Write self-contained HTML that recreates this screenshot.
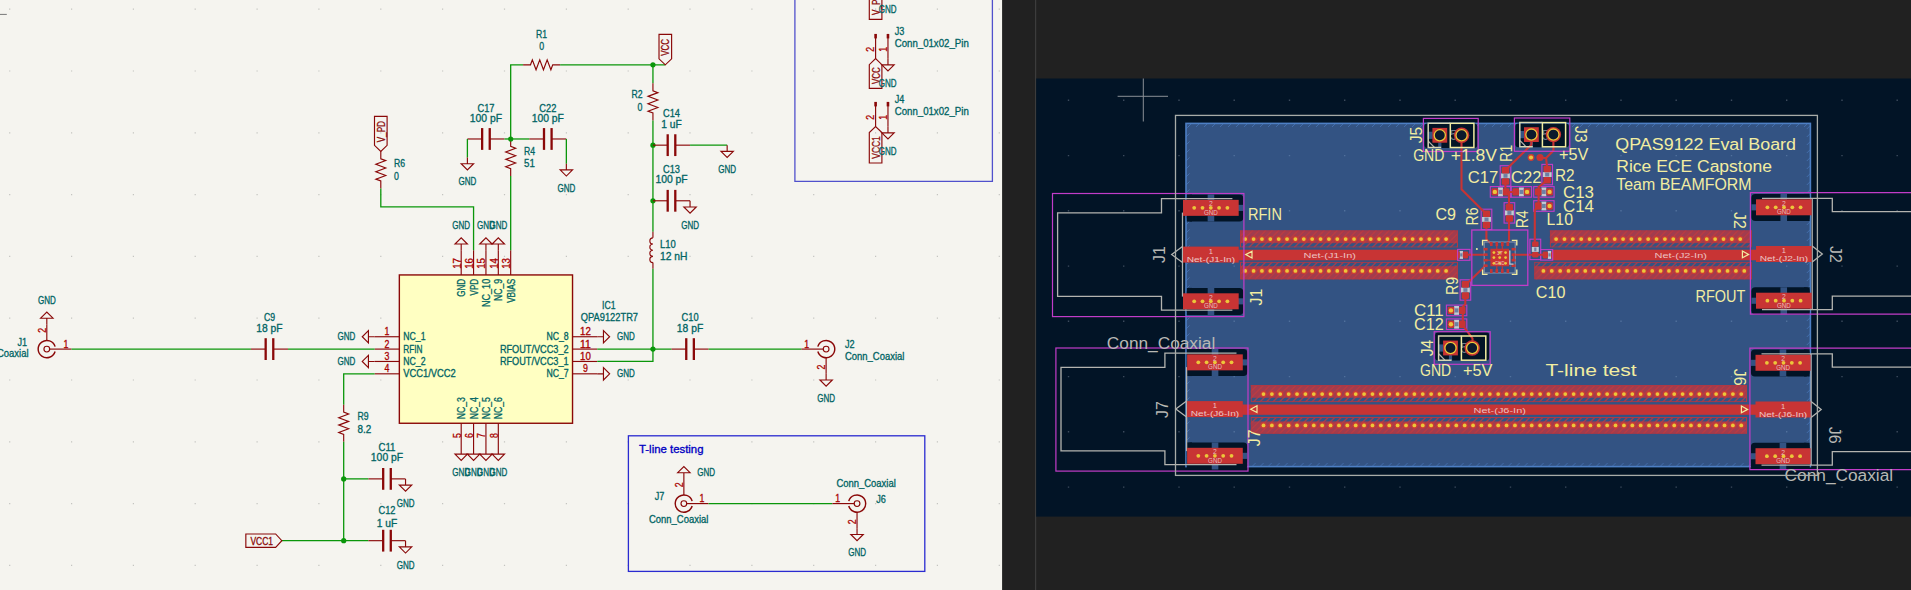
<!DOCTYPE html>
<html><head><meta charset="utf-8"><title>QPA9122 Eval Board</title>
<style>html,body{margin:0;padding:0;background:#212121;overflow:hidden}svg{display:block}text{font-family:"Liberation Sans",sans-serif;white-space:pre}</style></head><body>
<svg width="1911" height="590" viewBox="0 0 1911 590">
<g font-family="Liberation Sans, sans-serif">
<rect x="0" y="0" width="1002.3" height="590" fill="#f5f4ef"/>
<path d="M9.1 9.2h1.2M9.1 71.0h1.2M9.1 132.8h1.2M9.1 194.6h1.2M9.1 256.4h1.2M9.1 318.2h1.2M9.1 380.0h1.2M9.1 441.8h1.2M9.1 503.6h1.2M9.1 565.4h1.2M71.0 9.2h1.2M71.0 71.0h1.2M71.0 132.8h1.2M71.0 194.6h1.2M71.0 256.4h1.2M71.0 318.2h1.2M71.0 380.0h1.2M71.0 441.8h1.2M71.0 503.6h1.2M71.0 565.4h1.2M132.8 9.2h1.2M132.8 71.0h1.2M132.8 132.8h1.2M132.8 194.6h1.2M132.8 256.4h1.2M132.8 318.2h1.2M132.8 380.0h1.2M132.8 441.8h1.2M132.8 503.6h1.2M132.8 565.4h1.2M194.6 9.2h1.2M194.6 71.0h1.2M194.6 132.8h1.2M194.6 194.6h1.2M194.6 256.4h1.2M194.6 318.2h1.2M194.6 380.0h1.2M194.6 441.8h1.2M194.6 503.6h1.2M194.6 565.4h1.2M256.5 9.2h1.2M256.5 71.0h1.2M256.5 132.8h1.2M256.5 194.6h1.2M256.5 256.4h1.2M256.5 318.2h1.2M256.5 380.0h1.2M256.5 441.8h1.2M256.5 503.6h1.2M256.5 565.4h1.2M318.3 9.2h1.2M318.3 71.0h1.2M318.3 132.8h1.2M318.3 194.6h1.2M318.3 256.4h1.2M318.3 318.2h1.2M318.3 380.0h1.2M318.3 441.8h1.2M318.3 503.6h1.2M318.3 565.4h1.2M380.2 9.2h1.2M380.2 71.0h1.2M380.2 132.8h1.2M380.2 194.6h1.2M380.2 256.4h1.2M380.2 318.2h1.2M380.2 380.0h1.2M380.2 441.8h1.2M380.2 503.6h1.2M380.2 565.4h1.2M442.0 9.2h1.2M442.0 71.0h1.2M442.0 132.8h1.2M442.0 194.6h1.2M442.0 256.4h1.2M442.0 318.2h1.2M442.0 380.0h1.2M442.0 441.8h1.2M442.0 503.6h1.2M442.0 565.4h1.2M503.9 9.2h1.2M503.9 71.0h1.2M503.9 132.8h1.2M503.9 194.6h1.2M503.9 256.4h1.2M503.9 318.2h1.2M503.9 380.0h1.2M503.9 441.8h1.2M503.9 503.6h1.2M503.9 565.4h1.2M565.8 9.2h1.2M565.8 71.0h1.2M565.8 132.8h1.2M565.8 194.6h1.2M565.8 256.4h1.2M565.8 318.2h1.2M565.8 380.0h1.2M565.8 441.8h1.2M565.8 503.6h1.2M565.8 565.4h1.2M627.6 9.2h1.2M627.6 71.0h1.2M627.6 132.8h1.2M627.6 194.6h1.2M627.6 256.4h1.2M627.6 318.2h1.2M627.6 380.0h1.2M627.6 441.8h1.2M627.6 503.6h1.2M627.6 565.4h1.2M689.4 9.2h1.2M689.4 71.0h1.2M689.4 132.8h1.2M689.4 194.6h1.2M689.4 256.4h1.2M689.4 318.2h1.2M689.4 380.0h1.2M689.4 441.8h1.2M689.4 503.6h1.2M689.4 565.4h1.2M751.3 9.2h1.2M751.3 71.0h1.2M751.3 132.8h1.2M751.3 194.6h1.2M751.3 256.4h1.2M751.3 318.2h1.2M751.3 380.0h1.2M751.3 441.8h1.2M751.3 503.6h1.2M751.3 565.4h1.2M813.1 9.2h1.2M813.1 71.0h1.2M813.1 132.8h1.2M813.1 194.6h1.2M813.1 256.4h1.2M813.1 318.2h1.2M813.1 380.0h1.2M813.1 441.8h1.2M813.1 503.6h1.2M813.1 565.4h1.2M875.0 9.2h1.2M875.0 71.0h1.2M875.0 132.8h1.2M875.0 194.6h1.2M875.0 256.4h1.2M875.0 318.2h1.2M875.0 380.0h1.2M875.0 441.8h1.2M875.0 503.6h1.2M875.0 565.4h1.2M936.8 9.2h1.2M936.8 71.0h1.2M936.8 132.8h1.2M936.8 194.6h1.2M936.8 256.4h1.2M936.8 318.2h1.2M936.8 380.0h1.2M936.8 441.8h1.2M936.8 503.6h1.2M936.8 565.4h1.2M998.7 9.2h1.2M998.7 71.0h1.2M998.7 132.8h1.2M998.7 194.6h1.2M998.7 256.4h1.2M998.7 318.2h1.2M998.7 380.0h1.2M998.7 441.8h1.2M998.7 503.6h1.2M998.7 565.4h1.2" stroke="#c4c4c0" stroke-width="1.2"/>
<line x1="0.00" y1="14.40" x2="6.80" y2="14.40" stroke="#777" stroke-width="1" stroke-linecap="butt"/>
<path d="M794.9 0 V181.4 H992.4 V0" stroke="#5050cc" stroke-width="1.3" fill="none"/>
<rect x="628.4" y="435.8" width="296.4" height="135.6" stroke="#2a2ad0" stroke-width="1.3" fill="none"/>
<text transform="translate(639.00 449.40) rotate(0)" x="0.00" y="3.80" font-size="9.99" textLength="64.50" lengthAdjust="spacingAndGlyphs" fill="#0000c2" stroke="#0000c2" stroke-width="0.3">T-line testing</text>
<rect x="399.35" y="274.94" width="173.18" height="148.32" fill="#ffffc2" stroke="#8a0808" stroke-width="1.4"/>
<line x1="374.61" y1="336.74" x2="399.35" y2="336.74" stroke="#8a0808" stroke-width="1.15" stroke-linecap="butt"/>
<text transform="translate(403.25 336.34) rotate(0)" x="0.00" y="3.80" font-size="9.99" textLength="22.26" lengthAdjust="spacingAndGlyphs" fill="#006464" stroke="#006464" stroke-width="0.3">NC_1</text>
<text transform="translate(386.98 331.54) rotate(0)" x="-2.45" y="3.80" font-size="9.99" textLength="4.90" lengthAdjust="spacingAndGlyphs" fill="#a90000" stroke="#a90000" stroke-width="0.3">1</text>
<line x1="374.61" y1="349.10" x2="399.35" y2="349.10" stroke="#8a0808" stroke-width="1.15" stroke-linecap="butt"/>
<text transform="translate(403.25 348.70) rotate(0)" x="0.00" y="3.80" font-size="9.99" textLength="19.32" lengthAdjust="spacingAndGlyphs" fill="#006464" stroke="#006464" stroke-width="0.3">RFIN</text>
<text transform="translate(386.98 343.90) rotate(0)" x="-2.45" y="3.80" font-size="9.99" textLength="4.90" lengthAdjust="spacingAndGlyphs" fill="#a90000" stroke="#a90000" stroke-width="0.3">2</text>
<line x1="374.61" y1="361.46" x2="399.35" y2="361.46" stroke="#8a0808" stroke-width="1.15" stroke-linecap="butt"/>
<text transform="translate(403.25 361.06) rotate(0)" x="0.00" y="3.80" font-size="9.99" textLength="22.26" lengthAdjust="spacingAndGlyphs" fill="#006464" stroke="#006464" stroke-width="0.3">NC_2</text>
<text transform="translate(386.98 356.26) rotate(0)" x="-2.45" y="3.80" font-size="9.99" textLength="4.90" lengthAdjust="spacingAndGlyphs" fill="#a90000" stroke="#a90000" stroke-width="0.3">3</text>
<line x1="374.61" y1="373.82" x2="399.35" y2="373.82" stroke="#8a0808" stroke-width="1.15" stroke-linecap="butt"/>
<text transform="translate(403.25 373.42) rotate(0)" x="0.00" y="3.80" font-size="9.99" textLength="52.57" lengthAdjust="spacingAndGlyphs" fill="#006464" stroke="#006464" stroke-width="0.3">VCC1/VCC2</text>
<text transform="translate(386.98 368.62) rotate(0)" x="-2.45" y="3.80" font-size="9.99" textLength="4.90" lengthAdjust="spacingAndGlyphs" fill="#a90000" stroke="#a90000" stroke-width="0.3">4</text>
<line x1="572.53" y1="336.74" x2="597.27" y2="336.74" stroke="#8a0808" stroke-width="1.15" stroke-linecap="butt"/>
<text transform="translate(568.63 336.34) rotate(0)" x="-22.26" y="3.80" font-size="9.99" textLength="22.26" lengthAdjust="spacingAndGlyphs" fill="#006464" stroke="#006464" stroke-width="0.3">NC_8</text>
<text transform="translate(585.40 331.54) rotate(0)" x="-5.39" y="3.80" font-size="9.99" textLength="10.78" lengthAdjust="spacingAndGlyphs" fill="#a90000" stroke="#a90000" stroke-width="0.3">12</text>
<line x1="572.53" y1="349.10" x2="597.27" y2="349.10" stroke="#8a0808" stroke-width="1.15" stroke-linecap="butt"/>
<text transform="translate(568.63 348.70) rotate(0)" x="-68.76" y="3.80" font-size="9.99" textLength="68.76" lengthAdjust="spacingAndGlyphs" fill="#006464" stroke="#006464" stroke-width="0.3">RFOUT/VCC3_2</text>
<text transform="translate(585.40 343.90) rotate(0)" x="-5.39" y="3.80" font-size="9.99" textLength="10.78" lengthAdjust="spacingAndGlyphs" fill="#a90000" stroke="#a90000" stroke-width="0.3">11</text>
<line x1="572.53" y1="361.46" x2="597.27" y2="361.46" stroke="#8a0808" stroke-width="1.15" stroke-linecap="butt"/>
<text transform="translate(568.63 361.06) rotate(0)" x="-68.76" y="3.80" font-size="9.99" textLength="68.76" lengthAdjust="spacingAndGlyphs" fill="#006464" stroke="#006464" stroke-width="0.3">RFOUT/VCC3_1</text>
<text transform="translate(585.40 356.26) rotate(0)" x="-5.39" y="3.80" font-size="9.99" textLength="10.78" lengthAdjust="spacingAndGlyphs" fill="#a90000" stroke="#a90000" stroke-width="0.3">10</text>
<line x1="572.53" y1="373.82" x2="597.27" y2="373.82" stroke="#8a0808" stroke-width="1.15" stroke-linecap="butt"/>
<text transform="translate(568.63 373.42) rotate(0)" x="-22.26" y="3.80" font-size="9.99" textLength="22.26" lengthAdjust="spacingAndGlyphs" fill="#006464" stroke="#006464" stroke-width="0.3">NC_7</text>
<text transform="translate(585.40 368.62) rotate(0)" x="-2.45" y="3.80" font-size="9.99" textLength="4.90" lengthAdjust="spacingAndGlyphs" fill="#a90000" stroke="#a90000" stroke-width="0.3">9</text>
<line x1="461.20" y1="250.22" x2="461.20" y2="274.94" stroke="#8a0808" stroke-width="1.15" stroke-linecap="butt"/>
<text transform="translate(461.50 278.84) rotate(-90)" x="-17.85" y="3.80" font-size="9.99" textLength="17.85" lengthAdjust="spacingAndGlyphs" fill="#006464" stroke="#006464" stroke-width="0.3">GND</text>
<text transform="translate(456.90 263.48) rotate(-90)" x="-5.39" y="3.80" font-size="9.99" textLength="10.78" lengthAdjust="spacingAndGlyphs" fill="#a90000" stroke="#a90000" stroke-width="0.3">17</text>
<line x1="473.57" y1="250.22" x2="473.57" y2="274.94" stroke="#8a0808" stroke-width="1.15" stroke-linecap="butt"/>
<text transform="translate(473.87 278.84) rotate(-90)" x="-16.67" y="3.80" font-size="9.99" textLength="16.67" lengthAdjust="spacingAndGlyphs" fill="#006464" stroke="#006464" stroke-width="0.3">VPD</text>
<text transform="translate(469.27 263.48) rotate(-90)" x="-5.39" y="3.80" font-size="9.99" textLength="10.78" lengthAdjust="spacingAndGlyphs" fill="#a90000" stroke="#a90000" stroke-width="0.3">16</text>
<line x1="485.94" y1="250.22" x2="485.94" y2="274.94" stroke="#8a0808" stroke-width="1.15" stroke-linecap="butt"/>
<text transform="translate(486.24 278.84) rotate(-90)" x="-28.15" y="3.80" font-size="9.99" textLength="28.15" lengthAdjust="spacingAndGlyphs" fill="#006464" stroke="#006464" stroke-width="0.3">NC_10</text>
<text transform="translate(481.64 263.48) rotate(-90)" x="-5.39" y="3.80" font-size="9.99" textLength="10.78" lengthAdjust="spacingAndGlyphs" fill="#a90000" stroke="#a90000" stroke-width="0.3">15</text>
<line x1="498.31" y1="250.22" x2="498.31" y2="274.94" stroke="#8a0808" stroke-width="1.15" stroke-linecap="butt"/>
<text transform="translate(498.61 278.84) rotate(-90)" x="-22.26" y="3.80" font-size="9.99" textLength="22.26" lengthAdjust="spacingAndGlyphs" fill="#006464" stroke="#006464" stroke-width="0.3">NC_9</text>
<text transform="translate(494.01 263.48) rotate(-90)" x="-5.39" y="3.80" font-size="9.99" textLength="10.78" lengthAdjust="spacingAndGlyphs" fill="#a90000" stroke="#a90000" stroke-width="0.3">14</text>
<line x1="510.68" y1="250.22" x2="510.68" y2="274.94" stroke="#8a0808" stroke-width="1.15" stroke-linecap="butt"/>
<text transform="translate(510.98 278.84) rotate(-90)" x="-24.03" y="3.80" font-size="9.99" textLength="24.03" lengthAdjust="spacingAndGlyphs" fill="#006464" stroke="#006464" stroke-width="0.3">VBIAS</text>
<text transform="translate(506.38 263.48) rotate(-90)" x="-5.39" y="3.80" font-size="9.99" textLength="10.78" lengthAdjust="spacingAndGlyphs" fill="#a90000" stroke="#a90000" stroke-width="0.3">13</text>
<line x1="461.20" y1="423.26" x2="461.20" y2="447.98" stroke="#8a0808" stroke-width="1.15" stroke-linecap="butt"/>
<text transform="translate(461.50 419.36) rotate(-90)" x="0.00" y="3.80" font-size="9.99" textLength="22.26" lengthAdjust="spacingAndGlyphs" fill="#006464" stroke="#006464" stroke-width="0.3">NC_3</text>
<text transform="translate(456.90 435.62) rotate(-90)" x="-2.45" y="3.80" font-size="9.99" textLength="4.90" lengthAdjust="spacingAndGlyphs" fill="#a90000" stroke="#a90000" stroke-width="0.3">5</text>
<path d="M461.20 447.98 L461.20 454.16 L455.02 454.16 L461.20 460.34 L467.38 454.16 L461.20 454.16" stroke="#8a0808" stroke-width="1.15" fill="none" stroke-linejoin="miter"/>
<line x1="473.57" y1="423.26" x2="473.57" y2="447.98" stroke="#8a0808" stroke-width="1.15" stroke-linecap="butt"/>
<text transform="translate(473.87 419.36) rotate(-90)" x="0.00" y="3.80" font-size="9.99" textLength="22.26" lengthAdjust="spacingAndGlyphs" fill="#006464" stroke="#006464" stroke-width="0.3">NC_4</text>
<text transform="translate(469.27 435.62) rotate(-90)" x="-2.45" y="3.80" font-size="9.99" textLength="4.90" lengthAdjust="spacingAndGlyphs" fill="#a90000" stroke="#a90000" stroke-width="0.3">6</text>
<path d="M473.57 447.98 L473.57 454.16 L467.39 454.16 L473.57 460.34 L479.75 454.16 L473.57 454.16" stroke="#8a0808" stroke-width="1.15" fill="none" stroke-linejoin="miter"/>
<line x1="485.94" y1="423.26" x2="485.94" y2="447.98" stroke="#8a0808" stroke-width="1.15" stroke-linecap="butt"/>
<text transform="translate(486.24 419.36) rotate(-90)" x="0.00" y="3.80" font-size="9.99" textLength="22.26" lengthAdjust="spacingAndGlyphs" fill="#006464" stroke="#006464" stroke-width="0.3">NC_5</text>
<text transform="translate(481.64 435.62) rotate(-90)" x="-2.45" y="3.80" font-size="9.99" textLength="4.90" lengthAdjust="spacingAndGlyphs" fill="#a90000" stroke="#a90000" stroke-width="0.3">7</text>
<path d="M485.94 447.98 L485.94 454.16 L479.76 454.16 L485.94 460.34 L492.12 454.16 L485.94 454.16" stroke="#8a0808" stroke-width="1.15" fill="none" stroke-linejoin="miter"/>
<line x1="498.31" y1="423.26" x2="498.31" y2="447.98" stroke="#8a0808" stroke-width="1.15" stroke-linecap="butt"/>
<text transform="translate(498.61 419.36) rotate(-90)" x="0.00" y="3.80" font-size="9.99" textLength="22.26" lengthAdjust="spacingAndGlyphs" fill="#006464" stroke="#006464" stroke-width="0.3">NC_6</text>
<text transform="translate(494.01 435.62) rotate(-90)" x="-2.45" y="3.80" font-size="9.99" textLength="4.90" lengthAdjust="spacingAndGlyphs" fill="#a90000" stroke="#a90000" stroke-width="0.3">8</text>
<path d="M498.31 447.98 L498.31 454.16 L492.13 454.16 L498.31 460.34 L504.49 454.16 L498.31 454.16" stroke="#8a0808" stroke-width="1.15" fill="none" stroke-linejoin="miter"/>
<text transform="translate(461.20 472.30) rotate(0)" x="-8.92" y="3.80" font-size="9.99" textLength="17.85" lengthAdjust="spacingAndGlyphs" fill="#006464" stroke="#006464" stroke-width="0.3">GND</text>
<text transform="translate(473.57 472.30) rotate(0)" x="-8.92" y="3.80" font-size="9.99" textLength="17.85" lengthAdjust="spacingAndGlyphs" fill="#006464" stroke="#006464" stroke-width="0.3">GND</text>
<text transform="translate(485.94 472.30) rotate(0)" x="-8.92" y="3.80" font-size="9.99" textLength="17.85" lengthAdjust="spacingAndGlyphs" fill="#006464" stroke="#006464" stroke-width="0.3">GND</text>
<text transform="translate(498.31 472.30) rotate(0)" x="-8.92" y="3.80" font-size="9.99" textLength="17.85" lengthAdjust="spacingAndGlyphs" fill="#006464" stroke="#006464" stroke-width="0.3">GND</text>
<path d="M461.20 250.22 L461.20 244.04 L467.38 244.04 L461.20 237.86 L455.02 244.04 L461.20 244.04" stroke="#8a0808" stroke-width="1.15" fill="none" stroke-linejoin="miter"/>
<text transform="translate(461.20 225.60) rotate(0)" x="-8.92" y="3.80" font-size="9.99" textLength="17.85" lengthAdjust="spacingAndGlyphs" fill="#006464" stroke="#006464" stroke-width="0.3">GND</text>
<path d="M485.94 250.22 L485.94 244.04 L492.12 244.04 L485.94 237.86 L479.76 244.04 L485.94 244.04" stroke="#8a0808" stroke-width="1.15" fill="none" stroke-linejoin="miter"/>
<text transform="translate(485.94 225.60) rotate(0)" x="-8.92" y="3.80" font-size="9.99" textLength="17.85" lengthAdjust="spacingAndGlyphs" fill="#006464" stroke="#006464" stroke-width="0.3">GND</text>
<path d="M498.31 250.22 L498.31 244.04 L504.49 244.04 L498.31 237.86 L492.13 244.04 L498.31 244.04" stroke="#8a0808" stroke-width="1.15" fill="none" stroke-linejoin="miter"/>
<text transform="translate(498.31 225.60) rotate(0)" x="-8.92" y="3.80" font-size="9.99" textLength="17.85" lengthAdjust="spacingAndGlyphs" fill="#006464" stroke="#006464" stroke-width="0.3">GND</text>
<path d="M374.61 336.74 L368.43 336.74 L368.43 330.56 L362.25 336.74 L368.43 342.92 L368.43 336.74" stroke="#8a0808" stroke-width="1.15" fill="none" stroke-linejoin="miter"/>
<text transform="translate(346.40 336.34) rotate(0)" x="-8.92" y="3.80" font-size="9.99" textLength="17.85" lengthAdjust="spacingAndGlyphs" fill="#006464" stroke="#006464" stroke-width="0.3">GND</text>
<path d="M374.61 361.46 L368.43 361.46 L368.43 355.28 L362.25 361.46 L368.43 367.64 L368.43 361.46" stroke="#8a0808" stroke-width="1.15" fill="none" stroke-linejoin="miter"/>
<text transform="translate(346.40 361.06) rotate(0)" x="-8.92" y="3.80" font-size="9.99" textLength="17.85" lengthAdjust="spacingAndGlyphs" fill="#006464" stroke="#006464" stroke-width="0.3">GND</text>
<path d="M597.27 336.74 L603.45 336.74 L603.45 342.92 L609.63 336.74 L603.45 330.56 L603.45 336.74" stroke="#8a0808" stroke-width="1.15" fill="none" stroke-linejoin="miter"/>
<text transform="translate(617.00 336.34) rotate(0)" x="0.00" y="3.80" font-size="9.99" textLength="17.85" lengthAdjust="spacingAndGlyphs" fill="#006464" stroke="#006464" stroke-width="0.3">GND</text>
<path d="M597.27 373.82 L603.45 373.82 L603.45 380.00 L609.63 373.82 L603.45 367.64 L603.45 373.82" stroke="#8a0808" stroke-width="1.15" fill="none" stroke-linejoin="miter"/>
<text transform="translate(617.00 373.42) rotate(0)" x="0.00" y="3.80" font-size="9.99" textLength="17.85" lengthAdjust="spacingAndGlyphs" fill="#006464" stroke="#006464" stroke-width="0.3">GND</text>
<text transform="translate(608.80 305.10) rotate(0)" x="-6.72" y="3.80" font-size="9.99" textLength="13.43" lengthAdjust="spacingAndGlyphs" fill="#006464" stroke="#006464" stroke-width="0.3">IC1</text>
<text transform="translate(609.40 317.60) rotate(0)" x="-28.64" y="3.80" font-size="9.99" textLength="57.28" lengthAdjust="spacingAndGlyphs" fill="#006464" stroke="#006464" stroke-width="0.3">QPA9122TR7</text>
<circle cx="46.81" cy="349.10" r="2.87" stroke="#8a0808" stroke-width="1.15" fill="none"/>
<line x1="49.28" y1="349.10" x2="71.53" y2="349.10" stroke="#8a0808" stroke-width="1.15" stroke-linecap="butt"/>
<line x1="46.81" y1="340.45" x2="46.81" y2="324.38" stroke="#8a0808" stroke-width="1.15" stroke-linecap="butt"/>
<path d="M55.10 346.63 A8.65 8.65 0 1 0 55.10 351.57" stroke="#8a0808" stroke-width="1.45" fill="none"/>
<path d="M46.81 324.38 L46.81 318.20 L52.99 318.20 L46.81 312.02 L40.63 318.20 L46.81 318.20" stroke="#8a0808" stroke-width="1.15" fill="none" stroke-linejoin="miter"/>
<text transform="translate(46.81 299.70) rotate(0)" x="-8.92" y="3.80" font-size="9.99" textLength="17.85" lengthAdjust="spacingAndGlyphs" fill="#006464" stroke="#006464" stroke-width="0.3">GND</text>
<text transform="translate(27.00 341.70) rotate(0)" x="-9.61" y="3.80" font-size="9.99" textLength="9.61" lengthAdjust="spacingAndGlyphs" fill="#006464" stroke="#006464" stroke-width="0.3">J1</text>
<text transform="translate(28.50 352.90) rotate(0)" x="-59.34" y="3.80" font-size="9.99" textLength="59.34" lengthAdjust="spacingAndGlyphs" fill="#006464" stroke="#006464" stroke-width="0.3">Conn_Coaxial</text>
<text transform="translate(66.00 343.70) rotate(0)" x="-2.45" y="3.80" font-size="9.99" textLength="4.90" lengthAdjust="spacingAndGlyphs" fill="#a90000" stroke="#a90000" stroke-width="0.3">1</text>
<text transform="translate(42.40 330.20) rotate(-90)" x="-2.45" y="3.80" font-size="9.99" textLength="4.90" lengthAdjust="spacingAndGlyphs" fill="#a90000" stroke="#a90000" stroke-width="0.3">2</text>
<path d="M71.55 349.10 L250.91 349.10" stroke="#0a960a" stroke-width="1.3" fill="none" stroke-linejoin="miter"/>
<line x1="250.93" y1="349.10" x2="265.77" y2="349.10" stroke="#8a0808" stroke-width="1.15" stroke-linecap="butt"/>
<line x1="273.17" y1="349.10" x2="288.01" y2="349.10" stroke="#8a0808" stroke-width="1.15" stroke-linecap="butt"/>
<line x1="265.67" y1="338.20" x2="265.67" y2="360.00" stroke="#8a0808" stroke-width="2.3" stroke-linecap="butt"/>
<line x1="273.27" y1="338.20" x2="273.27" y2="360.00" stroke="#8a0808" stroke-width="2.3" stroke-linecap="butt"/>
<text transform="translate(269.47 317.30) rotate(0)" x="-5.54" y="3.80" font-size="9.99" textLength="11.08" lengthAdjust="spacingAndGlyphs" fill="#006464" stroke="#006464" stroke-width="0.3">C9</text>
<text transform="translate(269.47 328.10) rotate(0)" x="-13.19" y="3.80" font-size="9.99" textLength="26.38" lengthAdjust="spacingAndGlyphs" fill="#006464" stroke="#006464" stroke-width="0.3">18 pF</text>
<path d="M288.02 349.10 L374.61 349.10" stroke="#0a960a" stroke-width="1.3" fill="none" stroke-linejoin="miter"/>
<path d="M374.61 373.82 L343.69 373.82 L343.69 404.72" stroke="#0a960a" stroke-width="1.3" fill="none" stroke-linejoin="miter"/>
<path d="M343.69 404.72 L343.69 412.14 L348.63 413.99 L338.75 417.70 L348.63 421.41 L338.75 425.11 L348.63 428.82 L338.75 432.53 L343.69 434.38 L343.69 441.80" stroke="#8a0808" stroke-width="1.15" fill="none" stroke-linejoin="miter"/>
<text transform="translate(357.60 416.30) rotate(0)" x="0.00" y="3.80" font-size="9.99" textLength="11.08" lengthAdjust="spacingAndGlyphs" fill="#006464" stroke="#006464" stroke-width="0.3">R9</text>
<text transform="translate(357.60 429.50) rotate(0)" x="0.00" y="3.80" font-size="9.99" textLength="13.73" lengthAdjust="spacingAndGlyphs" fill="#006464" stroke="#006464" stroke-width="0.3">8.2</text>
<path d="M343.69 441.80 L343.69 540.68" stroke="#0a960a" stroke-width="1.3" fill="none" stroke-linejoin="miter"/>
<path d="M281.84 540.68 L368.43 540.68" stroke="#0a960a" stroke-width="1.3" fill="none" stroke-linejoin="miter"/>
<path d="M343.69 478.88 L368.43 478.88" stroke="#0a960a" stroke-width="1.3" fill="none" stroke-linejoin="miter"/>
<circle cx="343.69" cy="478.88" r="2.6" fill="#0a960a"/>
<circle cx="343.69" cy="540.68" r="2.6" fill="#0a960a"/>
<line x1="368.44" y1="478.88" x2="383.28" y2="478.88" stroke="#8a0808" stroke-width="1.15" stroke-linecap="butt"/>
<line x1="390.68" y1="478.88" x2="405.52" y2="478.88" stroke="#8a0808" stroke-width="1.15" stroke-linecap="butt"/>
<line x1="383.18" y1="467.98" x2="383.18" y2="489.78" stroke="#8a0808" stroke-width="2.3" stroke-linecap="butt"/>
<line x1="390.78" y1="467.98" x2="390.78" y2="489.78" stroke="#8a0808" stroke-width="2.3" stroke-linecap="butt"/>
<path d="M405.54 478.88 L405.54 485.06 L399.36 485.06 L405.54 491.24 L411.72 485.06 L405.54 485.06" stroke="#8a0808" stroke-width="1.15" fill="none" stroke-linejoin="miter"/>
<line x1="368.44" y1="540.68" x2="383.28" y2="540.68" stroke="#8a0808" stroke-width="1.15" stroke-linecap="butt"/>
<line x1="390.68" y1="540.68" x2="405.52" y2="540.68" stroke="#8a0808" stroke-width="1.15" stroke-linecap="butt"/>
<line x1="383.18" y1="529.78" x2="383.18" y2="551.58" stroke="#8a0808" stroke-width="2.3" stroke-linecap="butt"/>
<line x1="390.78" y1="529.78" x2="390.78" y2="551.58" stroke="#8a0808" stroke-width="2.3" stroke-linecap="butt"/>
<path d="M405.54 540.68 L405.54 546.86 L399.36 546.86 L405.54 553.04 L411.72 546.86 L405.54 546.86" stroke="#8a0808" stroke-width="1.15" fill="none" stroke-linejoin="miter"/>
<text transform="translate(386.98 447.50) rotate(0)" x="-8.48" y="3.80" font-size="9.99" textLength="16.96" lengthAdjust="spacingAndGlyphs" fill="#006464" stroke="#006464" stroke-width="0.3">C11</text>
<text transform="translate(386.98 457.60) rotate(0)" x="-16.13" y="3.80" font-size="9.99" textLength="32.27" lengthAdjust="spacingAndGlyphs" fill="#006464" stroke="#006464" stroke-width="0.3">100 pF</text>
<text transform="translate(386.98 510.50) rotate(0)" x="-8.48" y="3.80" font-size="9.99" textLength="16.96" lengthAdjust="spacingAndGlyphs" fill="#006464" stroke="#006464" stroke-width="0.3">C12</text>
<text transform="translate(386.98 523.00) rotate(0)" x="-10.25" y="3.80" font-size="9.99" textLength="20.49" lengthAdjust="spacingAndGlyphs" fill="#006464" stroke="#006464" stroke-width="0.3">1 uF</text>
<text transform="translate(405.54 502.70) rotate(0)" x="-8.92" y="3.80" font-size="9.99" textLength="17.85" lengthAdjust="spacingAndGlyphs" fill="#006464" stroke="#006464" stroke-width="0.3">GND</text>
<text transform="translate(405.54 565.10) rotate(0)" x="-8.92" y="3.80" font-size="9.99" textLength="17.85" lengthAdjust="spacingAndGlyphs" fill="#006464" stroke="#006464" stroke-width="0.3">GND</text>
<path d="M245.84 533.98 L275.64 533.98 L281.84 540.68 L275.64 547.38 L245.84 547.38 Z" stroke="#8a0808" stroke-width="1.15" fill="none" stroke-linejoin="miter"/>
<text transform="translate(250.44 540.88) rotate(0)" x="0.00" y="3.80" font-size="9.99" textLength="22.55" lengthAdjust="spacingAndGlyphs" fill="#8a0808" stroke="#8a0808" stroke-width="0.3">VCC1</text>
<path d="M374.50 116.44 L387.10 116.44 L387.10 145.34 L380.80 151.34 L374.50 145.34 Z" stroke="#8a0808" stroke-width="1.15" fill="none" stroke-linejoin="miter"/>
<text transform="translate(381.10 142.34) rotate(-90)" x="0.00" y="3.80" font-size="9.99" textLength="21.38" lengthAdjust="spacingAndGlyphs" fill="#8a0808" stroke="#8a0808" stroke-width="0.3">V_PD</text>
<path d="M380.80 151.34 L380.80 158.76 L385.74 160.61 L375.86 164.32 L385.74 168.03 L375.86 171.73 L385.74 175.44 L375.86 179.15 L380.80 181.00 L380.80 188.42" stroke="#8a0808" stroke-width="1.15" fill="none" stroke-linejoin="miter"/>
<text transform="translate(394.00 163.60) rotate(0)" x="0.00" y="3.80" font-size="9.99" textLength="11.08" lengthAdjust="spacingAndGlyphs" fill="#006464" stroke="#006464" stroke-width="0.3">R6</text>
<text transform="translate(394.00 175.80) rotate(0)" x="0.00" y="3.80" font-size="9.99" textLength="4.90" lengthAdjust="spacingAndGlyphs" fill="#006464" stroke="#006464" stroke-width="0.3">0</text>
<path d="M380.80 188.42 L380.80 206.96 L473.57 206.96 L473.57 250.22" stroke="#0a960a" stroke-width="1.3" fill="none" stroke-linejoin="miter"/>
<path d="M510.68 250.22 L510.68 176.06" stroke="#0a960a" stroke-width="1.3" fill="none" stroke-linejoin="miter"/>
<path d="M510.68 138.98 L510.68 146.40 L515.63 148.25 L505.74 151.96 L515.63 155.67 L505.74 159.37 L515.63 163.08 L505.74 166.79 L510.68 168.64 L510.68 176.06" stroke="#8a0808" stroke-width="1.15" fill="none" stroke-linejoin="miter"/>
<path d="M510.68 138.98 L510.68 64.82 L523.06 64.82" stroke="#0a960a" stroke-width="1.3" fill="none" stroke-linejoin="miter"/>
<path d="M523.07 64.82 L530.49 64.82 L532.34 59.88 L536.05 69.76 L539.76 59.88 L543.46 69.76 L547.17 59.88 L550.88 69.76 L552.73 64.82 L560.15 64.82" stroke="#8a0808" stroke-width="1.15" fill="none" stroke-linejoin="miter"/>
<path d="M560.16 64.82 L665.31 64.82" stroke="#0a960a" stroke-width="1.3" fill="none" stroke-linejoin="miter"/>
<text transform="translate(541.61 33.90) rotate(0)" x="-5.54" y="3.80" font-size="9.99" textLength="11.08" lengthAdjust="spacingAndGlyphs" fill="#006464" stroke="#006464" stroke-width="0.3">R1</text>
<text transform="translate(541.61 46.10) rotate(0)" x="-2.45" y="3.80" font-size="9.99" textLength="4.90" lengthAdjust="spacingAndGlyphs" fill="#006464" stroke="#006464" stroke-width="0.3">0</text>
<text transform="translate(524.10 151.10) rotate(0)" x="0.00" y="3.80" font-size="9.99" textLength="11.08" lengthAdjust="spacingAndGlyphs" fill="#006464" stroke="#006464" stroke-width="0.3">R4</text>
<text transform="translate(524.10 163.60) rotate(0)" x="0.00" y="3.80" font-size="9.99" textLength="10.78" lengthAdjust="spacingAndGlyphs" fill="#006464" stroke="#006464" stroke-width="0.3">51</text>
<line x1="467.40" y1="138.98" x2="482.24" y2="138.98" stroke="#8a0808" stroke-width="1.15" stroke-linecap="butt"/>
<line x1="489.64" y1="138.98" x2="504.48" y2="138.98" stroke="#8a0808" stroke-width="1.15" stroke-linecap="butt"/>
<line x1="482.14" y1="128.08" x2="482.14" y2="149.88" stroke="#8a0808" stroke-width="2.3" stroke-linecap="butt"/>
<line x1="489.74" y1="128.08" x2="489.74" y2="149.88" stroke="#8a0808" stroke-width="2.3" stroke-linecap="butt"/>
<line x1="529.25" y1="138.98" x2="544.09" y2="138.98" stroke="#8a0808" stroke-width="1.15" stroke-linecap="butt"/>
<line x1="551.50" y1="138.98" x2="566.33" y2="138.98" stroke="#8a0808" stroke-width="1.15" stroke-linecap="butt"/>
<line x1="544.00" y1="128.08" x2="544.00" y2="149.88" stroke="#8a0808" stroke-width="2.3" stroke-linecap="butt"/>
<line x1="551.59" y1="128.08" x2="551.59" y2="149.88" stroke="#8a0808" stroke-width="2.3" stroke-linecap="butt"/>
<path d="M504.50 138.98 L529.24 138.98" stroke="#0a960a" stroke-width="1.3" fill="none" stroke-linejoin="miter"/>
<circle cx="510.68" cy="138.98" r="2.6" fill="#0a960a"/>
<path d="M467.39 138.98 L467.39 157.52" stroke="#0a960a" stroke-width="1.3" fill="none" stroke-linejoin="miter"/>
<path d="M467.39 157.52 L467.39 163.70 L461.21 163.70 L467.39 169.88 L473.57 163.70 L467.39 163.70" stroke="#8a0808" stroke-width="1.15" fill="none" stroke-linejoin="miter"/>
<path d="M566.35 138.98 L566.35 163.70" stroke="#0a960a" stroke-width="1.3" fill="none" stroke-linejoin="miter"/>
<path d="M566.35 163.70 L566.35 169.88 L560.17 169.88 L566.35 176.06 L572.53 169.88 L566.35 169.88" stroke="#8a0808" stroke-width="1.15" fill="none" stroke-linejoin="miter"/>
<text transform="translate(467.39 181.60) rotate(0)" x="-8.92" y="3.80" font-size="9.99" textLength="17.85" lengthAdjust="spacingAndGlyphs" fill="#006464" stroke="#006464" stroke-width="0.3">GND</text>
<text transform="translate(566.35 188.00) rotate(0)" x="-8.92" y="3.80" font-size="9.99" textLength="17.85" lengthAdjust="spacingAndGlyphs" fill="#006464" stroke="#006464" stroke-width="0.3">GND</text>
<text transform="translate(485.94 108.40) rotate(0)" x="-8.48" y="3.80" font-size="9.99" textLength="16.96" lengthAdjust="spacingAndGlyphs" fill="#006464" stroke="#006464" stroke-width="0.3">C17</text>
<text transform="translate(485.94 118.20) rotate(0)" x="-16.13" y="3.80" font-size="9.99" textLength="32.27" lengthAdjust="spacingAndGlyphs" fill="#006464" stroke="#006464" stroke-width="0.3">100 pF</text>
<text transform="translate(547.79 108.40) rotate(0)" x="-8.48" y="3.80" font-size="9.99" textLength="16.96" lengthAdjust="spacingAndGlyphs" fill="#006464" stroke="#006464" stroke-width="0.3">C22</text>
<text transform="translate(547.79 118.20) rotate(0)" x="-16.13" y="3.80" font-size="9.99" textLength="32.27" lengthAdjust="spacingAndGlyphs" fill="#006464" stroke="#006464" stroke-width="0.3">100 pF</text>
<path d="M659.01 34.42 L671.61 34.42 L671.61 58.82 L665.31 64.82 L659.01 58.82 Z" stroke="#8a0808" stroke-width="1.15" fill="none" stroke-linejoin="miter"/>
<text transform="translate(665.61 55.82) rotate(-90)" x="0.00" y="3.80" font-size="9.99" textLength="16.67" lengthAdjust="spacingAndGlyphs" fill="#8a0808" stroke="#8a0808" stroke-width="0.3">VCC</text>
<circle cx="652.94" cy="64.82" r="2.6" fill="#0a960a"/>
<path d="M652.94 64.82 L652.94 83.36" stroke="#0a960a" stroke-width="1.3" fill="none" stroke-linejoin="miter"/>
<path d="M652.94 83.36 L652.94 90.78 L657.88 92.63 L648.00 96.34 L657.88 100.05 L648.00 103.75 L657.88 107.46 L648.00 111.17 L652.94 113.02 L652.94 120.44" stroke="#8a0808" stroke-width="1.15" fill="none" stroke-linejoin="miter"/>
<text transform="translate(642.50 94.50) rotate(0)" x="-11.08" y="3.80" font-size="9.99" textLength="11.08" lengthAdjust="spacingAndGlyphs" fill="#006464" stroke="#006464" stroke-width="0.3">R2</text>
<text transform="translate(642.50 107.00) rotate(0)" x="-4.90" y="3.80" font-size="9.99" textLength="4.90" lengthAdjust="spacingAndGlyphs" fill="#006464" stroke="#006464" stroke-width="0.3">0</text>
<path d="M652.94 120.44 L652.94 231.68" stroke="#0a960a" stroke-width="1.3" fill="none" stroke-linejoin="miter"/>
<circle cx="652.94" cy="145.16" r="2.6" fill="#0a960a"/>
<circle cx="652.94" cy="200.78" r="2.6" fill="#0a960a"/>
<line x1="652.96" y1="145.16" x2="667.79" y2="145.16" stroke="#8a0808" stroke-width="1.15" stroke-linecap="butt"/>
<line x1="675.20" y1="145.16" x2="690.03" y2="145.16" stroke="#8a0808" stroke-width="1.15" stroke-linecap="butt"/>
<line x1="667.70" y1="134.26" x2="667.70" y2="156.06" stroke="#8a0808" stroke-width="2.3" stroke-linecap="butt"/>
<line x1="675.29" y1="134.26" x2="675.29" y2="156.06" stroke="#8a0808" stroke-width="2.3" stroke-linecap="butt"/>
<path d="M690.05 145.16 L727.16 145.16" stroke="#0a960a" stroke-width="1.3" fill="none" stroke-linejoin="miter"/>
<path d="M727.16 145.16 L727.16 151.34 L720.98 151.34 L727.16 157.52 L733.34 151.34 L727.16 151.34" stroke="#8a0808" stroke-width="1.15" fill="none" stroke-linejoin="miter"/>
<text transform="translate(727.16 169.40) rotate(0)" x="-8.92" y="3.80" font-size="9.99" textLength="17.85" lengthAdjust="spacingAndGlyphs" fill="#006464" stroke="#006464" stroke-width="0.3">GND</text>
<text transform="translate(671.50 113.50) rotate(0)" x="-8.48" y="3.80" font-size="9.99" textLength="16.96" lengthAdjust="spacingAndGlyphs" fill="#006464" stroke="#006464" stroke-width="0.3">C14</text>
<text transform="translate(671.50 123.70) rotate(0)" x="-10.25" y="3.80" font-size="9.99" textLength="20.49" lengthAdjust="spacingAndGlyphs" fill="#006464" stroke="#006464" stroke-width="0.3">1 uF</text>
<line x1="652.96" y1="200.78" x2="667.79" y2="200.78" stroke="#8a0808" stroke-width="1.15" stroke-linecap="butt"/>
<line x1="675.20" y1="200.78" x2="690.03" y2="200.78" stroke="#8a0808" stroke-width="1.15" stroke-linecap="butt"/>
<line x1="667.70" y1="189.88" x2="667.70" y2="211.68" stroke="#8a0808" stroke-width="2.3" stroke-linecap="butt"/>
<line x1="675.29" y1="189.88" x2="675.29" y2="211.68" stroke="#8a0808" stroke-width="2.3" stroke-linecap="butt"/>
<path d="M690.05 200.78 L690.05 206.96 L683.87 206.96 L690.05 213.14 L696.23 206.96 L690.05 206.96" stroke="#8a0808" stroke-width="1.15" fill="none" stroke-linejoin="miter"/>
<text transform="translate(690.05 225.50) rotate(0)" x="-8.92" y="3.80" font-size="9.99" textLength="17.85" lengthAdjust="spacingAndGlyphs" fill="#006464" stroke="#006464" stroke-width="0.3">GND</text>
<text transform="translate(671.50 169.40) rotate(0)" x="-8.48" y="3.80" font-size="9.99" textLength="16.96" lengthAdjust="spacingAndGlyphs" fill="#006464" stroke="#006464" stroke-width="0.3">C13</text>
<text transform="translate(671.50 179.20) rotate(0)" x="-16.13" y="3.80" font-size="9.99" textLength="32.27" lengthAdjust="spacingAndGlyphs" fill="#006464" stroke="#006464" stroke-width="0.3">100 pF</text>
<line x1="652.94" y1="231.68" x2="652.94" y2="237.86" stroke="#8a0808" stroke-width="1.15" stroke-linecap="butt"/>
<line x1="652.94" y1="262.58" x2="652.94" y2="268.76" stroke="#8a0808" stroke-width="1.15" stroke-linecap="butt"/>
<path d="M652.94 237.86 A3.09 3.09 0 0 0 652.94 244.04 A3.09 3.09 0 0 0 652.94 250.22 A3.09 3.09 0 0 0 652.94 256.40 A3.09 3.09 0 0 0 652.94 262.58" stroke="#8a0808" stroke-width="1.15" fill="none"/>
<text transform="translate(659.90 244.20) rotate(0)" x="0.00" y="3.80" font-size="9.99" textLength="15.79" lengthAdjust="spacingAndGlyphs" fill="#006464" stroke="#006464" stroke-width="0.3">L10</text>
<text transform="translate(659.90 256.00) rotate(0)" x="0.00" y="3.80" font-size="9.99" textLength="27.56" lengthAdjust="spacingAndGlyphs" fill="#006464" stroke="#006464" stroke-width="0.3">12 nH</text>
<path d="M652.94 268.76 L652.94 361.46 L597.27 361.46" stroke="#0a960a" stroke-width="1.3" fill="none" stroke-linejoin="miter"/>
<path d="M597.27 349.10 L671.50 349.10" stroke="#0a960a" stroke-width="1.3" fill="none" stroke-linejoin="miter"/>
<circle cx="652.94" cy="349.10" r="2.6" fill="#0a960a"/>
<line x1="671.51" y1="349.10" x2="686.35" y2="349.10" stroke="#8a0808" stroke-width="1.15" stroke-linecap="butt"/>
<line x1="693.75" y1="349.10" x2="708.59" y2="349.10" stroke="#8a0808" stroke-width="1.15" stroke-linecap="butt"/>
<line x1="686.25" y1="338.20" x2="686.25" y2="360.00" stroke="#8a0808" stroke-width="2.3" stroke-linecap="butt"/>
<line x1="693.85" y1="338.20" x2="693.85" y2="360.00" stroke="#8a0808" stroke-width="2.3" stroke-linecap="butt"/>
<text transform="translate(690.05 317.40) rotate(0)" x="-8.48" y="3.80" font-size="9.99" textLength="16.96" lengthAdjust="spacingAndGlyphs" fill="#006464" stroke="#006464" stroke-width="0.3">C10</text>
<text transform="translate(690.05 328.40) rotate(0)" x="-13.19" y="3.80" font-size="9.99" textLength="26.38" lengthAdjust="spacingAndGlyphs" fill="#006464" stroke="#006464" stroke-width="0.3">18 pF</text>
<path d="M708.61 349.10 L801.38 349.10" stroke="#0a960a" stroke-width="1.3" fill="none" stroke-linejoin="miter"/>
<circle cx="826.12" cy="349.10" r="2.87" stroke="#8a0808" stroke-width="1.15" fill="none"/>
<line x1="823.65" y1="349.10" x2="801.40" y2="349.10" stroke="#8a0808" stroke-width="1.15" stroke-linecap="butt"/>
<line x1="826.12" y1="357.75" x2="826.12" y2="373.82" stroke="#8a0808" stroke-width="1.15" stroke-linecap="butt"/>
<path d="M817.83 346.63 A8.65 8.65 0 1 1 817.83 351.57" stroke="#8a0808" stroke-width="1.45" fill="none"/>
<path d="M826.12 373.82 L826.12 380.00 L819.94 380.00 L826.12 386.18 L832.30 380.00 L826.12 380.00" stroke="#8a0808" stroke-width="1.15" fill="none" stroke-linejoin="miter"/>
<text transform="translate(826.12 398.30) rotate(0)" x="-8.92" y="3.80" font-size="9.99" textLength="17.85" lengthAdjust="spacingAndGlyphs" fill="#006464" stroke="#006464" stroke-width="0.3">GND</text>
<text transform="translate(845.00 344.00) rotate(0)" x="0.00" y="3.80" font-size="9.99" textLength="9.61" lengthAdjust="spacingAndGlyphs" fill="#006464" stroke="#006464" stroke-width="0.3">J2</text>
<text transform="translate(845.00 356.30) rotate(0)" x="0.00" y="3.80" font-size="9.99" textLength="59.34" lengthAdjust="spacingAndGlyphs" fill="#006464" stroke="#006464" stroke-width="0.3">Conn_Coaxial</text>
<text transform="translate(806.70 343.80) rotate(0)" x="-2.45" y="3.80" font-size="9.99" textLength="4.90" lengthAdjust="spacingAndGlyphs" fill="#a90000" stroke="#a90000" stroke-width="0.3">1</text>
<text transform="translate(820.90 367.00) rotate(-90)" x="-2.45" y="3.80" font-size="9.99" textLength="4.90" lengthAdjust="spacingAndGlyphs" fill="#a90000" stroke="#a90000" stroke-width="0.3">2</text>
<circle cx="683.87" cy="503.60" r="2.87" stroke="#8a0808" stroke-width="1.15" fill="none"/>
<line x1="686.34" y1="503.60" x2="708.58" y2="503.60" stroke="#8a0808" stroke-width="1.15" stroke-linecap="butt"/>
<line x1="683.87" y1="494.95" x2="683.87" y2="478.88" stroke="#8a0808" stroke-width="1.15" stroke-linecap="butt"/>
<path d="M692.16 501.13 A8.65 8.65 0 1 0 692.16 506.07" stroke="#8a0808" stroke-width="1.45" fill="none"/>
<path d="M683.87 478.88 L683.87 472.70 L690.04 472.70 L683.87 466.52 L677.69 472.70 L683.87 472.70" stroke="#8a0808" stroke-width="1.15" fill="none" stroke-linejoin="miter"/>
<text transform="translate(697.30 472.50) rotate(0)" x="0.00" y="3.80" font-size="9.99" textLength="17.85" lengthAdjust="spacingAndGlyphs" fill="#006464" stroke="#006464" stroke-width="0.3">GND</text>
<text transform="translate(654.70 496.00) rotate(0)" x="0.00" y="3.80" font-size="9.99" textLength="9.61" lengthAdjust="spacingAndGlyphs" fill="#006464" stroke="#006464" stroke-width="0.3">J7</text>
<text transform="translate(649.00 519.60) rotate(0)" x="0.00" y="3.80" font-size="9.99" textLength="59.34" lengthAdjust="spacingAndGlyphs" fill="#006464" stroke="#006464" stroke-width="0.3">Conn_Coaxial</text>
<text transform="translate(701.90 498.50) rotate(0)" x="-2.45" y="3.80" font-size="9.99" textLength="4.90" lengthAdjust="spacingAndGlyphs" fill="#a90000" stroke="#a90000" stroke-width="0.3">1</text>
<text transform="translate(679.10 484.70) rotate(-90)" x="-2.45" y="3.80" font-size="9.99" textLength="4.90" lengthAdjust="spacingAndGlyphs" fill="#a90000" stroke="#a90000" stroke-width="0.3">2</text>
<path d="M708.61 503.60 L832.30 503.60" stroke="#0a960a" stroke-width="1.3" fill="none" stroke-linejoin="miter"/>
<circle cx="857.04" cy="503.60" r="2.87" stroke="#8a0808" stroke-width="1.15" fill="none"/>
<line x1="854.57" y1="503.60" x2="832.33" y2="503.60" stroke="#8a0808" stroke-width="1.15" stroke-linecap="butt"/>
<line x1="857.04" y1="512.25" x2="857.04" y2="528.32" stroke="#8a0808" stroke-width="1.15" stroke-linecap="butt"/>
<path d="M848.75 501.13 A8.65 8.65 0 1 1 848.75 506.07" stroke="#8a0808" stroke-width="1.45" fill="none"/>
<path d="M857.04 528.32 L857.04 534.50 L850.87 534.50 L857.04 540.68 L863.22 534.50 L857.04 534.50" stroke="#8a0808" stroke-width="1.15" fill="none" stroke-linejoin="miter"/>
<text transform="translate(857.04 552.50) rotate(0)" x="-8.92" y="3.80" font-size="9.99" textLength="17.85" lengthAdjust="spacingAndGlyphs" fill="#006464" stroke="#006464" stroke-width="0.3">GND</text>
<text transform="translate(836.40 482.80) rotate(0)" x="0.00" y="3.80" font-size="9.99" textLength="59.34" lengthAdjust="spacingAndGlyphs" fill="#006464" stroke="#006464" stroke-width="0.3">Conn_Coaxial</text>
<text transform="translate(876.30 498.80) rotate(0)" x="0.00" y="3.80" font-size="9.99" textLength="9.61" lengthAdjust="spacingAndGlyphs" fill="#006464" stroke="#006464" stroke-width="0.3">J6</text>
<text transform="translate(837.80 498.50) rotate(0)" x="-2.45" y="3.80" font-size="9.99" textLength="4.90" lengthAdjust="spacingAndGlyphs" fill="#a90000" stroke="#a90000" stroke-width="0.3">1</text>
<text transform="translate(851.90 521.80) rotate(-90)" x="-2.45" y="3.80" font-size="9.99" textLength="4.90" lengthAdjust="spacingAndGlyphs" fill="#a90000" stroke="#a90000" stroke-width="0.3">2</text>
<line x1="875.60" y1="-40.24" x2="875.60" y2="-15.52" stroke="#8a0808" stroke-width="1.15" stroke-linecap="butt"/>
<line x1="875.60" y1="-40.24" x2="875.60" y2="-35.74" stroke="#8a0808" stroke-width="2.6" stroke-linecap="butt"/>
<line x1="887.97" y1="-40.24" x2="887.97" y2="-15.52" stroke="#8a0808" stroke-width="1.15" stroke-linecap="butt"/>
<line x1="887.97" y1="-40.24" x2="887.97" y2="-35.74" stroke="#8a0808" stroke-width="2.6" stroke-linecap="butt"/>
<path d="M887.97 -15.52 L887.97 -9.34 L881.79 -9.34 L887.97 -3.16 L894.15 -9.34 L887.97 -9.34" stroke="#8a0808" stroke-width="1.15" fill="none" stroke-linejoin="miter"/>
<path d="M869.30 19.38 L881.90 19.38 L881.90 -9.52 L875.60 -15.52 L869.30 -9.52 Z" stroke="#8a0808" stroke-width="1.15" fill="none" stroke-linejoin="miter"/>
<text transform="translate(875.90 15.08) rotate(-90)" x="0.00" y="3.80" font-size="9.99" textLength="21.38" lengthAdjust="spacingAndGlyphs" fill="#8a0808" stroke="#8a0808" stroke-width="0.3">V_PD</text>
<text transform="translate(887.67 9.50) rotate(0)" x="-8.92" y="3.80" font-size="9.99" textLength="17.85" lengthAdjust="spacingAndGlyphs" fill="#006464" stroke="#006464" stroke-width="0.3">GND</text>
<text transform="translate(894.70 -43.14) rotate(0)" x="0.00" y="3.80" font-size="9.99" textLength="9.61" lengthAdjust="spacingAndGlyphs" fill="#006464" stroke="#006464" stroke-width="0.3">J5</text>
<text transform="translate(894.70 -30.94) rotate(0)" x="0.00" y="3.80" font-size="9.99" textLength="74.05" lengthAdjust="spacingAndGlyphs" fill="#006464" stroke="#006464" stroke-width="0.3">Conn_01x02_Pin</text>
<text transform="translate(870.50 -24.74) rotate(-90)" x="-2.45" y="3.80" font-size="9.99" textLength="4.90" lengthAdjust="spacingAndGlyphs" fill="#a90000" stroke="#a90000" stroke-width="0.3">2</text>
<text transform="translate(883.40 -24.74) rotate(-90)" x="-2.45" y="3.80" font-size="9.99" textLength="4.90" lengthAdjust="spacingAndGlyphs" fill="#a90000" stroke="#a90000" stroke-width="0.3">1</text>
<line x1="875.60" y1="33.92" x2="875.60" y2="58.64" stroke="#8a0808" stroke-width="1.15" stroke-linecap="butt"/>
<line x1="875.60" y1="33.92" x2="875.60" y2="38.42" stroke="#8a0808" stroke-width="2.6" stroke-linecap="butt"/>
<line x1="887.97" y1="33.92" x2="887.97" y2="58.64" stroke="#8a0808" stroke-width="1.15" stroke-linecap="butt"/>
<line x1="887.97" y1="33.92" x2="887.97" y2="38.42" stroke="#8a0808" stroke-width="2.6" stroke-linecap="butt"/>
<path d="M887.97 58.64 L887.97 64.82 L881.79 64.82 L887.97 71.00 L894.15 64.82 L887.97 64.82" stroke="#8a0808" stroke-width="1.15" fill="none" stroke-linejoin="miter"/>
<path d="M869.30 88.34 L881.90 88.34 L881.90 64.64 L875.60 58.64 L869.30 64.64 Z" stroke="#8a0808" stroke-width="1.15" fill="none" stroke-linejoin="miter"/>
<text transform="translate(875.90 84.04) rotate(-90)" x="0.00" y="3.80" font-size="9.99" textLength="16.67" lengthAdjust="spacingAndGlyphs" fill="#8a0808" stroke="#8a0808" stroke-width="0.3">VCC</text>
<text transform="translate(887.67 83.66) rotate(0)" x="-8.92" y="3.80" font-size="9.99" textLength="17.85" lengthAdjust="spacingAndGlyphs" fill="#006464" stroke="#006464" stroke-width="0.3">GND</text>
<text transform="translate(894.70 31.02) rotate(0)" x="0.00" y="3.80" font-size="9.99" textLength="9.61" lengthAdjust="spacingAndGlyphs" fill="#006464" stroke="#006464" stroke-width="0.3">J3</text>
<text transform="translate(894.70 43.22) rotate(0)" x="0.00" y="3.80" font-size="9.99" textLength="74.05" lengthAdjust="spacingAndGlyphs" fill="#006464" stroke="#006464" stroke-width="0.3">Conn_01x02_Pin</text>
<text transform="translate(870.50 49.42) rotate(-90)" x="-2.45" y="3.80" font-size="9.99" textLength="4.90" lengthAdjust="spacingAndGlyphs" fill="#a90000" stroke="#a90000" stroke-width="0.3">2</text>
<text transform="translate(883.40 49.42) rotate(-90)" x="-2.45" y="3.80" font-size="9.99" textLength="4.90" lengthAdjust="spacingAndGlyphs" fill="#a90000" stroke="#a90000" stroke-width="0.3">1</text>
<line x1="875.60" y1="101.90" x2="875.60" y2="126.62" stroke="#8a0808" stroke-width="1.15" stroke-linecap="butt"/>
<line x1="875.60" y1="101.90" x2="875.60" y2="106.40" stroke="#8a0808" stroke-width="2.6" stroke-linecap="butt"/>
<line x1="887.97" y1="101.90" x2="887.97" y2="126.62" stroke="#8a0808" stroke-width="1.15" stroke-linecap="butt"/>
<line x1="887.97" y1="101.90" x2="887.97" y2="106.40" stroke="#8a0808" stroke-width="2.6" stroke-linecap="butt"/>
<path d="M887.97 126.62 L887.97 132.80 L881.79 132.80 L887.97 138.98 L894.15 132.80 L887.97 132.80" stroke="#8a0808" stroke-width="1.15" fill="none" stroke-linejoin="miter"/>
<path d="M869.30 163.02 L881.90 163.02 L881.90 132.62 L875.60 126.62 L869.30 132.62 Z" stroke="#8a0808" stroke-width="1.15" fill="none" stroke-linejoin="miter"/>
<text transform="translate(875.90 158.72) rotate(-90)" x="0.00" y="3.80" font-size="9.99" textLength="22.55" lengthAdjust="spacingAndGlyphs" fill="#8a0808" stroke="#8a0808" stroke-width="0.3">VCC1</text>
<text transform="translate(887.67 151.64) rotate(0)" x="-8.92" y="3.80" font-size="9.99" textLength="17.85" lengthAdjust="spacingAndGlyphs" fill="#006464" stroke="#006464" stroke-width="0.3">GND</text>
<text transform="translate(894.70 99.00) rotate(0)" x="0.00" y="3.80" font-size="9.99" textLength="9.61" lengthAdjust="spacingAndGlyphs" fill="#006464" stroke="#006464" stroke-width="0.3">J4</text>
<text transform="translate(894.70 111.20) rotate(0)" x="0.00" y="3.80" font-size="9.99" textLength="74.05" lengthAdjust="spacingAndGlyphs" fill="#006464" stroke="#006464" stroke-width="0.3">Conn_01x02_Pin</text>
<text transform="translate(870.50 117.40) rotate(-90)" x="-2.45" y="3.80" font-size="9.99" textLength="4.90" lengthAdjust="spacingAndGlyphs" fill="#a90000" stroke="#a90000" stroke-width="0.3">2</text>
<text transform="translate(883.40 117.40) rotate(-90)" x="-2.45" y="3.80" font-size="9.99" textLength="4.90" lengthAdjust="spacingAndGlyphs" fill="#a90000" stroke="#a90000" stroke-width="0.3">1</text>
</g>
<g font-family="Liberation Sans, sans-serif">
<rect x="1002.3" y="0" width="908.7" height="590" fill="#212121"/>
<rect x="1035" y="0" width="1.2" height="590" fill="#3c3c3c"/>
<rect x="1036.2" y="78.5" width="874.8" height="438.1" fill="#021426"/>
<path d="M1067.8 100.3h1.4M1067.8 155.6h1.4M1067.8 210.8h1.4M1067.8 266.1h1.4M1067.8 321.3h1.4M1067.8 376.6h1.4M1067.8 431.8h1.4M1067.8 487.1h1.4M1123.0 100.3h1.4M1123.0 155.6h1.4M1123.0 210.8h1.4M1123.0 266.1h1.4M1123.0 321.3h1.4M1123.0 376.6h1.4M1123.0 431.8h1.4M1123.0 487.1h1.4M1178.3 100.3h1.4M1178.3 155.6h1.4M1178.3 210.8h1.4M1178.3 266.1h1.4M1178.3 321.3h1.4M1178.3 376.6h1.4M1178.3 431.8h1.4M1178.3 487.1h1.4M1233.5 100.3h1.4M1233.5 155.6h1.4M1233.5 210.8h1.4M1233.5 266.1h1.4M1233.5 321.3h1.4M1233.5 376.6h1.4M1233.5 431.8h1.4M1233.5 487.1h1.4M1288.8 100.3h1.4M1288.8 155.6h1.4M1288.8 210.8h1.4M1288.8 266.1h1.4M1288.8 321.3h1.4M1288.8 376.6h1.4M1288.8 431.8h1.4M1288.8 487.1h1.4M1344.0 100.3h1.4M1344.0 155.6h1.4M1344.0 210.8h1.4M1344.0 266.1h1.4M1344.0 321.3h1.4M1344.0 376.6h1.4M1344.0 431.8h1.4M1344.0 487.1h1.4M1399.3 100.3h1.4M1399.3 155.6h1.4M1399.3 210.8h1.4M1399.3 266.1h1.4M1399.3 321.3h1.4M1399.3 376.6h1.4M1399.3 431.8h1.4M1399.3 487.1h1.4M1454.5 100.3h1.4M1454.5 155.6h1.4M1454.5 210.8h1.4M1454.5 266.1h1.4M1454.5 321.3h1.4M1454.5 376.6h1.4M1454.5 431.8h1.4M1454.5 487.1h1.4M1509.8 100.3h1.4M1509.8 155.6h1.4M1509.8 210.8h1.4M1509.8 266.1h1.4M1509.8 321.3h1.4M1509.8 376.6h1.4M1509.8 431.8h1.4M1509.8 487.1h1.4M1565.0 100.3h1.4M1565.0 155.6h1.4M1565.0 210.8h1.4M1565.0 266.1h1.4M1565.0 321.3h1.4M1565.0 376.6h1.4M1565.0 431.8h1.4M1565.0 487.1h1.4M1620.3 100.3h1.4M1620.3 155.6h1.4M1620.3 210.8h1.4M1620.3 266.1h1.4M1620.3 321.3h1.4M1620.3 376.6h1.4M1620.3 431.8h1.4M1620.3 487.1h1.4M1675.5 100.3h1.4M1675.5 155.6h1.4M1675.5 210.8h1.4M1675.5 266.1h1.4M1675.5 321.3h1.4M1675.5 376.6h1.4M1675.5 431.8h1.4M1675.5 487.1h1.4M1730.8 100.3h1.4M1730.8 155.6h1.4M1730.8 210.8h1.4M1730.8 266.1h1.4M1730.8 321.3h1.4M1730.8 376.6h1.4M1730.8 431.8h1.4M1730.8 487.1h1.4M1786.0 100.3h1.4M1786.0 155.6h1.4M1786.0 210.8h1.4M1786.0 266.1h1.4M1786.0 321.3h1.4M1786.0 376.6h1.4M1786.0 431.8h1.4M1786.0 487.1h1.4M1841.3 100.3h1.4M1841.3 155.6h1.4M1841.3 210.8h1.4M1841.3 266.1h1.4M1841.3 321.3h1.4M1841.3 376.6h1.4M1841.3 431.8h1.4M1841.3 487.1h1.4M1896.5 100.3h1.4M1896.5 155.6h1.4M1896.5 210.8h1.4M1896.5 266.1h1.4M1896.5 321.3h1.4M1896.5 376.6h1.4M1896.5 431.8h1.4M1896.5 487.1h1.4" stroke="#3c4a5c" stroke-width="1.4"/>
<line x1="1143.30" y1="78.50" x2="1143.30" y2="121.50" stroke="#8a8f96" stroke-width="1" stroke-linecap="butt"/>
<line x1="1117.60" y1="96.30" x2="1168.00" y2="96.30" stroke="#8a8f96" stroke-width="1" stroke-linecap="butt"/>
<rect x="1186.00" y="123.40" width="624.40" height="343.20" fill="#335383" stroke="none" stroke-width="1" rx="0"/>
<rect x="1186.00" y="123.40" width="624.40" height="343.20" fill="none" stroke="#4d7fc4" stroke-width="1.6" rx="0"/>
<path d="M1188.0 127.0l3.6 -3.6M1196.0 127.0l3.6 -3.6M1204.0 127.0l3.6 -3.6M1212.0 127.0l3.6 -3.6M1220.0 127.0l3.6 -3.6M1228.0 127.0l3.6 -3.6M1236.0 127.0l3.6 -3.6M1244.0 127.0l3.6 -3.6M1252.0 127.0l3.6 -3.6M1260.0 127.0l3.6 -3.6M1268.0 127.0l3.6 -3.6M1276.0 127.0l3.6 -3.6M1284.0 127.0l3.6 -3.6M1292.0 127.0l3.6 -3.6M1300.0 127.0l3.6 -3.6M1308.0 127.0l3.6 -3.6M1316.0 127.0l3.6 -3.6M1324.0 127.0l3.6 -3.6M1332.0 127.0l3.6 -3.6M1340.0 127.0l3.6 -3.6M1348.0 127.0l3.6 -3.6M1356.0 127.0l3.6 -3.6M1364.0 127.0l3.6 -3.6M1372.0 127.0l3.6 -3.6M1380.0 127.0l3.6 -3.6M1388.0 127.0l3.6 -3.6M1396.0 127.0l3.6 -3.6M1404.0 127.0l3.6 -3.6M1412.0 127.0l3.6 -3.6M1420.0 127.0l3.6 -3.6M1428.0 127.0l3.6 -3.6M1436.0 127.0l3.6 -3.6M1444.0 127.0l3.6 -3.6M1452.0 127.0l3.6 -3.6M1460.0 127.0l3.6 -3.6M1468.0 127.0l3.6 -3.6M1476.0 127.0l3.6 -3.6M1484.0 127.0l3.6 -3.6M1492.0 127.0l3.6 -3.6M1500.0 127.0l3.6 -3.6M1508.0 127.0l3.6 -3.6M1516.0 127.0l3.6 -3.6M1524.0 127.0l3.6 -3.6M1532.0 127.0l3.6 -3.6M1540.0 127.0l3.6 -3.6M1548.0 127.0l3.6 -3.6M1556.0 127.0l3.6 -3.6M1564.0 127.0l3.6 -3.6M1572.0 127.0l3.6 -3.6M1580.0 127.0l3.6 -3.6M1588.0 127.0l3.6 -3.6M1596.0 127.0l3.6 -3.6M1604.0 127.0l3.6 -3.6M1612.0 127.0l3.6 -3.6M1620.0 127.0l3.6 -3.6M1628.0 127.0l3.6 -3.6M1636.0 127.0l3.6 -3.6M1644.0 127.0l3.6 -3.6M1652.0 127.0l3.6 -3.6M1660.0 127.0l3.6 -3.6M1668.0 127.0l3.6 -3.6M1676.0 127.0l3.6 -3.6M1684.0 127.0l3.6 -3.6M1692.0 127.0l3.6 -3.6M1700.0 127.0l3.6 -3.6M1708.0 127.0l3.6 -3.6M1716.0 127.0l3.6 -3.6M1724.0 127.0l3.6 -3.6M1732.0 127.0l3.6 -3.6M1740.0 127.0l3.6 -3.6M1748.0 127.0l3.6 -3.6M1756.0 127.0l3.6 -3.6M1764.0 127.0l3.6 -3.6M1772.0 127.0l3.6 -3.6M1780.0 127.0l3.6 -3.6M1788.0 127.0l3.6 -3.6M1796.0 127.0l3.6 -3.6M1804.0 127.0l3.6 -3.6" stroke="#4d7fc4" stroke-width="1.0" opacity="0.6" fill="none"/>
<path d="M1188.0 466.6l3.6 -3.6M1196.0 466.6l3.6 -3.6M1204.0 466.6l3.6 -3.6M1212.0 466.6l3.6 -3.6M1220.0 466.6l3.6 -3.6M1228.0 466.6l3.6 -3.6M1236.0 466.6l3.6 -3.6M1244.0 466.6l3.6 -3.6M1252.0 466.6l3.6 -3.6M1260.0 466.6l3.6 -3.6M1268.0 466.6l3.6 -3.6M1276.0 466.6l3.6 -3.6M1284.0 466.6l3.6 -3.6M1292.0 466.6l3.6 -3.6M1300.0 466.6l3.6 -3.6M1308.0 466.6l3.6 -3.6M1316.0 466.6l3.6 -3.6M1324.0 466.6l3.6 -3.6M1332.0 466.6l3.6 -3.6M1340.0 466.6l3.6 -3.6M1348.0 466.6l3.6 -3.6M1356.0 466.6l3.6 -3.6M1364.0 466.6l3.6 -3.6M1372.0 466.6l3.6 -3.6M1380.0 466.6l3.6 -3.6M1388.0 466.6l3.6 -3.6M1396.0 466.6l3.6 -3.6M1404.0 466.6l3.6 -3.6M1412.0 466.6l3.6 -3.6M1420.0 466.6l3.6 -3.6M1428.0 466.6l3.6 -3.6M1436.0 466.6l3.6 -3.6M1444.0 466.6l3.6 -3.6M1452.0 466.6l3.6 -3.6M1460.0 466.6l3.6 -3.6M1468.0 466.6l3.6 -3.6M1476.0 466.6l3.6 -3.6M1484.0 466.6l3.6 -3.6M1492.0 466.6l3.6 -3.6M1500.0 466.6l3.6 -3.6M1508.0 466.6l3.6 -3.6M1516.0 466.6l3.6 -3.6M1524.0 466.6l3.6 -3.6M1532.0 466.6l3.6 -3.6M1540.0 466.6l3.6 -3.6M1548.0 466.6l3.6 -3.6M1556.0 466.6l3.6 -3.6M1564.0 466.6l3.6 -3.6M1572.0 466.6l3.6 -3.6M1580.0 466.6l3.6 -3.6M1588.0 466.6l3.6 -3.6M1596.0 466.6l3.6 -3.6M1604.0 466.6l3.6 -3.6M1612.0 466.6l3.6 -3.6M1620.0 466.6l3.6 -3.6M1628.0 466.6l3.6 -3.6M1636.0 466.6l3.6 -3.6M1644.0 466.6l3.6 -3.6M1652.0 466.6l3.6 -3.6M1660.0 466.6l3.6 -3.6M1668.0 466.6l3.6 -3.6M1676.0 466.6l3.6 -3.6M1684.0 466.6l3.6 -3.6M1692.0 466.6l3.6 -3.6M1700.0 466.6l3.6 -3.6M1708.0 466.6l3.6 -3.6M1716.0 466.6l3.6 -3.6M1724.0 466.6l3.6 -3.6M1732.0 466.6l3.6 -3.6M1740.0 466.6l3.6 -3.6M1748.0 466.6l3.6 -3.6M1756.0 466.6l3.6 -3.6M1764.0 466.6l3.6 -3.6M1772.0 466.6l3.6 -3.6M1780.0 466.6l3.6 -3.6M1788.0 466.6l3.6 -3.6M1796.0 466.6l3.6 -3.6M1804.0 466.6l3.6 -3.6" stroke="#4d7fc4" stroke-width="1.0" opacity="0.6" fill="none"/>
<path d="M1186.0 129.0l3.6 -3.6M1186.0 137.0l3.6 -3.6M1186.0 145.0l3.6 -3.6M1186.0 153.0l3.6 -3.6M1186.0 161.0l3.6 -3.6M1186.0 169.0l3.6 -3.6M1186.0 177.0l3.6 -3.6M1186.0 185.0l3.6 -3.6M1186.0 193.0l3.6 -3.6M1186.0 201.0l3.6 -3.6M1186.0 209.0l3.6 -3.6M1186.0 217.0l3.6 -3.6M1186.0 225.0l3.6 -3.6M1186.0 233.0l3.6 -3.6M1186.0 241.0l3.6 -3.6M1186.0 249.0l3.6 -3.6M1186.0 257.0l3.6 -3.6M1186.0 265.0l3.6 -3.6M1186.0 273.0l3.6 -3.6M1186.0 281.0l3.6 -3.6M1186.0 289.0l3.6 -3.6M1186.0 297.0l3.6 -3.6M1186.0 305.0l3.6 -3.6M1186.0 313.0l3.6 -3.6M1186.0 321.0l3.6 -3.6M1186.0 329.0l3.6 -3.6M1186.0 337.0l3.6 -3.6M1186.0 345.0l3.6 -3.6M1186.0 353.0l3.6 -3.6M1186.0 361.0l3.6 -3.6M1186.0 369.0l3.6 -3.6M1186.0 377.0l3.6 -3.6M1186.0 385.0l3.6 -3.6M1186.0 393.0l3.6 -3.6M1186.0 401.0l3.6 -3.6M1186.0 409.0l3.6 -3.6M1186.0 417.0l3.6 -3.6M1186.0 425.0l3.6 -3.6M1186.0 433.0l3.6 -3.6M1186.0 441.0l3.6 -3.6M1186.0 449.0l3.6 -3.6M1186.0 457.0l3.6 -3.6M1186.0 465.0l3.6 -3.6" stroke="#4d7fc4" stroke-width="1.0" opacity="0.6" fill="none"/>
<path d="M1806.8 129.0l3.6 -3.6M1806.8 137.0l3.6 -3.6M1806.8 145.0l3.6 -3.6M1806.8 153.0l3.6 -3.6M1806.8 161.0l3.6 -3.6M1806.8 169.0l3.6 -3.6M1806.8 177.0l3.6 -3.6M1806.8 185.0l3.6 -3.6M1806.8 193.0l3.6 -3.6M1806.8 201.0l3.6 -3.6M1806.8 209.0l3.6 -3.6M1806.8 217.0l3.6 -3.6M1806.8 225.0l3.6 -3.6M1806.8 233.0l3.6 -3.6M1806.8 241.0l3.6 -3.6M1806.8 249.0l3.6 -3.6M1806.8 257.0l3.6 -3.6M1806.8 265.0l3.6 -3.6M1806.8 273.0l3.6 -3.6M1806.8 281.0l3.6 -3.6M1806.8 289.0l3.6 -3.6M1806.8 297.0l3.6 -3.6M1806.8 305.0l3.6 -3.6M1806.8 313.0l3.6 -3.6M1806.8 321.0l3.6 -3.6M1806.8 329.0l3.6 -3.6M1806.8 337.0l3.6 -3.6M1806.8 345.0l3.6 -3.6M1806.8 353.0l3.6 -3.6M1806.8 361.0l3.6 -3.6M1806.8 369.0l3.6 -3.6M1806.8 377.0l3.6 -3.6M1806.8 385.0l3.6 -3.6M1806.8 393.0l3.6 -3.6M1806.8 401.0l3.6 -3.6M1806.8 409.0l3.6 -3.6M1806.8 417.0l3.6 -3.6M1806.8 425.0l3.6 -3.6M1806.8 433.0l3.6 -3.6M1806.8 441.0l3.6 -3.6M1806.8 449.0l3.6 -3.6M1806.8 457.0l3.6 -3.6M1806.8 465.0l3.6 -3.6" stroke="#4d7fc4" stroke-width="1.0" opacity="0.6" fill="none"/>
<path d="M1233.5 155.6h1.4M1233.5 210.8h1.4M1233.5 266.1h1.4M1233.5 321.3h1.4M1233.5 376.6h1.4M1233.5 431.8h1.4M1288.8 155.6h1.4M1288.8 210.8h1.4M1288.8 266.1h1.4M1288.8 321.3h1.4M1288.8 376.6h1.4M1288.8 431.8h1.4M1344.0 155.6h1.4M1344.0 210.8h1.4M1344.0 266.1h1.4M1344.0 321.3h1.4M1344.0 376.6h1.4M1344.0 431.8h1.4M1399.3 155.6h1.4M1399.3 210.8h1.4M1399.3 266.1h1.4M1399.3 321.3h1.4M1399.3 376.6h1.4M1399.3 431.8h1.4M1454.5 155.6h1.4M1454.5 210.8h1.4M1454.5 266.1h1.4M1454.5 321.3h1.4M1454.5 376.6h1.4M1454.5 431.8h1.4M1509.8 155.6h1.4M1509.8 210.8h1.4M1509.8 266.1h1.4M1509.8 321.3h1.4M1509.8 376.6h1.4M1509.8 431.8h1.4M1565.0 155.6h1.4M1565.0 210.8h1.4M1565.0 266.1h1.4M1565.0 321.3h1.4M1565.0 376.6h1.4M1565.0 431.8h1.4M1620.3 155.6h1.4M1620.3 210.8h1.4M1620.3 266.1h1.4M1620.3 321.3h1.4M1620.3 376.6h1.4M1620.3 431.8h1.4M1675.5 155.6h1.4M1675.5 210.8h1.4M1675.5 266.1h1.4M1675.5 321.3h1.4M1675.5 376.6h1.4M1675.5 431.8h1.4M1730.8 155.6h1.4M1730.8 210.8h1.4M1730.8 266.1h1.4M1730.8 321.3h1.4M1730.8 376.6h1.4M1730.8 431.8h1.4M1786.0 155.6h1.4M1786.0 210.8h1.4M1786.0 266.1h1.4M1786.0 321.3h1.4M1786.0 376.6h1.4M1786.0 431.8h1.4" stroke="#50709c" stroke-width="1.4"/>
<clipPath id="cf1240_230"><rect x="1240.0" y="230.3" width="218.0" height="17.3"/></clipPath>
<g clip-path="url(#cf1240_230)">
<rect x="1240.00" y="230.30" width="218.00" height="12.90" fill="#a23c4e" stroke="none" stroke-width="1" rx="0"/>
<path d="M1222.7 247.6l17.3 -17.3M1229.2 247.6l17.3 -17.3M1235.7 247.6l17.3 -17.3M1242.2 247.6l17.3 -17.3M1248.7 247.6l17.3 -17.3M1255.2 247.6l17.3 -17.3M1261.7 247.6l17.3 -17.3M1268.2 247.6l17.3 -17.3M1274.7 247.6l17.3 -17.3M1281.2 247.6l17.3 -17.3M1287.7 247.6l17.3 -17.3M1294.2 247.6l17.3 -17.3M1300.7 247.6l17.3 -17.3M1307.2 247.6l17.3 -17.3M1313.7 247.6l17.3 -17.3M1320.2 247.6l17.3 -17.3M1326.7 247.6l17.3 -17.3M1333.2 247.6l17.3 -17.3M1339.7 247.6l17.3 -17.3M1346.2 247.6l17.3 -17.3M1352.7 247.6l17.3 -17.3M1359.2 247.6l17.3 -17.3M1365.7 247.6l17.3 -17.3M1372.2 247.6l17.3 -17.3M1378.7 247.6l17.3 -17.3M1385.2 247.6l17.3 -17.3M1391.7 247.6l17.3 -17.3M1398.2 247.6l17.3 -17.3M1404.7 247.6l17.3 -17.3M1411.2 247.6l17.3 -17.3M1417.7 247.6l17.3 -17.3M1424.2 247.6l17.3 -17.3M1430.7 247.6l17.3 -17.3M1437.2 247.6l17.3 -17.3M1443.7 247.6l17.3 -17.3M1450.2 247.6l17.3 -17.3M1456.7 247.6l17.3 -17.3M1463.2 247.6l17.3 -17.3M1469.7 247.6l17.3 -17.3" stroke="#c03c40" stroke-width="1.5" fill="none" opacity="0.7"/>
<rect x="1240.50" y="230.80" width="217.00" height="16.30" fill="none" stroke="#b03844" stroke-width="1.0" rx="0"/>
</g>
<circle cx="1245.20" cy="239.10" r="3.1" fill="#cc3c34" stroke="none" stroke-width="1"/>
<circle cx="1245.20" cy="239.10" r="1.9" fill="#ecc63a" stroke="none" stroke-width="1"/>
<circle cx="1253.57" cy="239.10" r="3.1" fill="#cc3c34" stroke="none" stroke-width="1"/>
<circle cx="1253.57" cy="239.10" r="1.9" fill="#ecc63a" stroke="none" stroke-width="1"/>
<circle cx="1261.94" cy="239.10" r="3.1" fill="#cc3c34" stroke="none" stroke-width="1"/>
<circle cx="1261.94" cy="239.10" r="1.9" fill="#ecc63a" stroke="none" stroke-width="1"/>
<circle cx="1270.31" cy="239.10" r="3.1" fill="#cc3c34" stroke="none" stroke-width="1"/>
<circle cx="1270.31" cy="239.10" r="1.9" fill="#ecc63a" stroke="none" stroke-width="1"/>
<circle cx="1278.68" cy="239.10" r="3.1" fill="#cc3c34" stroke="none" stroke-width="1"/>
<circle cx="1278.68" cy="239.10" r="1.9" fill="#ecc63a" stroke="none" stroke-width="1"/>
<circle cx="1287.05" cy="239.10" r="3.1" fill="#cc3c34" stroke="none" stroke-width="1"/>
<circle cx="1287.05" cy="239.10" r="1.9" fill="#ecc63a" stroke="none" stroke-width="1"/>
<circle cx="1295.42" cy="239.10" r="3.1" fill="#cc3c34" stroke="none" stroke-width="1"/>
<circle cx="1295.42" cy="239.10" r="1.9" fill="#ecc63a" stroke="none" stroke-width="1"/>
<circle cx="1303.79" cy="239.10" r="3.1" fill="#cc3c34" stroke="none" stroke-width="1"/>
<circle cx="1303.79" cy="239.10" r="1.9" fill="#ecc63a" stroke="none" stroke-width="1"/>
<circle cx="1312.16" cy="239.10" r="3.1" fill="#cc3c34" stroke="none" stroke-width="1"/>
<circle cx="1312.16" cy="239.10" r="1.9" fill="#ecc63a" stroke="none" stroke-width="1"/>
<circle cx="1320.53" cy="239.10" r="3.1" fill="#cc3c34" stroke="none" stroke-width="1"/>
<circle cx="1320.53" cy="239.10" r="1.9" fill="#ecc63a" stroke="none" stroke-width="1"/>
<circle cx="1328.90" cy="239.10" r="3.1" fill="#cc3c34" stroke="none" stroke-width="1"/>
<circle cx="1328.90" cy="239.10" r="1.9" fill="#ecc63a" stroke="none" stroke-width="1"/>
<circle cx="1337.27" cy="239.10" r="3.1" fill="#cc3c34" stroke="none" stroke-width="1"/>
<circle cx="1337.27" cy="239.10" r="1.9" fill="#ecc63a" stroke="none" stroke-width="1"/>
<circle cx="1345.64" cy="239.10" r="3.1" fill="#cc3c34" stroke="none" stroke-width="1"/>
<circle cx="1345.64" cy="239.10" r="1.9" fill="#ecc63a" stroke="none" stroke-width="1"/>
<circle cx="1354.01" cy="239.10" r="3.1" fill="#cc3c34" stroke="none" stroke-width="1"/>
<circle cx="1354.01" cy="239.10" r="1.9" fill="#ecc63a" stroke="none" stroke-width="1"/>
<circle cx="1362.38" cy="239.10" r="3.1" fill="#cc3c34" stroke="none" stroke-width="1"/>
<circle cx="1362.38" cy="239.10" r="1.9" fill="#ecc63a" stroke="none" stroke-width="1"/>
<circle cx="1370.75" cy="239.10" r="3.1" fill="#cc3c34" stroke="none" stroke-width="1"/>
<circle cx="1370.75" cy="239.10" r="1.9" fill="#ecc63a" stroke="none" stroke-width="1"/>
<circle cx="1379.12" cy="239.10" r="3.1" fill="#cc3c34" stroke="none" stroke-width="1"/>
<circle cx="1379.12" cy="239.10" r="1.9" fill="#ecc63a" stroke="none" stroke-width="1"/>
<circle cx="1387.49" cy="239.10" r="3.1" fill="#cc3c34" stroke="none" stroke-width="1"/>
<circle cx="1387.49" cy="239.10" r="1.9" fill="#ecc63a" stroke="none" stroke-width="1"/>
<circle cx="1395.86" cy="239.10" r="3.1" fill="#cc3c34" stroke="none" stroke-width="1"/>
<circle cx="1395.86" cy="239.10" r="1.9" fill="#ecc63a" stroke="none" stroke-width="1"/>
<circle cx="1404.23" cy="239.10" r="3.1" fill="#cc3c34" stroke="none" stroke-width="1"/>
<circle cx="1404.23" cy="239.10" r="1.9" fill="#ecc63a" stroke="none" stroke-width="1"/>
<circle cx="1412.60" cy="239.10" r="3.1" fill="#cc3c34" stroke="none" stroke-width="1"/>
<circle cx="1412.60" cy="239.10" r="1.9" fill="#ecc63a" stroke="none" stroke-width="1"/>
<circle cx="1420.97" cy="239.10" r="3.1" fill="#cc3c34" stroke="none" stroke-width="1"/>
<circle cx="1420.97" cy="239.10" r="1.9" fill="#ecc63a" stroke="none" stroke-width="1"/>
<circle cx="1429.34" cy="239.10" r="3.1" fill="#cc3c34" stroke="none" stroke-width="1"/>
<circle cx="1429.34" cy="239.10" r="1.9" fill="#ecc63a" stroke="none" stroke-width="1"/>
<circle cx="1437.71" cy="239.10" r="3.1" fill="#cc3c34" stroke="none" stroke-width="1"/>
<circle cx="1437.71" cy="239.10" r="1.9" fill="#ecc63a" stroke="none" stroke-width="1"/>
<circle cx="1446.08" cy="239.10" r="3.1" fill="#cc3c34" stroke="none" stroke-width="1"/>
<circle cx="1446.08" cy="239.10" r="1.9" fill="#ecc63a" stroke="none" stroke-width="1"/>
<clipPath id="cf1240_261"><rect x="1240.0" y="261.8" width="218.0" height="17.7"/></clipPath>
<g clip-path="url(#cf1240_261)">
<rect x="1240.00" y="266.20" width="218.00" height="13.30" fill="#a23c4e" stroke="none" stroke-width="1" rx="0"/>
<path d="M1222.3 279.5l17.7 -17.7M1228.8 279.5l17.7 -17.7M1235.3 279.5l17.7 -17.7M1241.8 279.5l17.7 -17.7M1248.3 279.5l17.7 -17.7M1254.8 279.5l17.7 -17.7M1261.3 279.5l17.7 -17.7M1267.8 279.5l17.7 -17.7M1274.3 279.5l17.7 -17.7M1280.8 279.5l17.7 -17.7M1287.3 279.5l17.7 -17.7M1293.8 279.5l17.7 -17.7M1300.3 279.5l17.7 -17.7M1306.8 279.5l17.7 -17.7M1313.3 279.5l17.7 -17.7M1319.8 279.5l17.7 -17.7M1326.3 279.5l17.7 -17.7M1332.8 279.5l17.7 -17.7M1339.3 279.5l17.7 -17.7M1345.8 279.5l17.7 -17.7M1352.3 279.5l17.7 -17.7M1358.8 279.5l17.7 -17.7M1365.3 279.5l17.7 -17.7M1371.8 279.5l17.7 -17.7M1378.3 279.5l17.7 -17.7M1384.8 279.5l17.7 -17.7M1391.3 279.5l17.7 -17.7M1397.8 279.5l17.7 -17.7M1404.3 279.5l17.7 -17.7M1410.8 279.5l17.7 -17.7M1417.3 279.5l17.7 -17.7M1423.8 279.5l17.7 -17.7M1430.3 279.5l17.7 -17.7M1436.8 279.5l17.7 -17.7M1443.3 279.5l17.7 -17.7M1449.8 279.5l17.7 -17.7M1456.3 279.5l17.7 -17.7M1462.8 279.5l17.7 -17.7M1469.3 279.5l17.7 -17.7" stroke="#c03c40" stroke-width="1.5" fill="none" opacity="0.7"/>
<rect x="1240.50" y="262.30" width="217.00" height="16.70" fill="none" stroke="#b03844" stroke-width="1.0" rx="0"/>
</g>
<circle cx="1245.20" cy="270.90" r="3.1" fill="#cc3c34" stroke="none" stroke-width="1"/>
<circle cx="1245.20" cy="270.90" r="1.9" fill="#ecc63a" stroke="none" stroke-width="1"/>
<circle cx="1253.57" cy="270.90" r="3.1" fill="#cc3c34" stroke="none" stroke-width="1"/>
<circle cx="1253.57" cy="270.90" r="1.9" fill="#ecc63a" stroke="none" stroke-width="1"/>
<circle cx="1261.94" cy="270.90" r="3.1" fill="#cc3c34" stroke="none" stroke-width="1"/>
<circle cx="1261.94" cy="270.90" r="1.9" fill="#ecc63a" stroke="none" stroke-width="1"/>
<circle cx="1270.31" cy="270.90" r="3.1" fill="#cc3c34" stroke="none" stroke-width="1"/>
<circle cx="1270.31" cy="270.90" r="1.9" fill="#ecc63a" stroke="none" stroke-width="1"/>
<circle cx="1278.68" cy="270.90" r="3.1" fill="#cc3c34" stroke="none" stroke-width="1"/>
<circle cx="1278.68" cy="270.90" r="1.9" fill="#ecc63a" stroke="none" stroke-width="1"/>
<circle cx="1287.05" cy="270.90" r="3.1" fill="#cc3c34" stroke="none" stroke-width="1"/>
<circle cx="1287.05" cy="270.90" r="1.9" fill="#ecc63a" stroke="none" stroke-width="1"/>
<circle cx="1295.42" cy="270.90" r="3.1" fill="#cc3c34" stroke="none" stroke-width="1"/>
<circle cx="1295.42" cy="270.90" r="1.9" fill="#ecc63a" stroke="none" stroke-width="1"/>
<circle cx="1303.79" cy="270.90" r="3.1" fill="#cc3c34" stroke="none" stroke-width="1"/>
<circle cx="1303.79" cy="270.90" r="1.9" fill="#ecc63a" stroke="none" stroke-width="1"/>
<circle cx="1312.16" cy="270.90" r="3.1" fill="#cc3c34" stroke="none" stroke-width="1"/>
<circle cx="1312.16" cy="270.90" r="1.9" fill="#ecc63a" stroke="none" stroke-width="1"/>
<circle cx="1320.53" cy="270.90" r="3.1" fill="#cc3c34" stroke="none" stroke-width="1"/>
<circle cx="1320.53" cy="270.90" r="1.9" fill="#ecc63a" stroke="none" stroke-width="1"/>
<circle cx="1328.90" cy="270.90" r="3.1" fill="#cc3c34" stroke="none" stroke-width="1"/>
<circle cx="1328.90" cy="270.90" r="1.9" fill="#ecc63a" stroke="none" stroke-width="1"/>
<circle cx="1337.27" cy="270.90" r="3.1" fill="#cc3c34" stroke="none" stroke-width="1"/>
<circle cx="1337.27" cy="270.90" r="1.9" fill="#ecc63a" stroke="none" stroke-width="1"/>
<circle cx="1345.64" cy="270.90" r="3.1" fill="#cc3c34" stroke="none" stroke-width="1"/>
<circle cx="1345.64" cy="270.90" r="1.9" fill="#ecc63a" stroke="none" stroke-width="1"/>
<circle cx="1354.01" cy="270.90" r="3.1" fill="#cc3c34" stroke="none" stroke-width="1"/>
<circle cx="1354.01" cy="270.90" r="1.9" fill="#ecc63a" stroke="none" stroke-width="1"/>
<circle cx="1362.38" cy="270.90" r="3.1" fill="#cc3c34" stroke="none" stroke-width="1"/>
<circle cx="1362.38" cy="270.90" r="1.9" fill="#ecc63a" stroke="none" stroke-width="1"/>
<circle cx="1370.75" cy="270.90" r="3.1" fill="#cc3c34" stroke="none" stroke-width="1"/>
<circle cx="1370.75" cy="270.90" r="1.9" fill="#ecc63a" stroke="none" stroke-width="1"/>
<circle cx="1379.12" cy="270.90" r="3.1" fill="#cc3c34" stroke="none" stroke-width="1"/>
<circle cx="1379.12" cy="270.90" r="1.9" fill="#ecc63a" stroke="none" stroke-width="1"/>
<circle cx="1387.49" cy="270.90" r="3.1" fill="#cc3c34" stroke="none" stroke-width="1"/>
<circle cx="1387.49" cy="270.90" r="1.9" fill="#ecc63a" stroke="none" stroke-width="1"/>
<circle cx="1395.86" cy="270.90" r="3.1" fill="#cc3c34" stroke="none" stroke-width="1"/>
<circle cx="1395.86" cy="270.90" r="1.9" fill="#ecc63a" stroke="none" stroke-width="1"/>
<circle cx="1404.23" cy="270.90" r="3.1" fill="#cc3c34" stroke="none" stroke-width="1"/>
<circle cx="1404.23" cy="270.90" r="1.9" fill="#ecc63a" stroke="none" stroke-width="1"/>
<circle cx="1412.60" cy="270.90" r="3.1" fill="#cc3c34" stroke="none" stroke-width="1"/>
<circle cx="1412.60" cy="270.90" r="1.9" fill="#ecc63a" stroke="none" stroke-width="1"/>
<circle cx="1420.97" cy="270.90" r="3.1" fill="#cc3c34" stroke="none" stroke-width="1"/>
<circle cx="1420.97" cy="270.90" r="1.9" fill="#ecc63a" stroke="none" stroke-width="1"/>
<circle cx="1429.34" cy="270.90" r="3.1" fill="#cc3c34" stroke="none" stroke-width="1"/>
<circle cx="1429.34" cy="270.90" r="1.9" fill="#ecc63a" stroke="none" stroke-width="1"/>
<circle cx="1437.71" cy="270.90" r="3.1" fill="#cc3c34" stroke="none" stroke-width="1"/>
<circle cx="1437.71" cy="270.90" r="1.9" fill="#ecc63a" stroke="none" stroke-width="1"/>
<circle cx="1446.08" cy="270.90" r="3.1" fill="#cc3c34" stroke="none" stroke-width="1"/>
<circle cx="1446.08" cy="270.90" r="1.9" fill="#ecc63a" stroke="none" stroke-width="1"/>
<clipPath id="cf1549_230"><rect x="1549.8" y="230.3" width="202.1" height="17.3"/></clipPath>
<g clip-path="url(#cf1549_230)">
<rect x="1549.80" y="230.30" width="202.10" height="12.90" fill="#a23c4e" stroke="none" stroke-width="1" rx="0"/>
<path d="M1532.5 247.6l17.3 -17.3M1539.0 247.6l17.3 -17.3M1545.5 247.6l17.3 -17.3M1552.0 247.6l17.3 -17.3M1558.5 247.6l17.3 -17.3M1565.0 247.6l17.3 -17.3M1571.5 247.6l17.3 -17.3M1578.0 247.6l17.3 -17.3M1584.5 247.6l17.3 -17.3M1591.0 247.6l17.3 -17.3M1597.5 247.6l17.3 -17.3M1604.0 247.6l17.3 -17.3M1610.5 247.6l17.3 -17.3M1617.0 247.6l17.3 -17.3M1623.5 247.6l17.3 -17.3M1630.0 247.6l17.3 -17.3M1636.5 247.6l17.3 -17.3M1643.0 247.6l17.3 -17.3M1649.5 247.6l17.3 -17.3M1656.0 247.6l17.3 -17.3M1662.5 247.6l17.3 -17.3M1669.0 247.6l17.3 -17.3M1675.5 247.6l17.3 -17.3M1682.0 247.6l17.3 -17.3M1688.5 247.6l17.3 -17.3M1695.0 247.6l17.3 -17.3M1701.5 247.6l17.3 -17.3M1708.0 247.6l17.3 -17.3M1714.5 247.6l17.3 -17.3M1721.0 247.6l17.3 -17.3M1727.5 247.6l17.3 -17.3M1734.0 247.6l17.3 -17.3M1740.5 247.6l17.3 -17.3M1747.0 247.6l17.3 -17.3M1753.5 247.6l17.3 -17.3M1760.0 247.6l17.3 -17.3M1766.5 247.6l17.3 -17.3" stroke="#c03c40" stroke-width="1.5" fill="none" opacity="0.7"/>
<rect x="1550.30" y="230.80" width="201.10" height="16.30" fill="none" stroke="#b03844" stroke-width="1.0" rx="0"/>
</g>
<circle cx="1556.10" cy="239.10" r="3.1" fill="#cc3c34" stroke="none" stroke-width="1"/>
<circle cx="1556.10" cy="239.10" r="1.9" fill="#ecc63a" stroke="none" stroke-width="1"/>
<circle cx="1564.47" cy="239.10" r="3.1" fill="#cc3c34" stroke="none" stroke-width="1"/>
<circle cx="1564.47" cy="239.10" r="1.9" fill="#ecc63a" stroke="none" stroke-width="1"/>
<circle cx="1572.84" cy="239.10" r="3.1" fill="#cc3c34" stroke="none" stroke-width="1"/>
<circle cx="1572.84" cy="239.10" r="1.9" fill="#ecc63a" stroke="none" stroke-width="1"/>
<circle cx="1581.21" cy="239.10" r="3.1" fill="#cc3c34" stroke="none" stroke-width="1"/>
<circle cx="1581.21" cy="239.10" r="1.9" fill="#ecc63a" stroke="none" stroke-width="1"/>
<circle cx="1589.58" cy="239.10" r="3.1" fill="#cc3c34" stroke="none" stroke-width="1"/>
<circle cx="1589.58" cy="239.10" r="1.9" fill="#ecc63a" stroke="none" stroke-width="1"/>
<circle cx="1597.95" cy="239.10" r="3.1" fill="#cc3c34" stroke="none" stroke-width="1"/>
<circle cx="1597.95" cy="239.10" r="1.9" fill="#ecc63a" stroke="none" stroke-width="1"/>
<circle cx="1606.32" cy="239.10" r="3.1" fill="#cc3c34" stroke="none" stroke-width="1"/>
<circle cx="1606.32" cy="239.10" r="1.9" fill="#ecc63a" stroke="none" stroke-width="1"/>
<circle cx="1614.69" cy="239.10" r="3.1" fill="#cc3c34" stroke="none" stroke-width="1"/>
<circle cx="1614.69" cy="239.10" r="1.9" fill="#ecc63a" stroke="none" stroke-width="1"/>
<circle cx="1623.06" cy="239.10" r="3.1" fill="#cc3c34" stroke="none" stroke-width="1"/>
<circle cx="1623.06" cy="239.10" r="1.9" fill="#ecc63a" stroke="none" stroke-width="1"/>
<circle cx="1631.43" cy="239.10" r="3.1" fill="#cc3c34" stroke="none" stroke-width="1"/>
<circle cx="1631.43" cy="239.10" r="1.9" fill="#ecc63a" stroke="none" stroke-width="1"/>
<circle cx="1639.80" cy="239.10" r="3.1" fill="#cc3c34" stroke="none" stroke-width="1"/>
<circle cx="1639.80" cy="239.10" r="1.9" fill="#ecc63a" stroke="none" stroke-width="1"/>
<circle cx="1648.17" cy="239.10" r="3.1" fill="#cc3c34" stroke="none" stroke-width="1"/>
<circle cx="1648.17" cy="239.10" r="1.9" fill="#ecc63a" stroke="none" stroke-width="1"/>
<circle cx="1656.54" cy="239.10" r="3.1" fill="#cc3c34" stroke="none" stroke-width="1"/>
<circle cx="1656.54" cy="239.10" r="1.9" fill="#ecc63a" stroke="none" stroke-width="1"/>
<circle cx="1664.91" cy="239.10" r="3.1" fill="#cc3c34" stroke="none" stroke-width="1"/>
<circle cx="1664.91" cy="239.10" r="1.9" fill="#ecc63a" stroke="none" stroke-width="1"/>
<circle cx="1673.28" cy="239.10" r="3.1" fill="#cc3c34" stroke="none" stroke-width="1"/>
<circle cx="1673.28" cy="239.10" r="1.9" fill="#ecc63a" stroke="none" stroke-width="1"/>
<circle cx="1681.65" cy="239.10" r="3.1" fill="#cc3c34" stroke="none" stroke-width="1"/>
<circle cx="1681.65" cy="239.10" r="1.9" fill="#ecc63a" stroke="none" stroke-width="1"/>
<circle cx="1690.02" cy="239.10" r="3.1" fill="#cc3c34" stroke="none" stroke-width="1"/>
<circle cx="1690.02" cy="239.10" r="1.9" fill="#ecc63a" stroke="none" stroke-width="1"/>
<circle cx="1698.39" cy="239.10" r="3.1" fill="#cc3c34" stroke="none" stroke-width="1"/>
<circle cx="1698.39" cy="239.10" r="1.9" fill="#ecc63a" stroke="none" stroke-width="1"/>
<circle cx="1706.76" cy="239.10" r="3.1" fill="#cc3c34" stroke="none" stroke-width="1"/>
<circle cx="1706.76" cy="239.10" r="1.9" fill="#ecc63a" stroke="none" stroke-width="1"/>
<circle cx="1715.13" cy="239.10" r="3.1" fill="#cc3c34" stroke="none" stroke-width="1"/>
<circle cx="1715.13" cy="239.10" r="1.9" fill="#ecc63a" stroke="none" stroke-width="1"/>
<circle cx="1723.50" cy="239.10" r="3.1" fill="#cc3c34" stroke="none" stroke-width="1"/>
<circle cx="1723.50" cy="239.10" r="1.9" fill="#ecc63a" stroke="none" stroke-width="1"/>
<circle cx="1731.87" cy="239.10" r="3.1" fill="#cc3c34" stroke="none" stroke-width="1"/>
<circle cx="1731.87" cy="239.10" r="1.9" fill="#ecc63a" stroke="none" stroke-width="1"/>
<circle cx="1740.24" cy="239.10" r="3.1" fill="#cc3c34" stroke="none" stroke-width="1"/>
<circle cx="1740.24" cy="239.10" r="1.9" fill="#ecc63a" stroke="none" stroke-width="1"/>
<clipPath id="cf1534_261"><rect x="1534.2" y="261.8" width="217.7" height="17.7"/></clipPath>
<g clip-path="url(#cf1534_261)">
<rect x="1534.20" y="266.20" width="217.70" height="13.30" fill="#a23c4e" stroke="none" stroke-width="1" rx="0"/>
<path d="M1516.5 279.5l17.7 -17.7M1523.0 279.5l17.7 -17.7M1529.5 279.5l17.7 -17.7M1536.0 279.5l17.7 -17.7M1542.5 279.5l17.7 -17.7M1549.0 279.5l17.7 -17.7M1555.5 279.5l17.7 -17.7M1562.0 279.5l17.7 -17.7M1568.5 279.5l17.7 -17.7M1575.0 279.5l17.7 -17.7M1581.5 279.5l17.7 -17.7M1588.0 279.5l17.7 -17.7M1594.5 279.5l17.7 -17.7M1601.0 279.5l17.7 -17.7M1607.5 279.5l17.7 -17.7M1614.0 279.5l17.7 -17.7M1620.5 279.5l17.7 -17.7M1627.0 279.5l17.7 -17.7M1633.5 279.5l17.7 -17.7M1640.0 279.5l17.7 -17.7M1646.5 279.5l17.7 -17.7M1653.0 279.5l17.7 -17.7M1659.5 279.5l17.7 -17.7M1666.0 279.5l17.7 -17.7M1672.5 279.5l17.7 -17.7M1679.0 279.5l17.7 -17.7M1685.5 279.5l17.7 -17.7M1692.0 279.5l17.7 -17.7M1698.5 279.5l17.7 -17.7M1705.0 279.5l17.7 -17.7M1711.5 279.5l17.7 -17.7M1718.0 279.5l17.7 -17.7M1724.5 279.5l17.7 -17.7M1731.0 279.5l17.7 -17.7M1737.5 279.5l17.7 -17.7M1744.0 279.5l17.7 -17.7M1750.5 279.5l17.7 -17.7M1757.0 279.5l17.7 -17.7M1763.5 279.5l17.7 -17.7" stroke="#c03c40" stroke-width="1.5" fill="none" opacity="0.7"/>
<rect x="1534.70" y="262.30" width="216.70" height="16.70" fill="none" stroke="#b03844" stroke-width="1.0" rx="0"/>
</g>
<circle cx="1543.40" cy="270.90" r="3.1" fill="#cc3c34" stroke="none" stroke-width="1"/>
<circle cx="1543.40" cy="270.90" r="1.9" fill="#ecc63a" stroke="none" stroke-width="1"/>
<circle cx="1551.77" cy="270.90" r="3.1" fill="#cc3c34" stroke="none" stroke-width="1"/>
<circle cx="1551.77" cy="270.90" r="1.9" fill="#ecc63a" stroke="none" stroke-width="1"/>
<circle cx="1560.14" cy="270.90" r="3.1" fill="#cc3c34" stroke="none" stroke-width="1"/>
<circle cx="1560.14" cy="270.90" r="1.9" fill="#ecc63a" stroke="none" stroke-width="1"/>
<circle cx="1568.51" cy="270.90" r="3.1" fill="#cc3c34" stroke="none" stroke-width="1"/>
<circle cx="1568.51" cy="270.90" r="1.9" fill="#ecc63a" stroke="none" stroke-width="1"/>
<circle cx="1576.88" cy="270.90" r="3.1" fill="#cc3c34" stroke="none" stroke-width="1"/>
<circle cx="1576.88" cy="270.90" r="1.9" fill="#ecc63a" stroke="none" stroke-width="1"/>
<circle cx="1585.25" cy="270.90" r="3.1" fill="#cc3c34" stroke="none" stroke-width="1"/>
<circle cx="1585.25" cy="270.90" r="1.9" fill="#ecc63a" stroke="none" stroke-width="1"/>
<circle cx="1593.62" cy="270.90" r="3.1" fill="#cc3c34" stroke="none" stroke-width="1"/>
<circle cx="1593.62" cy="270.90" r="1.9" fill="#ecc63a" stroke="none" stroke-width="1"/>
<circle cx="1601.99" cy="270.90" r="3.1" fill="#cc3c34" stroke="none" stroke-width="1"/>
<circle cx="1601.99" cy="270.90" r="1.9" fill="#ecc63a" stroke="none" stroke-width="1"/>
<circle cx="1610.36" cy="270.90" r="3.1" fill="#cc3c34" stroke="none" stroke-width="1"/>
<circle cx="1610.36" cy="270.90" r="1.9" fill="#ecc63a" stroke="none" stroke-width="1"/>
<circle cx="1618.73" cy="270.90" r="3.1" fill="#cc3c34" stroke="none" stroke-width="1"/>
<circle cx="1618.73" cy="270.90" r="1.9" fill="#ecc63a" stroke="none" stroke-width="1"/>
<circle cx="1627.10" cy="270.90" r="3.1" fill="#cc3c34" stroke="none" stroke-width="1"/>
<circle cx="1627.10" cy="270.90" r="1.9" fill="#ecc63a" stroke="none" stroke-width="1"/>
<circle cx="1635.47" cy="270.90" r="3.1" fill="#cc3c34" stroke="none" stroke-width="1"/>
<circle cx="1635.47" cy="270.90" r="1.9" fill="#ecc63a" stroke="none" stroke-width="1"/>
<circle cx="1643.84" cy="270.90" r="3.1" fill="#cc3c34" stroke="none" stroke-width="1"/>
<circle cx="1643.84" cy="270.90" r="1.9" fill="#ecc63a" stroke="none" stroke-width="1"/>
<circle cx="1652.21" cy="270.90" r="3.1" fill="#cc3c34" stroke="none" stroke-width="1"/>
<circle cx="1652.21" cy="270.90" r="1.9" fill="#ecc63a" stroke="none" stroke-width="1"/>
<circle cx="1660.58" cy="270.90" r="3.1" fill="#cc3c34" stroke="none" stroke-width="1"/>
<circle cx="1660.58" cy="270.90" r="1.9" fill="#ecc63a" stroke="none" stroke-width="1"/>
<circle cx="1668.95" cy="270.90" r="3.1" fill="#cc3c34" stroke="none" stroke-width="1"/>
<circle cx="1668.95" cy="270.90" r="1.9" fill="#ecc63a" stroke="none" stroke-width="1"/>
<circle cx="1677.32" cy="270.90" r="3.1" fill="#cc3c34" stroke="none" stroke-width="1"/>
<circle cx="1677.32" cy="270.90" r="1.9" fill="#ecc63a" stroke="none" stroke-width="1"/>
<circle cx="1685.69" cy="270.90" r="3.1" fill="#cc3c34" stroke="none" stroke-width="1"/>
<circle cx="1685.69" cy="270.90" r="1.9" fill="#ecc63a" stroke="none" stroke-width="1"/>
<circle cx="1694.06" cy="270.90" r="3.1" fill="#cc3c34" stroke="none" stroke-width="1"/>
<circle cx="1694.06" cy="270.90" r="1.9" fill="#ecc63a" stroke="none" stroke-width="1"/>
<circle cx="1702.43" cy="270.90" r="3.1" fill="#cc3c34" stroke="none" stroke-width="1"/>
<circle cx="1702.43" cy="270.90" r="1.9" fill="#ecc63a" stroke="none" stroke-width="1"/>
<circle cx="1710.80" cy="270.90" r="3.1" fill="#cc3c34" stroke="none" stroke-width="1"/>
<circle cx="1710.80" cy="270.90" r="1.9" fill="#ecc63a" stroke="none" stroke-width="1"/>
<circle cx="1719.17" cy="270.90" r="3.1" fill="#cc3c34" stroke="none" stroke-width="1"/>
<circle cx="1719.17" cy="270.90" r="1.9" fill="#ecc63a" stroke="none" stroke-width="1"/>
<circle cx="1727.54" cy="270.90" r="3.1" fill="#cc3c34" stroke="none" stroke-width="1"/>
<circle cx="1727.54" cy="270.90" r="1.9" fill="#ecc63a" stroke="none" stroke-width="1"/>
<circle cx="1735.91" cy="270.90" r="3.1" fill="#cc3c34" stroke="none" stroke-width="1"/>
<circle cx="1735.91" cy="270.90" r="1.9" fill="#ecc63a" stroke="none" stroke-width="1"/>
<circle cx="1744.28" cy="270.90" r="3.1" fill="#cc3c34" stroke="none" stroke-width="1"/>
<circle cx="1744.28" cy="270.90" r="1.9" fill="#ecc63a" stroke="none" stroke-width="1"/>
<clipPath id="cf1250_385"><rect x="1250.7" y="385.1" width="496.3" height="17.1"/></clipPath>
<g clip-path="url(#cf1250_385)">
<rect x="1250.70" y="385.10" width="496.30" height="12.70" fill="#a23c4e" stroke="none" stroke-width="1" rx="0"/>
<path d="M1233.6 402.2l17.1 -17.1M1240.1 402.2l17.1 -17.1M1246.6 402.2l17.1 -17.1M1253.1 402.2l17.1 -17.1M1259.6 402.2l17.1 -17.1M1266.1 402.2l17.1 -17.1M1272.6 402.2l17.1 -17.1M1279.1 402.2l17.1 -17.1M1285.6 402.2l17.1 -17.1M1292.1 402.2l17.1 -17.1M1298.6 402.2l17.1 -17.1M1305.1 402.2l17.1 -17.1M1311.6 402.2l17.1 -17.1M1318.1 402.2l17.1 -17.1M1324.6 402.2l17.1 -17.1M1331.1 402.2l17.1 -17.1M1337.6 402.2l17.1 -17.1M1344.1 402.2l17.1 -17.1M1350.6 402.2l17.1 -17.1M1357.1 402.2l17.1 -17.1M1363.6 402.2l17.1 -17.1M1370.1 402.2l17.1 -17.1M1376.6 402.2l17.1 -17.1M1383.1 402.2l17.1 -17.1M1389.6 402.2l17.1 -17.1M1396.1 402.2l17.1 -17.1M1402.6 402.2l17.1 -17.1M1409.1 402.2l17.1 -17.1M1415.6 402.2l17.1 -17.1M1422.1 402.2l17.1 -17.1M1428.6 402.2l17.1 -17.1M1435.1 402.2l17.1 -17.1M1441.6 402.2l17.1 -17.1M1448.1 402.2l17.1 -17.1M1454.6 402.2l17.1 -17.1M1461.1 402.2l17.1 -17.1M1467.6 402.2l17.1 -17.1M1474.1 402.2l17.1 -17.1M1480.6 402.2l17.1 -17.1M1487.1 402.2l17.1 -17.1M1493.6 402.2l17.1 -17.1M1500.1 402.2l17.1 -17.1M1506.6 402.2l17.1 -17.1M1513.1 402.2l17.1 -17.1M1519.6 402.2l17.1 -17.1M1526.1 402.2l17.1 -17.1M1532.6 402.2l17.1 -17.1M1539.1 402.2l17.1 -17.1M1545.6 402.2l17.1 -17.1M1552.1 402.2l17.1 -17.1M1558.6 402.2l17.1 -17.1M1565.1 402.2l17.1 -17.1M1571.6 402.2l17.1 -17.1M1578.1 402.2l17.1 -17.1M1584.6 402.2l17.1 -17.1M1591.1 402.2l17.1 -17.1M1597.6 402.2l17.1 -17.1M1604.1 402.2l17.1 -17.1M1610.6 402.2l17.1 -17.1M1617.1 402.2l17.1 -17.1M1623.6 402.2l17.1 -17.1M1630.1 402.2l17.1 -17.1M1636.6 402.2l17.1 -17.1M1643.1 402.2l17.1 -17.1M1649.6 402.2l17.1 -17.1M1656.1 402.2l17.1 -17.1M1662.6 402.2l17.1 -17.1M1669.1 402.2l17.1 -17.1M1675.6 402.2l17.1 -17.1M1682.1 402.2l17.1 -17.1M1688.6 402.2l17.1 -17.1M1695.1 402.2l17.1 -17.1M1701.6 402.2l17.1 -17.1M1708.1 402.2l17.1 -17.1M1714.6 402.2l17.1 -17.1M1721.1 402.2l17.1 -17.1M1727.6 402.2l17.1 -17.1M1734.1 402.2l17.1 -17.1M1740.6 402.2l17.1 -17.1M1747.1 402.2l17.1 -17.1M1753.6 402.2l17.1 -17.1M1760.1 402.2l17.1 -17.1" stroke="#c03c40" stroke-width="1.5" fill="none" opacity="0.7"/>
<rect x="1251.20" y="385.60" width="495.30" height="16.10" fill="none" stroke="#b03844" stroke-width="1.0" rx="0"/>
</g>
<circle cx="1263.50" cy="394.10" r="3.1" fill="#cc3c34" stroke="none" stroke-width="1"/>
<circle cx="1263.50" cy="394.10" r="1.9" fill="#ecc63a" stroke="none" stroke-width="1"/>
<circle cx="1271.88" cy="394.10" r="3.1" fill="#cc3c34" stroke="none" stroke-width="1"/>
<circle cx="1271.88" cy="394.10" r="1.9" fill="#ecc63a" stroke="none" stroke-width="1"/>
<circle cx="1280.26" cy="394.10" r="3.1" fill="#cc3c34" stroke="none" stroke-width="1"/>
<circle cx="1280.26" cy="394.10" r="1.9" fill="#ecc63a" stroke="none" stroke-width="1"/>
<circle cx="1288.65" cy="394.10" r="3.1" fill="#cc3c34" stroke="none" stroke-width="1"/>
<circle cx="1288.65" cy="394.10" r="1.9" fill="#ecc63a" stroke="none" stroke-width="1"/>
<circle cx="1297.03" cy="394.10" r="3.1" fill="#cc3c34" stroke="none" stroke-width="1"/>
<circle cx="1297.03" cy="394.10" r="1.9" fill="#ecc63a" stroke="none" stroke-width="1"/>
<circle cx="1305.41" cy="394.10" r="3.1" fill="#cc3c34" stroke="none" stroke-width="1"/>
<circle cx="1305.41" cy="394.10" r="1.9" fill="#ecc63a" stroke="none" stroke-width="1"/>
<circle cx="1313.79" cy="394.10" r="3.1" fill="#cc3c34" stroke="none" stroke-width="1"/>
<circle cx="1313.79" cy="394.10" r="1.9" fill="#ecc63a" stroke="none" stroke-width="1"/>
<circle cx="1322.17" cy="394.10" r="3.1" fill="#cc3c34" stroke="none" stroke-width="1"/>
<circle cx="1322.17" cy="394.10" r="1.9" fill="#ecc63a" stroke="none" stroke-width="1"/>
<circle cx="1330.56" cy="394.10" r="3.1" fill="#cc3c34" stroke="none" stroke-width="1"/>
<circle cx="1330.56" cy="394.10" r="1.9" fill="#ecc63a" stroke="none" stroke-width="1"/>
<circle cx="1338.94" cy="394.10" r="3.1" fill="#cc3c34" stroke="none" stroke-width="1"/>
<circle cx="1338.94" cy="394.10" r="1.9" fill="#ecc63a" stroke="none" stroke-width="1"/>
<circle cx="1347.32" cy="394.10" r="3.1" fill="#cc3c34" stroke="none" stroke-width="1"/>
<circle cx="1347.32" cy="394.10" r="1.9" fill="#ecc63a" stroke="none" stroke-width="1"/>
<circle cx="1355.70" cy="394.10" r="3.1" fill="#cc3c34" stroke="none" stroke-width="1"/>
<circle cx="1355.70" cy="394.10" r="1.9" fill="#ecc63a" stroke="none" stroke-width="1"/>
<circle cx="1364.08" cy="394.10" r="3.1" fill="#cc3c34" stroke="none" stroke-width="1"/>
<circle cx="1364.08" cy="394.10" r="1.9" fill="#ecc63a" stroke="none" stroke-width="1"/>
<circle cx="1372.47" cy="394.10" r="3.1" fill="#cc3c34" stroke="none" stroke-width="1"/>
<circle cx="1372.47" cy="394.10" r="1.9" fill="#ecc63a" stroke="none" stroke-width="1"/>
<circle cx="1380.85" cy="394.10" r="3.1" fill="#cc3c34" stroke="none" stroke-width="1"/>
<circle cx="1380.85" cy="394.10" r="1.9" fill="#ecc63a" stroke="none" stroke-width="1"/>
<circle cx="1389.23" cy="394.10" r="3.1" fill="#cc3c34" stroke="none" stroke-width="1"/>
<circle cx="1389.23" cy="394.10" r="1.9" fill="#ecc63a" stroke="none" stroke-width="1"/>
<circle cx="1397.61" cy="394.10" r="3.1" fill="#cc3c34" stroke="none" stroke-width="1"/>
<circle cx="1397.61" cy="394.10" r="1.9" fill="#ecc63a" stroke="none" stroke-width="1"/>
<circle cx="1405.99" cy="394.10" r="3.1" fill="#cc3c34" stroke="none" stroke-width="1"/>
<circle cx="1405.99" cy="394.10" r="1.9" fill="#ecc63a" stroke="none" stroke-width="1"/>
<circle cx="1414.38" cy="394.10" r="3.1" fill="#cc3c34" stroke="none" stroke-width="1"/>
<circle cx="1414.38" cy="394.10" r="1.9" fill="#ecc63a" stroke="none" stroke-width="1"/>
<circle cx="1422.76" cy="394.10" r="3.1" fill="#cc3c34" stroke="none" stroke-width="1"/>
<circle cx="1422.76" cy="394.10" r="1.9" fill="#ecc63a" stroke="none" stroke-width="1"/>
<circle cx="1431.14" cy="394.10" r="3.1" fill="#cc3c34" stroke="none" stroke-width="1"/>
<circle cx="1431.14" cy="394.10" r="1.9" fill="#ecc63a" stroke="none" stroke-width="1"/>
<circle cx="1439.52" cy="394.10" r="3.1" fill="#cc3c34" stroke="none" stroke-width="1"/>
<circle cx="1439.52" cy="394.10" r="1.9" fill="#ecc63a" stroke="none" stroke-width="1"/>
<circle cx="1447.90" cy="394.10" r="3.1" fill="#cc3c34" stroke="none" stroke-width="1"/>
<circle cx="1447.90" cy="394.10" r="1.9" fill="#ecc63a" stroke="none" stroke-width="1"/>
<circle cx="1456.29" cy="394.10" r="3.1" fill="#cc3c34" stroke="none" stroke-width="1"/>
<circle cx="1456.29" cy="394.10" r="1.9" fill="#ecc63a" stroke="none" stroke-width="1"/>
<circle cx="1464.67" cy="394.10" r="3.1" fill="#cc3c34" stroke="none" stroke-width="1"/>
<circle cx="1464.67" cy="394.10" r="1.9" fill="#ecc63a" stroke="none" stroke-width="1"/>
<circle cx="1473.05" cy="394.10" r="3.1" fill="#cc3c34" stroke="none" stroke-width="1"/>
<circle cx="1473.05" cy="394.10" r="1.9" fill="#ecc63a" stroke="none" stroke-width="1"/>
<circle cx="1481.43" cy="394.10" r="3.1" fill="#cc3c34" stroke="none" stroke-width="1"/>
<circle cx="1481.43" cy="394.10" r="1.9" fill="#ecc63a" stroke="none" stroke-width="1"/>
<circle cx="1489.81" cy="394.10" r="3.1" fill="#cc3c34" stroke="none" stroke-width="1"/>
<circle cx="1489.81" cy="394.10" r="1.9" fill="#ecc63a" stroke="none" stroke-width="1"/>
<circle cx="1498.20" cy="394.10" r="3.1" fill="#cc3c34" stroke="none" stroke-width="1"/>
<circle cx="1498.20" cy="394.10" r="1.9" fill="#ecc63a" stroke="none" stroke-width="1"/>
<circle cx="1506.58" cy="394.10" r="3.1" fill="#cc3c34" stroke="none" stroke-width="1"/>
<circle cx="1506.58" cy="394.10" r="1.9" fill="#ecc63a" stroke="none" stroke-width="1"/>
<circle cx="1514.96" cy="394.10" r="3.1" fill="#cc3c34" stroke="none" stroke-width="1"/>
<circle cx="1514.96" cy="394.10" r="1.9" fill="#ecc63a" stroke="none" stroke-width="1"/>
<circle cx="1523.34" cy="394.10" r="3.1" fill="#cc3c34" stroke="none" stroke-width="1"/>
<circle cx="1523.34" cy="394.10" r="1.9" fill="#ecc63a" stroke="none" stroke-width="1"/>
<circle cx="1531.72" cy="394.10" r="3.1" fill="#cc3c34" stroke="none" stroke-width="1"/>
<circle cx="1531.72" cy="394.10" r="1.9" fill="#ecc63a" stroke="none" stroke-width="1"/>
<circle cx="1540.11" cy="394.10" r="3.1" fill="#cc3c34" stroke="none" stroke-width="1"/>
<circle cx="1540.11" cy="394.10" r="1.9" fill="#ecc63a" stroke="none" stroke-width="1"/>
<circle cx="1548.49" cy="394.10" r="3.1" fill="#cc3c34" stroke="none" stroke-width="1"/>
<circle cx="1548.49" cy="394.10" r="1.9" fill="#ecc63a" stroke="none" stroke-width="1"/>
<circle cx="1556.87" cy="394.10" r="3.1" fill="#cc3c34" stroke="none" stroke-width="1"/>
<circle cx="1556.87" cy="394.10" r="1.9" fill="#ecc63a" stroke="none" stroke-width="1"/>
<circle cx="1565.25" cy="394.10" r="3.1" fill="#cc3c34" stroke="none" stroke-width="1"/>
<circle cx="1565.25" cy="394.10" r="1.9" fill="#ecc63a" stroke="none" stroke-width="1"/>
<circle cx="1573.63" cy="394.10" r="3.1" fill="#cc3c34" stroke="none" stroke-width="1"/>
<circle cx="1573.63" cy="394.10" r="1.9" fill="#ecc63a" stroke="none" stroke-width="1"/>
<circle cx="1582.02" cy="394.10" r="3.1" fill="#cc3c34" stroke="none" stroke-width="1"/>
<circle cx="1582.02" cy="394.10" r="1.9" fill="#ecc63a" stroke="none" stroke-width="1"/>
<circle cx="1590.40" cy="394.10" r="3.1" fill="#cc3c34" stroke="none" stroke-width="1"/>
<circle cx="1590.40" cy="394.10" r="1.9" fill="#ecc63a" stroke="none" stroke-width="1"/>
<circle cx="1598.78" cy="394.10" r="3.1" fill="#cc3c34" stroke="none" stroke-width="1"/>
<circle cx="1598.78" cy="394.10" r="1.9" fill="#ecc63a" stroke="none" stroke-width="1"/>
<circle cx="1607.16" cy="394.10" r="3.1" fill="#cc3c34" stroke="none" stroke-width="1"/>
<circle cx="1607.16" cy="394.10" r="1.9" fill="#ecc63a" stroke="none" stroke-width="1"/>
<circle cx="1615.54" cy="394.10" r="3.1" fill="#cc3c34" stroke="none" stroke-width="1"/>
<circle cx="1615.54" cy="394.10" r="1.9" fill="#ecc63a" stroke="none" stroke-width="1"/>
<circle cx="1623.93" cy="394.10" r="3.1" fill="#cc3c34" stroke="none" stroke-width="1"/>
<circle cx="1623.93" cy="394.10" r="1.9" fill="#ecc63a" stroke="none" stroke-width="1"/>
<circle cx="1632.31" cy="394.10" r="3.1" fill="#cc3c34" stroke="none" stroke-width="1"/>
<circle cx="1632.31" cy="394.10" r="1.9" fill="#ecc63a" stroke="none" stroke-width="1"/>
<circle cx="1640.69" cy="394.10" r="3.1" fill="#cc3c34" stroke="none" stroke-width="1"/>
<circle cx="1640.69" cy="394.10" r="1.9" fill="#ecc63a" stroke="none" stroke-width="1"/>
<circle cx="1649.07" cy="394.10" r="3.1" fill="#cc3c34" stroke="none" stroke-width="1"/>
<circle cx="1649.07" cy="394.10" r="1.9" fill="#ecc63a" stroke="none" stroke-width="1"/>
<circle cx="1657.45" cy="394.10" r="3.1" fill="#cc3c34" stroke="none" stroke-width="1"/>
<circle cx="1657.45" cy="394.10" r="1.9" fill="#ecc63a" stroke="none" stroke-width="1"/>
<circle cx="1665.84" cy="394.10" r="3.1" fill="#cc3c34" stroke="none" stroke-width="1"/>
<circle cx="1665.84" cy="394.10" r="1.9" fill="#ecc63a" stroke="none" stroke-width="1"/>
<circle cx="1674.22" cy="394.10" r="3.1" fill="#cc3c34" stroke="none" stroke-width="1"/>
<circle cx="1674.22" cy="394.10" r="1.9" fill="#ecc63a" stroke="none" stroke-width="1"/>
<circle cx="1682.60" cy="394.10" r="3.1" fill="#cc3c34" stroke="none" stroke-width="1"/>
<circle cx="1682.60" cy="394.10" r="1.9" fill="#ecc63a" stroke="none" stroke-width="1"/>
<circle cx="1690.98" cy="394.10" r="3.1" fill="#cc3c34" stroke="none" stroke-width="1"/>
<circle cx="1690.98" cy="394.10" r="1.9" fill="#ecc63a" stroke="none" stroke-width="1"/>
<circle cx="1699.36" cy="394.10" r="3.1" fill="#cc3c34" stroke="none" stroke-width="1"/>
<circle cx="1699.36" cy="394.10" r="1.9" fill="#ecc63a" stroke="none" stroke-width="1"/>
<circle cx="1707.75" cy="394.10" r="3.1" fill="#cc3c34" stroke="none" stroke-width="1"/>
<circle cx="1707.75" cy="394.10" r="1.9" fill="#ecc63a" stroke="none" stroke-width="1"/>
<circle cx="1716.13" cy="394.10" r="3.1" fill="#cc3c34" stroke="none" stroke-width="1"/>
<circle cx="1716.13" cy="394.10" r="1.9" fill="#ecc63a" stroke="none" stroke-width="1"/>
<circle cx="1724.51" cy="394.10" r="3.1" fill="#cc3c34" stroke="none" stroke-width="1"/>
<circle cx="1724.51" cy="394.10" r="1.9" fill="#ecc63a" stroke="none" stroke-width="1"/>
<circle cx="1732.89" cy="394.10" r="3.1" fill="#cc3c34" stroke="none" stroke-width="1"/>
<circle cx="1732.89" cy="394.10" r="1.9" fill="#ecc63a" stroke="none" stroke-width="1"/>
<circle cx="1741.27" cy="394.10" r="3.1" fill="#cc3c34" stroke="none" stroke-width="1"/>
<circle cx="1741.27" cy="394.10" r="1.9" fill="#ecc63a" stroke="none" stroke-width="1"/>
<clipPath id="cf1250_417"><rect x="1250.7" y="417.0" width="496.3" height="16.8"/></clipPath>
<g clip-path="url(#cf1250_417)">
<rect x="1250.70" y="421.40" width="496.30" height="12.40" fill="#a23c4e" stroke="none" stroke-width="1" rx="0"/>
<path d="M1233.9 433.8l16.8 -16.8M1240.4 433.8l16.8 -16.8M1246.9 433.8l16.8 -16.8M1253.4 433.8l16.8 -16.8M1259.9 433.8l16.8 -16.8M1266.4 433.8l16.8 -16.8M1272.9 433.8l16.8 -16.8M1279.4 433.8l16.8 -16.8M1285.9 433.8l16.8 -16.8M1292.4 433.8l16.8 -16.8M1298.9 433.8l16.8 -16.8M1305.4 433.8l16.8 -16.8M1311.9 433.8l16.8 -16.8M1318.4 433.8l16.8 -16.8M1324.9 433.8l16.8 -16.8M1331.4 433.8l16.8 -16.8M1337.9 433.8l16.8 -16.8M1344.4 433.8l16.8 -16.8M1350.9 433.8l16.8 -16.8M1357.4 433.8l16.8 -16.8M1363.9 433.8l16.8 -16.8M1370.4 433.8l16.8 -16.8M1376.9 433.8l16.8 -16.8M1383.4 433.8l16.8 -16.8M1389.9 433.8l16.8 -16.8M1396.4 433.8l16.8 -16.8M1402.9 433.8l16.8 -16.8M1409.4 433.8l16.8 -16.8M1415.9 433.8l16.8 -16.8M1422.4 433.8l16.8 -16.8M1428.9 433.8l16.8 -16.8M1435.4 433.8l16.8 -16.8M1441.9 433.8l16.8 -16.8M1448.4 433.8l16.8 -16.8M1454.9 433.8l16.8 -16.8M1461.4 433.8l16.8 -16.8M1467.9 433.8l16.8 -16.8M1474.4 433.8l16.8 -16.8M1480.9 433.8l16.8 -16.8M1487.4 433.8l16.8 -16.8M1493.9 433.8l16.8 -16.8M1500.4 433.8l16.8 -16.8M1506.9 433.8l16.8 -16.8M1513.4 433.8l16.8 -16.8M1519.9 433.8l16.8 -16.8M1526.4 433.8l16.8 -16.8M1532.9 433.8l16.8 -16.8M1539.4 433.8l16.8 -16.8M1545.9 433.8l16.8 -16.8M1552.4 433.8l16.8 -16.8M1558.9 433.8l16.8 -16.8M1565.4 433.8l16.8 -16.8M1571.9 433.8l16.8 -16.8M1578.4 433.8l16.8 -16.8M1584.9 433.8l16.8 -16.8M1591.4 433.8l16.8 -16.8M1597.9 433.8l16.8 -16.8M1604.4 433.8l16.8 -16.8M1610.9 433.8l16.8 -16.8M1617.4 433.8l16.8 -16.8M1623.9 433.8l16.8 -16.8M1630.4 433.8l16.8 -16.8M1636.9 433.8l16.8 -16.8M1643.4 433.8l16.8 -16.8M1649.9 433.8l16.8 -16.8M1656.4 433.8l16.8 -16.8M1662.9 433.8l16.8 -16.8M1669.4 433.8l16.8 -16.8M1675.9 433.8l16.8 -16.8M1682.4 433.8l16.8 -16.8M1688.9 433.8l16.8 -16.8M1695.4 433.8l16.8 -16.8M1701.9 433.8l16.8 -16.8M1708.4 433.8l16.8 -16.8M1714.9 433.8l16.8 -16.8M1721.4 433.8l16.8 -16.8M1727.9 433.8l16.8 -16.8M1734.4 433.8l16.8 -16.8M1740.9 433.8l16.8 -16.8M1747.4 433.8l16.8 -16.8M1753.9 433.8l16.8 -16.8M1760.4 433.8l16.8 -16.8" stroke="#c03c40" stroke-width="1.5" fill="none" opacity="0.7"/>
<rect x="1251.20" y="417.50" width="495.30" height="15.80" fill="none" stroke="#b03844" stroke-width="1.0" rx="0"/>
</g>
<circle cx="1263.50" cy="425.40" r="3.1" fill="#cc3c34" stroke="none" stroke-width="1"/>
<circle cx="1263.50" cy="425.40" r="1.9" fill="#ecc63a" stroke="none" stroke-width="1"/>
<circle cx="1271.88" cy="425.40" r="3.1" fill="#cc3c34" stroke="none" stroke-width="1"/>
<circle cx="1271.88" cy="425.40" r="1.9" fill="#ecc63a" stroke="none" stroke-width="1"/>
<circle cx="1280.26" cy="425.40" r="3.1" fill="#cc3c34" stroke="none" stroke-width="1"/>
<circle cx="1280.26" cy="425.40" r="1.9" fill="#ecc63a" stroke="none" stroke-width="1"/>
<circle cx="1288.65" cy="425.40" r="3.1" fill="#cc3c34" stroke="none" stroke-width="1"/>
<circle cx="1288.65" cy="425.40" r="1.9" fill="#ecc63a" stroke="none" stroke-width="1"/>
<circle cx="1297.03" cy="425.40" r="3.1" fill="#cc3c34" stroke="none" stroke-width="1"/>
<circle cx="1297.03" cy="425.40" r="1.9" fill="#ecc63a" stroke="none" stroke-width="1"/>
<circle cx="1305.41" cy="425.40" r="3.1" fill="#cc3c34" stroke="none" stroke-width="1"/>
<circle cx="1305.41" cy="425.40" r="1.9" fill="#ecc63a" stroke="none" stroke-width="1"/>
<circle cx="1313.79" cy="425.40" r="3.1" fill="#cc3c34" stroke="none" stroke-width="1"/>
<circle cx="1313.79" cy="425.40" r="1.9" fill="#ecc63a" stroke="none" stroke-width="1"/>
<circle cx="1322.17" cy="425.40" r="3.1" fill="#cc3c34" stroke="none" stroke-width="1"/>
<circle cx="1322.17" cy="425.40" r="1.9" fill="#ecc63a" stroke="none" stroke-width="1"/>
<circle cx="1330.56" cy="425.40" r="3.1" fill="#cc3c34" stroke="none" stroke-width="1"/>
<circle cx="1330.56" cy="425.40" r="1.9" fill="#ecc63a" stroke="none" stroke-width="1"/>
<circle cx="1338.94" cy="425.40" r="3.1" fill="#cc3c34" stroke="none" stroke-width="1"/>
<circle cx="1338.94" cy="425.40" r="1.9" fill="#ecc63a" stroke="none" stroke-width="1"/>
<circle cx="1347.32" cy="425.40" r="3.1" fill="#cc3c34" stroke="none" stroke-width="1"/>
<circle cx="1347.32" cy="425.40" r="1.9" fill="#ecc63a" stroke="none" stroke-width="1"/>
<circle cx="1355.70" cy="425.40" r="3.1" fill="#cc3c34" stroke="none" stroke-width="1"/>
<circle cx="1355.70" cy="425.40" r="1.9" fill="#ecc63a" stroke="none" stroke-width="1"/>
<circle cx="1364.08" cy="425.40" r="3.1" fill="#cc3c34" stroke="none" stroke-width="1"/>
<circle cx="1364.08" cy="425.40" r="1.9" fill="#ecc63a" stroke="none" stroke-width="1"/>
<circle cx="1372.47" cy="425.40" r="3.1" fill="#cc3c34" stroke="none" stroke-width="1"/>
<circle cx="1372.47" cy="425.40" r="1.9" fill="#ecc63a" stroke="none" stroke-width="1"/>
<circle cx="1380.85" cy="425.40" r="3.1" fill="#cc3c34" stroke="none" stroke-width="1"/>
<circle cx="1380.85" cy="425.40" r="1.9" fill="#ecc63a" stroke="none" stroke-width="1"/>
<circle cx="1389.23" cy="425.40" r="3.1" fill="#cc3c34" stroke="none" stroke-width="1"/>
<circle cx="1389.23" cy="425.40" r="1.9" fill="#ecc63a" stroke="none" stroke-width="1"/>
<circle cx="1397.61" cy="425.40" r="3.1" fill="#cc3c34" stroke="none" stroke-width="1"/>
<circle cx="1397.61" cy="425.40" r="1.9" fill="#ecc63a" stroke="none" stroke-width="1"/>
<circle cx="1405.99" cy="425.40" r="3.1" fill="#cc3c34" stroke="none" stroke-width="1"/>
<circle cx="1405.99" cy="425.40" r="1.9" fill="#ecc63a" stroke="none" stroke-width="1"/>
<circle cx="1414.38" cy="425.40" r="3.1" fill="#cc3c34" stroke="none" stroke-width="1"/>
<circle cx="1414.38" cy="425.40" r="1.9" fill="#ecc63a" stroke="none" stroke-width="1"/>
<circle cx="1422.76" cy="425.40" r="3.1" fill="#cc3c34" stroke="none" stroke-width="1"/>
<circle cx="1422.76" cy="425.40" r="1.9" fill="#ecc63a" stroke="none" stroke-width="1"/>
<circle cx="1431.14" cy="425.40" r="3.1" fill="#cc3c34" stroke="none" stroke-width="1"/>
<circle cx="1431.14" cy="425.40" r="1.9" fill="#ecc63a" stroke="none" stroke-width="1"/>
<circle cx="1439.52" cy="425.40" r="3.1" fill="#cc3c34" stroke="none" stroke-width="1"/>
<circle cx="1439.52" cy="425.40" r="1.9" fill="#ecc63a" stroke="none" stroke-width="1"/>
<circle cx="1447.90" cy="425.40" r="3.1" fill="#cc3c34" stroke="none" stroke-width="1"/>
<circle cx="1447.90" cy="425.40" r="1.9" fill="#ecc63a" stroke="none" stroke-width="1"/>
<circle cx="1456.29" cy="425.40" r="3.1" fill="#cc3c34" stroke="none" stroke-width="1"/>
<circle cx="1456.29" cy="425.40" r="1.9" fill="#ecc63a" stroke="none" stroke-width="1"/>
<circle cx="1464.67" cy="425.40" r="3.1" fill="#cc3c34" stroke="none" stroke-width="1"/>
<circle cx="1464.67" cy="425.40" r="1.9" fill="#ecc63a" stroke="none" stroke-width="1"/>
<circle cx="1473.05" cy="425.40" r="3.1" fill="#cc3c34" stroke="none" stroke-width="1"/>
<circle cx="1473.05" cy="425.40" r="1.9" fill="#ecc63a" stroke="none" stroke-width="1"/>
<circle cx="1481.43" cy="425.40" r="3.1" fill="#cc3c34" stroke="none" stroke-width="1"/>
<circle cx="1481.43" cy="425.40" r="1.9" fill="#ecc63a" stroke="none" stroke-width="1"/>
<circle cx="1489.81" cy="425.40" r="3.1" fill="#cc3c34" stroke="none" stroke-width="1"/>
<circle cx="1489.81" cy="425.40" r="1.9" fill="#ecc63a" stroke="none" stroke-width="1"/>
<circle cx="1498.20" cy="425.40" r="3.1" fill="#cc3c34" stroke="none" stroke-width="1"/>
<circle cx="1498.20" cy="425.40" r="1.9" fill="#ecc63a" stroke="none" stroke-width="1"/>
<circle cx="1506.58" cy="425.40" r="3.1" fill="#cc3c34" stroke="none" stroke-width="1"/>
<circle cx="1506.58" cy="425.40" r="1.9" fill="#ecc63a" stroke="none" stroke-width="1"/>
<circle cx="1514.96" cy="425.40" r="3.1" fill="#cc3c34" stroke="none" stroke-width="1"/>
<circle cx="1514.96" cy="425.40" r="1.9" fill="#ecc63a" stroke="none" stroke-width="1"/>
<circle cx="1523.34" cy="425.40" r="3.1" fill="#cc3c34" stroke="none" stroke-width="1"/>
<circle cx="1523.34" cy="425.40" r="1.9" fill="#ecc63a" stroke="none" stroke-width="1"/>
<circle cx="1531.72" cy="425.40" r="3.1" fill="#cc3c34" stroke="none" stroke-width="1"/>
<circle cx="1531.72" cy="425.40" r="1.9" fill="#ecc63a" stroke="none" stroke-width="1"/>
<circle cx="1540.11" cy="425.40" r="3.1" fill="#cc3c34" stroke="none" stroke-width="1"/>
<circle cx="1540.11" cy="425.40" r="1.9" fill="#ecc63a" stroke="none" stroke-width="1"/>
<circle cx="1548.49" cy="425.40" r="3.1" fill="#cc3c34" stroke="none" stroke-width="1"/>
<circle cx="1548.49" cy="425.40" r="1.9" fill="#ecc63a" stroke="none" stroke-width="1"/>
<circle cx="1556.87" cy="425.40" r="3.1" fill="#cc3c34" stroke="none" stroke-width="1"/>
<circle cx="1556.87" cy="425.40" r="1.9" fill="#ecc63a" stroke="none" stroke-width="1"/>
<circle cx="1565.25" cy="425.40" r="3.1" fill="#cc3c34" stroke="none" stroke-width="1"/>
<circle cx="1565.25" cy="425.40" r="1.9" fill="#ecc63a" stroke="none" stroke-width="1"/>
<circle cx="1573.63" cy="425.40" r="3.1" fill="#cc3c34" stroke="none" stroke-width="1"/>
<circle cx="1573.63" cy="425.40" r="1.9" fill="#ecc63a" stroke="none" stroke-width="1"/>
<circle cx="1582.02" cy="425.40" r="3.1" fill="#cc3c34" stroke="none" stroke-width="1"/>
<circle cx="1582.02" cy="425.40" r="1.9" fill="#ecc63a" stroke="none" stroke-width="1"/>
<circle cx="1590.40" cy="425.40" r="3.1" fill="#cc3c34" stroke="none" stroke-width="1"/>
<circle cx="1590.40" cy="425.40" r="1.9" fill="#ecc63a" stroke="none" stroke-width="1"/>
<circle cx="1598.78" cy="425.40" r="3.1" fill="#cc3c34" stroke="none" stroke-width="1"/>
<circle cx="1598.78" cy="425.40" r="1.9" fill="#ecc63a" stroke="none" stroke-width="1"/>
<circle cx="1607.16" cy="425.40" r="3.1" fill="#cc3c34" stroke="none" stroke-width="1"/>
<circle cx="1607.16" cy="425.40" r="1.9" fill="#ecc63a" stroke="none" stroke-width="1"/>
<circle cx="1615.54" cy="425.40" r="3.1" fill="#cc3c34" stroke="none" stroke-width="1"/>
<circle cx="1615.54" cy="425.40" r="1.9" fill="#ecc63a" stroke="none" stroke-width="1"/>
<circle cx="1623.93" cy="425.40" r="3.1" fill="#cc3c34" stroke="none" stroke-width="1"/>
<circle cx="1623.93" cy="425.40" r="1.9" fill="#ecc63a" stroke="none" stroke-width="1"/>
<circle cx="1632.31" cy="425.40" r="3.1" fill="#cc3c34" stroke="none" stroke-width="1"/>
<circle cx="1632.31" cy="425.40" r="1.9" fill="#ecc63a" stroke="none" stroke-width="1"/>
<circle cx="1640.69" cy="425.40" r="3.1" fill="#cc3c34" stroke="none" stroke-width="1"/>
<circle cx="1640.69" cy="425.40" r="1.9" fill="#ecc63a" stroke="none" stroke-width="1"/>
<circle cx="1649.07" cy="425.40" r="3.1" fill="#cc3c34" stroke="none" stroke-width="1"/>
<circle cx="1649.07" cy="425.40" r="1.9" fill="#ecc63a" stroke="none" stroke-width="1"/>
<circle cx="1657.45" cy="425.40" r="3.1" fill="#cc3c34" stroke="none" stroke-width="1"/>
<circle cx="1657.45" cy="425.40" r="1.9" fill="#ecc63a" stroke="none" stroke-width="1"/>
<circle cx="1665.84" cy="425.40" r="3.1" fill="#cc3c34" stroke="none" stroke-width="1"/>
<circle cx="1665.84" cy="425.40" r="1.9" fill="#ecc63a" stroke="none" stroke-width="1"/>
<circle cx="1674.22" cy="425.40" r="3.1" fill="#cc3c34" stroke="none" stroke-width="1"/>
<circle cx="1674.22" cy="425.40" r="1.9" fill="#ecc63a" stroke="none" stroke-width="1"/>
<circle cx="1682.60" cy="425.40" r="3.1" fill="#cc3c34" stroke="none" stroke-width="1"/>
<circle cx="1682.60" cy="425.40" r="1.9" fill="#ecc63a" stroke="none" stroke-width="1"/>
<circle cx="1690.98" cy="425.40" r="3.1" fill="#cc3c34" stroke="none" stroke-width="1"/>
<circle cx="1690.98" cy="425.40" r="1.9" fill="#ecc63a" stroke="none" stroke-width="1"/>
<circle cx="1699.36" cy="425.40" r="3.1" fill="#cc3c34" stroke="none" stroke-width="1"/>
<circle cx="1699.36" cy="425.40" r="1.9" fill="#ecc63a" stroke="none" stroke-width="1"/>
<circle cx="1707.75" cy="425.40" r="3.1" fill="#cc3c34" stroke="none" stroke-width="1"/>
<circle cx="1707.75" cy="425.40" r="1.9" fill="#ecc63a" stroke="none" stroke-width="1"/>
<circle cx="1716.13" cy="425.40" r="3.1" fill="#cc3c34" stroke="none" stroke-width="1"/>
<circle cx="1716.13" cy="425.40" r="1.9" fill="#ecc63a" stroke="none" stroke-width="1"/>
<circle cx="1724.51" cy="425.40" r="3.1" fill="#cc3c34" stroke="none" stroke-width="1"/>
<circle cx="1724.51" cy="425.40" r="1.9" fill="#ecc63a" stroke="none" stroke-width="1"/>
<circle cx="1732.89" cy="425.40" r="3.1" fill="#cc3c34" stroke="none" stroke-width="1"/>
<circle cx="1732.89" cy="425.40" r="1.9" fill="#ecc63a" stroke="none" stroke-width="1"/>
<circle cx="1741.27" cy="425.40" r="3.1" fill="#cc3c34" stroke="none" stroke-width="1"/>
<circle cx="1741.27" cy="425.40" r="1.9" fill="#ecc63a" stroke="none" stroke-width="1"/>
<rect x="1238.00" y="249.70" width="220.50" height="10.60" fill="#c83434" stroke="none" stroke-width="1" rx="0"/>
<rect x="1552.00" y="249.70" width="205.00" height="10.60" fill="#c83434" stroke="none" stroke-width="1" rx="0"/>
<rect x="1239.00" y="404.50" width="518.00" height="10.30" fill="#c83434" stroke="none" stroke-width="1" rx="0"/>
<text transform="translate(1329.70 255.00) rotate(0)" x="-26.20" y="3.11" font-size="8.08" textLength="52.40" lengthAdjust="spacingAndGlyphs" fill="#ecc0c0" stroke="#ecc0c0" stroke-width="0.0">Net-(J1-In)</text>
<text transform="translate(1680.70 255.00) rotate(0)" x="-26.20" y="3.11" font-size="8.08" textLength="52.40" lengthAdjust="spacingAndGlyphs" fill="#ecc0c0" stroke="#ecc0c0" stroke-width="0.0">Net-(J2-In)</text>
<text transform="translate(1499.70 409.60) rotate(0)" x="-26.20" y="3.11" font-size="8.08" textLength="52.40" lengthAdjust="spacingAndGlyphs" fill="#ecc0c0" stroke="#ecc0c0" stroke-width="0.0">Net-(J6-In)</text>
<rect x="1186.80" y="194.45" width="56.50" height="27.10" fill="#021426" stroke="none" stroke-width="1" rx="4"/>
<rect x="1186.80" y="194.45" width="5.20" height="27.10" fill="#021426" stroke="none" stroke-width="1" rx="0"/>
<rect x="1207.65" y="194.45" width="6.60" height="27.10" fill="#335383" stroke="none" stroke-width="1" rx="0"/>
<rect x="1237.70" y="204.85" width="5.60" height="6.10" fill="#335383" stroke="none" stroke-width="1" rx="0"/>
<rect x="1186.80" y="287.90" width="56.50" height="27.10" fill="#021426" stroke="none" stroke-width="1" rx="4"/>
<rect x="1186.80" y="287.90" width="5.20" height="27.10" fill="#021426" stroke="none" stroke-width="1" rx="0"/>
<rect x="1207.65" y="287.90" width="6.60" height="27.10" fill="#335383" stroke="none" stroke-width="1" rx="0"/>
<rect x="1237.70" y="298.30" width="5.60" height="6.10" fill="#335383" stroke="none" stroke-width="1" rx="0"/>
<rect x="1052.50" y="193.50" width="191.40" height="123.10" fill="none" stroke="#c23cc8" stroke-width="1.2" rx="0"/>
<path d="M1232.40 198.60 L1161.50 198.60 L1161.50 212.90 L1057.60 212.90 L1057.60 296.30 L1161.50 296.30 L1161.50 310.20 L1232.40 310.20" stroke="#b4b4b0" stroke-width="1.3" fill="none" stroke-linejoin="miter"/>
<line x1="1182.50" y1="212.60" x2="1182.50" y2="296.60" stroke="#b4b4b0" stroke-width="1.3" stroke-linecap="butt"/>
<path d="M1182.50 246.60 L1171.70 254.60 L1182.50 262.60" stroke="#b4b4b0" stroke-width="1.3" fill="none" stroke-linejoin="miter"/>
<rect x="1183.00" y="199.85" width="55.70" height="16.00" fill="#c83434" stroke="none" stroke-width="1" rx="0"/>
<rect x="1183.00" y="246.60" width="55.70" height="16.00" fill="#c83434" stroke="none" stroke-width="1" rx="0"/>
<rect x="1183.00" y="293.30" width="55.70" height="16.00" fill="#c83434" stroke="none" stroke-width="1" rx="0"/>
<circle cx="1194.20" cy="207.85" r="1.9" fill="#ecc63a" stroke="none" stroke-width="1"/>
<circle cx="1202.50" cy="207.85" r="1.9" fill="#ecc63a" stroke="none" stroke-width="1"/>
<circle cx="1210.80" cy="207.85" r="1.9" fill="#ecc63a" stroke="none" stroke-width="1"/>
<circle cx="1219.10" cy="207.85" r="1.9" fill="#ecc63a" stroke="none" stroke-width="1"/>
<circle cx="1227.40" cy="207.85" r="1.9" fill="#ecc63a" stroke="none" stroke-width="1"/>
<text transform="translate(1210.85 203.65) rotate(0)" x="-1.90" y="2.77" font-size="7.13" textLength="3.80" lengthAdjust="spacingAndGlyphs" fill="#e8bcbc" stroke="#e8bcbc" stroke-width="0.0">2</text>
<text transform="translate(1210.85 212.15) rotate(0)" x="-6.93" y="2.77" font-size="7.13" textLength="13.86" lengthAdjust="spacingAndGlyphs" fill="#e8bcbc" stroke="#e8bcbc" stroke-width="0.0">GND</text>
<circle cx="1194.20" cy="301.30" r="1.9" fill="#ecc63a" stroke="none" stroke-width="1"/>
<circle cx="1202.50" cy="301.30" r="1.9" fill="#ecc63a" stroke="none" stroke-width="1"/>
<circle cx="1210.80" cy="301.30" r="1.9" fill="#ecc63a" stroke="none" stroke-width="1"/>
<circle cx="1219.10" cy="301.30" r="1.9" fill="#ecc63a" stroke="none" stroke-width="1"/>
<circle cx="1227.40" cy="301.30" r="1.9" fill="#ecc63a" stroke="none" stroke-width="1"/>
<text transform="translate(1210.85 297.10) rotate(0)" x="-1.90" y="2.77" font-size="7.13" textLength="3.80" lengthAdjust="spacingAndGlyphs" fill="#e8bcbc" stroke="#e8bcbc" stroke-width="0.0">2</text>
<text transform="translate(1210.85 305.60) rotate(0)" x="-6.93" y="2.77" font-size="7.13" textLength="13.86" lengthAdjust="spacingAndGlyphs" fill="#e8bcbc" stroke="#e8bcbc" stroke-width="0.0">GND</text>
<text transform="translate(1210.85 250.60) rotate(0)" x="-2.10" y="3.02" font-size="7.81" textLength="4.20" lengthAdjust="spacingAndGlyphs" fill="#ecc4c4" stroke="#ecc4c4" stroke-width="0.0">1</text>
<text transform="translate(1210.85 258.70) rotate(0)" x="-24.18" y="3.02" font-size="7.81" textLength="48.37" lengthAdjust="spacingAndGlyphs" fill="#ecc4c4" stroke="#ecc4c4" stroke-width="0.0">Net-(J1-In)</text>
<rect x="1186.80" y="348.95" width="60.60" height="27.10" fill="#021426" stroke="none" stroke-width="1" rx="4"/>
<rect x="1186.80" y="348.95" width="5.20" height="27.10" fill="#021426" stroke="none" stroke-width="1" rx="0"/>
<rect x="1211.75" y="348.95" width="6.60" height="27.10" fill="#335383" stroke="none" stroke-width="1" rx="0"/>
<rect x="1241.80" y="359.35" width="5.60" height="6.10" fill="#335383" stroke="none" stroke-width="1" rx="0"/>
<rect x="1186.80" y="442.40" width="60.60" height="27.10" fill="#021426" stroke="none" stroke-width="1" rx="4"/>
<rect x="1186.80" y="442.40" width="5.20" height="27.10" fill="#021426" stroke="none" stroke-width="1" rx="0"/>
<rect x="1211.75" y="442.40" width="6.60" height="27.10" fill="#335383" stroke="none" stroke-width="1" rx="0"/>
<rect x="1241.80" y="452.80" width="5.60" height="6.10" fill="#335383" stroke="none" stroke-width="1" rx="0"/>
<rect x="1055.90" y="348.00" width="192.10" height="123.10" fill="none" stroke="#c23cc8" stroke-width="1.2" rx="0"/>
<path d="M1236.50 353.10 L1164.90 353.10 L1164.90 367.40 L1061.00 367.40 L1061.00 450.80 L1164.90 450.80 L1164.90 464.70 L1236.50 464.70" stroke="#b4b4b0" stroke-width="1.3" fill="none" stroke-linejoin="miter"/>
<line x1="1186.60" y1="367.10" x2="1186.60" y2="451.10" stroke="#b4b4b0" stroke-width="1.3" stroke-linecap="butt"/>
<path d="M1186.60 401.10 L1175.80 409.10 L1186.60 417.10" stroke="#b4b4b0" stroke-width="1.3" fill="none" stroke-linejoin="miter"/>
<rect x="1187.10" y="354.35" width="55.70" height="16.00" fill="#c83434" stroke="none" stroke-width="1" rx="0"/>
<rect x="1187.10" y="401.10" width="55.70" height="16.00" fill="#c83434" stroke="none" stroke-width="1" rx="0"/>
<rect x="1187.10" y="447.80" width="55.70" height="16.00" fill="#c83434" stroke="none" stroke-width="1" rx="0"/>
<circle cx="1198.30" cy="362.35" r="1.9" fill="#ecc63a" stroke="none" stroke-width="1"/>
<circle cx="1206.60" cy="362.35" r="1.9" fill="#ecc63a" stroke="none" stroke-width="1"/>
<circle cx="1214.90" cy="362.35" r="1.9" fill="#ecc63a" stroke="none" stroke-width="1"/>
<circle cx="1223.20" cy="362.35" r="1.9" fill="#ecc63a" stroke="none" stroke-width="1"/>
<circle cx="1231.50" cy="362.35" r="1.9" fill="#ecc63a" stroke="none" stroke-width="1"/>
<text transform="translate(1214.95 358.15) rotate(0)" x="-1.90" y="2.77" font-size="7.13" textLength="3.80" lengthAdjust="spacingAndGlyphs" fill="#e8bcbc" stroke="#e8bcbc" stroke-width="0.0">2</text>
<text transform="translate(1214.95 366.65) rotate(0)" x="-6.93" y="2.77" font-size="7.13" textLength="13.86" lengthAdjust="spacingAndGlyphs" fill="#e8bcbc" stroke="#e8bcbc" stroke-width="0.0">GND</text>
<circle cx="1198.30" cy="455.80" r="1.9" fill="#ecc63a" stroke="none" stroke-width="1"/>
<circle cx="1206.60" cy="455.80" r="1.9" fill="#ecc63a" stroke="none" stroke-width="1"/>
<circle cx="1214.90" cy="455.80" r="1.9" fill="#ecc63a" stroke="none" stroke-width="1"/>
<circle cx="1223.20" cy="455.80" r="1.9" fill="#ecc63a" stroke="none" stroke-width="1"/>
<circle cx="1231.50" cy="455.80" r="1.9" fill="#ecc63a" stroke="none" stroke-width="1"/>
<text transform="translate(1214.95 451.60) rotate(0)" x="-1.90" y="2.77" font-size="7.13" textLength="3.80" lengthAdjust="spacingAndGlyphs" fill="#e8bcbc" stroke="#e8bcbc" stroke-width="0.0">2</text>
<text transform="translate(1214.95 460.10) rotate(0)" x="-6.93" y="2.77" font-size="7.13" textLength="13.86" lengthAdjust="spacingAndGlyphs" fill="#e8bcbc" stroke="#e8bcbc" stroke-width="0.0">GND</text>
<text transform="translate(1214.95 405.10) rotate(0)" x="-2.10" y="3.02" font-size="7.81" textLength="4.20" lengthAdjust="spacingAndGlyphs" fill="#ecc4c4" stroke="#ecc4c4" stroke-width="0.0">1</text>
<text transform="translate(1214.95 413.20) rotate(0)" x="-24.18" y="3.02" font-size="7.81" textLength="48.37" lengthAdjust="spacingAndGlyphs" fill="#ecc4c4" stroke="#ecc4c4" stroke-width="0.0">Net-(J6-In)</text>
<rect x="1751.40" y="193.90" width="58.20" height="27.10" fill="#021426" stroke="none" stroke-width="1" rx="4"/>
<rect x="1804.00" y="193.90" width="5.60" height="27.10" fill="#021426" stroke="none" stroke-width="1" rx="0"/>
<rect x="1780.45" y="193.90" width="6.60" height="27.10" fill="#335383" stroke="none" stroke-width="1" rx="0"/>
<rect x="1751.40" y="204.30" width="5.60" height="6.10" fill="#335383" stroke="none" stroke-width="1" rx="0"/>
<rect x="1751.40" y="287.30" width="58.20" height="27.10" fill="#021426" stroke="none" stroke-width="1" rx="4"/>
<rect x="1804.00" y="287.30" width="5.60" height="27.10" fill="#021426" stroke="none" stroke-width="1" rx="0"/>
<rect x="1780.45" y="287.30" width="6.60" height="27.10" fill="#335383" stroke="none" stroke-width="1" rx="0"/>
<rect x="1751.40" y="297.70" width="5.60" height="6.10" fill="#335383" stroke="none" stroke-width="1" rx="0"/>
<path d="M1916 192.6 H1750.4 V314.2 H1916" stroke="#c23cc8" stroke-width="1.2" fill="none"/>
<path d="M1762.00 198.40 L1832.30 198.40 L1832.30 211.60 L1916.00 211.60" stroke="#b4b4b0" stroke-width="1.3" fill="none" stroke-linejoin="miter"/>
<path d="M1762.00 309.60 L1832.30 309.60 L1832.30 296.20 L1916.00 296.20" stroke="#b4b4b0" stroke-width="1.3" fill="none" stroke-linejoin="miter"/>
<line x1="1812.20" y1="198.40" x2="1812.20" y2="309.60" stroke="#b4b4b0" stroke-width="1.3" stroke-linecap="butt"/>
<path d="M1812.20 246.00 L1822.30 254.00 L1812.20 262.00" stroke="#b4b4b0" stroke-width="1.3" fill="none" stroke-linejoin="miter"/>
<rect x="1756.00" y="199.30" width="55.70" height="16.00" fill="#c83434" stroke="none" stroke-width="1" rx="0"/>
<rect x="1756.00" y="246.00" width="55.70" height="16.00" fill="#c83434" stroke="none" stroke-width="1" rx="0"/>
<rect x="1756.00" y="292.70" width="55.70" height="16.00" fill="#c83434" stroke="none" stroke-width="1" rx="0"/>
<circle cx="1767.40" cy="207.30" r="1.9" fill="#ecc63a" stroke="none" stroke-width="1"/>
<circle cx="1775.70" cy="207.30" r="1.9" fill="#ecc63a" stroke="none" stroke-width="1"/>
<circle cx="1784.00" cy="207.30" r="1.9" fill="#ecc63a" stroke="none" stroke-width="1"/>
<circle cx="1792.30" cy="207.30" r="1.9" fill="#ecc63a" stroke="none" stroke-width="1"/>
<circle cx="1800.60" cy="207.30" r="1.9" fill="#ecc63a" stroke="none" stroke-width="1"/>
<text transform="translate(1783.85 203.10) rotate(0)" x="-1.90" y="2.77" font-size="7.13" textLength="3.80" lengthAdjust="spacingAndGlyphs" fill="#e8bcbc" stroke="#e8bcbc" stroke-width="0.0">2</text>
<text transform="translate(1783.85 211.60) rotate(0)" x="-6.93" y="2.77" font-size="7.13" textLength="13.86" lengthAdjust="spacingAndGlyphs" fill="#e8bcbc" stroke="#e8bcbc" stroke-width="0.0">GND</text>
<circle cx="1767.40" cy="300.70" r="1.9" fill="#ecc63a" stroke="none" stroke-width="1"/>
<circle cx="1775.70" cy="300.70" r="1.9" fill="#ecc63a" stroke="none" stroke-width="1"/>
<circle cx="1784.00" cy="300.70" r="1.9" fill="#ecc63a" stroke="none" stroke-width="1"/>
<circle cx="1792.30" cy="300.70" r="1.9" fill="#ecc63a" stroke="none" stroke-width="1"/>
<circle cx="1800.60" cy="300.70" r="1.9" fill="#ecc63a" stroke="none" stroke-width="1"/>
<text transform="translate(1783.85 296.50) rotate(0)" x="-1.90" y="2.77" font-size="7.13" textLength="3.80" lengthAdjust="spacingAndGlyphs" fill="#e8bcbc" stroke="#e8bcbc" stroke-width="0.0">2</text>
<text transform="translate(1783.85 305.00) rotate(0)" x="-6.93" y="2.77" font-size="7.13" textLength="13.86" lengthAdjust="spacingAndGlyphs" fill="#e8bcbc" stroke="#e8bcbc" stroke-width="0.0">GND</text>
<text transform="translate(1783.85 250.00) rotate(0)" x="-2.10" y="3.02" font-size="7.81" textLength="4.20" lengthAdjust="spacingAndGlyphs" fill="#ecc4c4" stroke="#ecc4c4" stroke-width="0.0">1</text>
<text transform="translate(1783.85 258.10) rotate(0)" x="-24.18" y="3.02" font-size="7.81" textLength="48.37" lengthAdjust="spacingAndGlyphs" fill="#ecc4c4" stroke="#ecc4c4" stroke-width="0.0">Net-(J2-In)</text>
<rect x="1750.90" y="349.40" width="58.70" height="27.10" fill="#021426" stroke="none" stroke-width="1" rx="4"/>
<rect x="1804.00" y="349.40" width="5.60" height="27.10" fill="#021426" stroke="none" stroke-width="1" rx="0"/>
<rect x="1779.65" y="349.40" width="6.60" height="27.10" fill="#335383" stroke="none" stroke-width="1" rx="0"/>
<rect x="1750.90" y="359.80" width="5.60" height="6.10" fill="#335383" stroke="none" stroke-width="1" rx="0"/>
<rect x="1750.90" y="442.80" width="58.70" height="27.10" fill="#021426" stroke="none" stroke-width="1" rx="4"/>
<rect x="1804.00" y="442.80" width="5.60" height="27.10" fill="#021426" stroke="none" stroke-width="1" rx="0"/>
<rect x="1779.65" y="442.80" width="6.60" height="27.10" fill="#335383" stroke="none" stroke-width="1" rx="0"/>
<rect x="1750.90" y="453.20" width="5.60" height="6.10" fill="#335383" stroke="none" stroke-width="1" rx="0"/>
<path d="M1916 348.1 H1749.9 V469.7 H1916" stroke="#c23cc8" stroke-width="1.2" fill="none"/>
<path d="M1761.50 353.90 L1832.30 353.90 L1832.30 367.10 L1916.00 367.10" stroke="#b4b4b0" stroke-width="1.3" fill="none" stroke-linejoin="miter"/>
<path d="M1761.50 465.10 L1832.30 465.10 L1832.30 451.70 L1916.00 451.70" stroke="#b4b4b0" stroke-width="1.3" fill="none" stroke-linejoin="miter"/>
<line x1="1811.10" y1="353.90" x2="1811.10" y2="465.10" stroke="#b4b4b0" stroke-width="1.3" stroke-linecap="butt"/>
<path d="M1811.10 401.50 L1821.20 409.50 L1811.10 417.50" stroke="#b4b4b0" stroke-width="1.3" fill="none" stroke-linejoin="miter"/>
<rect x="1755.50" y="354.80" width="55.10" height="16.00" fill="#c83434" stroke="none" stroke-width="1" rx="0"/>
<rect x="1755.50" y="401.50" width="55.10" height="16.00" fill="#c83434" stroke="none" stroke-width="1" rx="0"/>
<rect x="1755.50" y="448.20" width="55.10" height="16.00" fill="#c83434" stroke="none" stroke-width="1" rx="0"/>
<circle cx="1766.90" cy="362.80" r="1.9" fill="#ecc63a" stroke="none" stroke-width="1"/>
<circle cx="1775.20" cy="362.80" r="1.9" fill="#ecc63a" stroke="none" stroke-width="1"/>
<circle cx="1783.50" cy="362.80" r="1.9" fill="#ecc63a" stroke="none" stroke-width="1"/>
<circle cx="1791.80" cy="362.80" r="1.9" fill="#ecc63a" stroke="none" stroke-width="1"/>
<circle cx="1800.10" cy="362.80" r="1.9" fill="#ecc63a" stroke="none" stroke-width="1"/>
<text transform="translate(1783.05 358.60) rotate(0)" x="-1.90" y="2.77" font-size="7.13" textLength="3.80" lengthAdjust="spacingAndGlyphs" fill="#e8bcbc" stroke="#e8bcbc" stroke-width="0.0">2</text>
<text transform="translate(1783.05 367.10) rotate(0)" x="-6.93" y="2.77" font-size="7.13" textLength="13.86" lengthAdjust="spacingAndGlyphs" fill="#e8bcbc" stroke="#e8bcbc" stroke-width="0.0">GND</text>
<circle cx="1766.90" cy="456.20" r="1.9" fill="#ecc63a" stroke="none" stroke-width="1"/>
<circle cx="1775.20" cy="456.20" r="1.9" fill="#ecc63a" stroke="none" stroke-width="1"/>
<circle cx="1783.50" cy="456.20" r="1.9" fill="#ecc63a" stroke="none" stroke-width="1"/>
<circle cx="1791.80" cy="456.20" r="1.9" fill="#ecc63a" stroke="none" stroke-width="1"/>
<circle cx="1800.10" cy="456.20" r="1.9" fill="#ecc63a" stroke="none" stroke-width="1"/>
<text transform="translate(1783.05 452.00) rotate(0)" x="-1.90" y="2.77" font-size="7.13" textLength="3.80" lengthAdjust="spacingAndGlyphs" fill="#e8bcbc" stroke="#e8bcbc" stroke-width="0.0">2</text>
<text transform="translate(1783.05 460.50) rotate(0)" x="-6.93" y="2.77" font-size="7.13" textLength="13.86" lengthAdjust="spacingAndGlyphs" fill="#e8bcbc" stroke="#e8bcbc" stroke-width="0.0">GND</text>
<text transform="translate(1783.05 405.50) rotate(0)" x="-2.10" y="3.02" font-size="7.81" textLength="4.20" lengthAdjust="spacingAndGlyphs" fill="#ecc4c4" stroke="#ecc4c4" stroke-width="0.0">1</text>
<text transform="translate(1783.05 413.60) rotate(0)" x="-24.18" y="3.02" font-size="7.81" textLength="48.37" lengthAdjust="spacingAndGlyphs" fill="#ecc4c4" stroke="#ecc4c4" stroke-width="0.0">Net-(J6-In)</text>
<path d="M1252.00 251.20 L1245.70 254.60 L1252.00 258.00 Z" stroke="#f2eda1" stroke-width="1.2" fill="none" stroke-linejoin="miter"/>
<path d="M1742.40 251.00 L1748.60 254.40 L1742.40 257.80 Z" stroke="#f2eda1" stroke-width="1.2" fill="none" stroke-linejoin="miter"/>
<path d="M1257.00 405.80 L1250.70 409.20 L1257.00 412.60 Z" stroke="#f2eda1" stroke-width="1.2" fill="none" stroke-linejoin="miter"/>
<path d="M1741.40 406.00 L1747.60 409.40 L1741.40 412.80 Z" stroke="#f2eda1" stroke-width="1.2" fill="none" stroke-linejoin="miter"/>
<text transform="translate(1159.50 254.60) rotate(-90)" x="-8.39" y="5.69" font-size="16.74" textLength="16.79" lengthAdjust="spacingAndGlyphs" fill="#b8b8b4" stroke="#b8b8b4" stroke-width="0.0">J1</text>
<text transform="translate(1162.00 409.50) rotate(-90)" x="-8.39" y="5.69" font-size="16.74" textLength="16.79" lengthAdjust="spacingAndGlyphs" fill="#b8b8b4" stroke="#b8b8b4" stroke-width="0.0">J7</text>
<text transform="translate(1835.60 254.50) rotate(90)" x="-8.39" y="5.69" font-size="16.74" textLength="16.79" lengthAdjust="spacingAndGlyphs" fill="#b8b8b4" stroke="#b8b8b4" stroke-width="0.0">J2</text>
<text transform="translate(1834.60 435.20) rotate(90)" x="-8.39" y="5.69" font-size="16.74" textLength="16.79" lengthAdjust="spacingAndGlyphs" fill="#b8b8b4" stroke="#b8b8b4" stroke-width="0.0">J6</text>
<text transform="translate(1106.80 343.00) rotate(0)" x="0.00" y="5.74" font-size="16.86" textLength="108.50" lengthAdjust="spacingAndGlyphs" fill="#b8b8b4" stroke="#b8b8b4" stroke-width="0.0">Conn_Coaxial</text>
<text transform="translate(1784.60 475.20) rotate(0)" x="0.00" y="5.74" font-size="16.86" textLength="108.50" lengthAdjust="spacingAndGlyphs" fill="#b8b8b4" stroke="#b8b8b4" stroke-width="0.0">Conn_Coaxial</text>
<rect x="1175.50" y="115.40" width="641.90" height="360.00" fill="none" stroke="#a8aca8" stroke-width="1.3" rx="0"/>
<rect x="1424.40" y="123.40" width="52.80" height="24.50" fill="#021426" stroke="none" stroke-width="1" rx="3"/>
<rect x="1438.20" y="142.30" width="3.20" height="5.60" fill="#335383" stroke="none" stroke-width="1" rx="0"/>
<rect x="1427.60" y="131.70" width="5.20" height="7.20" fill="#335383" stroke="none" stroke-width="1" rx="0"/>
<rect x="1515.40" y="123.40" width="53.40" height="23.80" fill="#021426" stroke="none" stroke-width="1" rx="3"/>
<rect x="1529.80" y="141.60" width="3.20" height="5.60" fill="#335383" stroke="none" stroke-width="1" rx="0"/>
<rect x="1519.20" y="131.00" width="5.20" height="7.20" fill="#335383" stroke="none" stroke-width="1" rx="0"/>
<rect x="1435.20" y="332.20" width="54.00" height="28.40" fill="#021426" stroke="none" stroke-width="1" rx="3"/>
<rect x="1448.90" y="355.00" width="3.20" height="5.60" fill="#335383" stroke="none" stroke-width="1" rx="0"/>
<rect x="1438.30" y="344.40" width="5.20" height="7.20" fill="#335383" stroke="none" stroke-width="1" rx="0"/>
<rect x="1501.05" y="173.45" width="8.90" height="4.90" fill="#c4cad2" stroke="none" stroke-width="1" rx="0"/>
<rect x="1503.45" y="174.05" width="4.10" height="3.70" fill="#6c80a4" stroke="none" stroke-width="1" rx="0"/>
<rect x="1501.80" y="166.95" width="7.40" height="6.60" fill="#c83434" stroke="none" stroke-width="1" rx="1.4"/>
<rect x="1501.80" y="178.25" width="7.40" height="6.60" fill="#c83434" stroke="none" stroke-width="1" rx="1.4"/>
<rect x="1500.20" y="165.70" width="10.60" height="20.40" fill="none" stroke="#c23cc8" stroke-width="1.1" rx="0"/>
<rect x="1542.75" y="172.15" width="8.90" height="4.90" fill="#c4cad2" stroke="none" stroke-width="1" rx="0"/>
<rect x="1545.15" y="172.75" width="4.10" height="3.70" fill="#6c80a4" stroke="none" stroke-width="1" rx="0"/>
<rect x="1543.50" y="165.65" width="7.40" height="6.60" fill="#c83434" stroke="none" stroke-width="1" rx="1.4"/>
<rect x="1543.50" y="176.95" width="7.40" height="6.60" fill="#c83434" stroke="none" stroke-width="1" rx="1.4"/>
<rect x="1541.90" y="164.40" width="10.60" height="20.40" fill="none" stroke="#c23cc8" stroke-width="1.1" rx="0"/>
<rect x="1498.05" y="187.45" width="4.90" height="8.90" fill="#c4cad2" stroke="none" stroke-width="1" rx="0"/>
<rect x="1498.65" y="189.85" width="3.70" height="4.10" fill="#6c80a4" stroke="none" stroke-width="1" rx="0"/>
<rect x="1491.55" y="188.20" width="6.60" height="7.40" fill="#c83434" stroke="none" stroke-width="1" rx="1.4"/>
<rect x="1502.85" y="188.20" width="6.60" height="7.40" fill="#c83434" stroke="none" stroke-width="1" rx="1.4"/>
<circle cx="1494.85" cy="191.90" r="2.2" fill="#ecc63a" stroke="none" stroke-width="1"/>
<rect x="1490.30" y="186.60" width="20.40" height="10.60" fill="none" stroke="#c23cc8" stroke-width="1.1" rx="0"/>
<rect x="1518.95" y="187.45" width="4.90" height="8.90" fill="#c4cad2" stroke="none" stroke-width="1" rx="0"/>
<rect x="1519.55" y="189.85" width="3.70" height="4.10" fill="#6c80a4" stroke="none" stroke-width="1" rx="0"/>
<rect x="1512.45" y="188.20" width="6.60" height="7.40" fill="#c83434" stroke="none" stroke-width="1" rx="1.4"/>
<rect x="1523.75" y="188.20" width="6.60" height="7.40" fill="#c83434" stroke="none" stroke-width="1" rx="1.4"/>
<circle cx="1527.05" cy="191.90" r="2.2" fill="#ecc63a" stroke="none" stroke-width="1"/>
<rect x="1511.20" y="186.60" width="20.40" height="10.60" fill="none" stroke="#c23cc8" stroke-width="1.1" rx="0"/>
<rect x="1541.45" y="187.45" width="4.90" height="8.90" fill="#c4cad2" stroke="none" stroke-width="1" rx="0"/>
<rect x="1542.05" y="189.85" width="3.70" height="4.10" fill="#6c80a4" stroke="none" stroke-width="1" rx="0"/>
<rect x="1534.95" y="188.20" width="6.60" height="7.40" fill="#c83434" stroke="none" stroke-width="1" rx="1.4"/>
<rect x="1546.25" y="188.20" width="6.60" height="7.40" fill="#c83434" stroke="none" stroke-width="1" rx="1.4"/>
<circle cx="1549.55" cy="191.90" r="2.2" fill="#ecc63a" stroke="none" stroke-width="1"/>
<rect x="1533.70" y="186.60" width="20.40" height="10.60" fill="none" stroke="#c23cc8" stroke-width="1.1" rx="0"/>
<rect x="1541.45" y="201.55" width="4.90" height="8.90" fill="#c4cad2" stroke="none" stroke-width="1" rx="0"/>
<rect x="1542.05" y="203.95" width="3.70" height="4.10" fill="#6c80a4" stroke="none" stroke-width="1" rx="0"/>
<rect x="1534.95" y="202.30" width="6.60" height="7.40" fill="#c83434" stroke="none" stroke-width="1" rx="1.4"/>
<rect x="1546.25" y="202.30" width="6.60" height="7.40" fill="#c83434" stroke="none" stroke-width="1" rx="1.4"/>
<circle cx="1549.55" cy="206.00" r="2.2" fill="#ecc63a" stroke="none" stroke-width="1"/>
<rect x="1533.70" y="200.70" width="20.40" height="10.60" fill="none" stroke="#c23cc8" stroke-width="1.1" rx="0"/>
<rect x="1482.05" y="216.95" width="8.90" height="4.90" fill="#c4cad2" stroke="none" stroke-width="1" rx="0"/>
<rect x="1484.45" y="217.55" width="4.10" height="3.70" fill="#6c80a4" stroke="none" stroke-width="1" rx="0"/>
<rect x="1482.80" y="210.45" width="7.40" height="6.60" fill="#c83434" stroke="none" stroke-width="1" rx="1.4"/>
<rect x="1482.80" y="221.75" width="7.40" height="6.60" fill="#c83434" stroke="none" stroke-width="1" rx="1.4"/>
<rect x="1481.20" y="209.20" width="10.60" height="20.40" fill="none" stroke="#c23cc8" stroke-width="1.1" rx="0"/>
<rect x="1504.95" y="210.45" width="8.90" height="4.90" fill="#c4cad2" stroke="none" stroke-width="1" rx="0"/>
<rect x="1507.35" y="211.05" width="4.10" height="3.70" fill="#6c80a4" stroke="none" stroke-width="1" rx="0"/>
<rect x="1505.70" y="203.95" width="7.40" height="6.60" fill="#c83434" stroke="none" stroke-width="1" rx="1.4"/>
<rect x="1505.70" y="215.25" width="7.40" height="6.60" fill="#c83434" stroke="none" stroke-width="1" rx="1.4"/>
<rect x="1504.10" y="202.70" width="10.60" height="20.40" fill="none" stroke="#c23cc8" stroke-width="1.1" rx="0"/>
<rect x="1531.80" y="246.90" width="7.00" height="5.00" fill="#c4cad2" stroke="none" stroke-width="1" rx="0"/>
<rect x="1534.20" y="247.50" width="2.20" height="3.80" fill="#6c80a4" stroke="none" stroke-width="1" rx="0"/>
<rect x="1532.05" y="241.40" width="6.50" height="5.40" fill="#c83434" stroke="none" stroke-width="1" rx="1.4"/>
<rect x="1532.05" y="252.00" width="6.50" height="5.40" fill="#c83434" stroke="none" stroke-width="1" rx="1.4"/>
<rect x="1529.90" y="239.20" width="10.80" height="20.40" fill="none" stroke="#c23cc8" stroke-width="1.1" rx="0"/>
<rect x="1459.60" y="250.90" width="3.40" height="8.00" fill="#c4cad2" stroke="none" stroke-width="1" rx="0"/>
<rect x="1460.20" y="253.30" width="2.20" height="3.20" fill="#6c80a4" stroke="none" stroke-width="1" rx="0"/>
<rect x="1454.40" y="251.40" width="5.40" height="7.00" fill="#c83434" stroke="none" stroke-width="1" rx="1.4"/>
<rect x="1462.80" y="251.40" width="5.40" height="7.00" fill="#c83434" stroke="none" stroke-width="1" rx="1.4"/>
<rect x="1457.60" y="249.40" width="12.40" height="10.90" fill="none" stroke="#c23cc8" stroke-width="1.1" rx="0"/>
<rect x="1547.80" y="250.90" width="3.40" height="8.00" fill="#c4cad2" stroke="none" stroke-width="1" rx="0"/>
<rect x="1548.40" y="253.30" width="2.20" height="3.20" fill="#6c80a4" stroke="none" stroke-width="1" rx="0"/>
<rect x="1542.60" y="251.40" width="5.40" height="7.00" fill="#c83434" stroke="none" stroke-width="1" rx="1.4"/>
<rect x="1551.00" y="251.40" width="5.40" height="7.00" fill="#c83434" stroke="none" stroke-width="1" rx="1.4"/>
<rect x="1540.60" y="249.60" width="12.10" height="10.50" fill="none" stroke="#c23cc8" stroke-width="1.1" rx="0"/>
<rect x="1460.95" y="287.55" width="8.90" height="4.90" fill="#c4cad2" stroke="none" stroke-width="1" rx="0"/>
<rect x="1463.35" y="288.15" width="4.10" height="3.70" fill="#6c80a4" stroke="none" stroke-width="1" rx="0"/>
<rect x="1461.70" y="281.05" width="7.40" height="6.60" fill="#c83434" stroke="none" stroke-width="1" rx="1.4"/>
<rect x="1461.70" y="292.35" width="7.40" height="6.60" fill="#c83434" stroke="none" stroke-width="1" rx="1.4"/>
<rect x="1460.10" y="279.80" width="10.60" height="20.40" fill="none" stroke="#c23cc8" stroke-width="1.1" rx="0"/>
<rect x="1454.15" y="305.95" width="4.90" height="8.90" fill="#c4cad2" stroke="none" stroke-width="1" rx="0"/>
<rect x="1454.75" y="308.35" width="3.70" height="4.10" fill="#6c80a4" stroke="none" stroke-width="1" rx="0"/>
<rect x="1447.65" y="306.70" width="6.60" height="7.40" fill="#c83434" stroke="none" stroke-width="1" rx="1.4"/>
<rect x="1458.95" y="306.70" width="6.60" height="7.40" fill="#c83434" stroke="none" stroke-width="1" rx="1.4"/>
<circle cx="1450.95" cy="310.40" r="2.2" fill="#ecc63a" stroke="none" stroke-width="1"/>
<rect x="1446.40" y="305.10" width="20.40" height="10.60" fill="none" stroke="#c23cc8" stroke-width="1.1" rx="0"/>
<rect x="1454.15" y="319.75" width="4.90" height="8.90" fill="#c4cad2" stroke="none" stroke-width="1" rx="0"/>
<rect x="1454.75" y="322.15" width="3.70" height="4.10" fill="#6c80a4" stroke="none" stroke-width="1" rx="0"/>
<rect x="1447.65" y="320.50" width="6.60" height="7.40" fill="#c83434" stroke="none" stroke-width="1" rx="1.4"/>
<rect x="1458.95" y="320.50" width="6.60" height="7.40" fill="#c83434" stroke="none" stroke-width="1" rx="1.4"/>
<circle cx="1450.95" cy="324.20" r="2.2" fill="#ecc63a" stroke="none" stroke-width="1"/>
<rect x="1446.40" y="318.90" width="20.40" height="10.60" fill="none" stroke="#c23cc8" stroke-width="1.1" rx="0"/>
<circle cx="1531.00" cy="157.50" r="3.4" fill="#cc3c34" stroke="none" stroke-width="1"/>
<circle cx="1531.00" cy="157.50" r="2.1" fill="#ecc63a" stroke="none" stroke-width="1"/>
<circle cx="1540.00" cy="157.50" r="3.6" fill="#c83434" stroke="none" stroke-width="1"/>
<path d="M1461.5 135.4 L1461.5 189.3 L1483.5 211.3 L1486.4 214.4" stroke="#c83434" stroke-width="2.1" fill="none" stroke-linejoin="round" stroke-linecap="round"/>
<path d="M1531.4 134.6 L1531.4 144.7 L1505.4 170.2" stroke="#c83434" stroke-width="2.1" fill="none" stroke-linejoin="round" stroke-linecap="round"/>
<path d="M1553.4 134.6 L1553.4 150.7 L1546.1 158.0 L1547.3 169.5" stroke="#c83434" stroke-width="2.1" fill="none" stroke-linejoin="round" stroke-linecap="round"/>
<path d="M1540.2 157.8 L1546.1 158.0" stroke="#c83434" stroke-width="2.1" fill="none" stroke-linejoin="round" stroke-linecap="round"/>
<path d="M1505.4 180.8 L1505.4 192.0 L1516.1 192.0" stroke="#c83434" stroke-width="2.1" fill="none" stroke-linejoin="round" stroke-linecap="round"/>
<path d="M1509.0 192.0 L1509.0 207.3" stroke="#c83434" stroke-width="2.1" fill="none" stroke-linejoin="round" stroke-linecap="round"/>
<path d="M1509.0 218.6 L1509.0 240.0 L1507.8 243.7" stroke="#c83434" stroke-width="2.1" fill="none" stroke-linejoin="round" stroke-linecap="round"/>
<path d="M1486.4 224.5 L1486.4 239.3 L1491.2 243.7" stroke="#c83434" stroke-width="2.1" fill="none" stroke-linejoin="round" stroke-linecap="round"/>
<path d="M1547.3 180.2 L1538.6 187.0 L1538.6 206.3 L1534.8 210.0 L1534.8 244.2" stroke="#c83434" stroke-width="2.1" fill="none" stroke-linejoin="round" stroke-linecap="round"/>
<path d="M1465.8 254.8 L1485.4 254.8" stroke="#c83434" stroke-width="2.0" fill="none" stroke-linejoin="round" stroke-linecap="round"/>
<path d="M1513.5 254.7 L1545.0 254.7" stroke="#c83434" stroke-width="2.0" fill="none" stroke-linejoin="round" stroke-linecap="round"/>
<path d="M1485.4 265.7 L1467.0 283.5 L1465.4 285.0" stroke="#c83434" stroke-width="2.0" fill="none" stroke-linejoin="round" stroke-linecap="round"/>
<path d="M1465.3 295.0 L1465.3 304.0 L1462.8 307.0 L1462.8 325.4 L1472.5 338.4 L1472.5 347.6" stroke="#c83434" stroke-width="2.1" fill="none" stroke-linejoin="round" stroke-linecap="round"/>
<rect x="1484.20" y="242.00" width="31.00" height="31.00" fill="none" stroke="#8494ac" stroke-width="1.1" rx="0"/>
<rect x="1490.40" y="248.70" width="18.70" height="17.60" fill="#c83434" stroke="none" stroke-width="1" rx="0"/>
<rect x="1490.00" y="242.00" width="2.60" height="4.00" fill="#c83434" stroke="none" stroke-width="1" rx="0"/>
<rect x="1490.00" y="269.00" width="2.60" height="4.00" fill="#c83434" stroke="none" stroke-width="1" rx="0"/>
<rect x="1483.60" y="247.90" width="4.00" height="2.60" fill="#c83434" stroke="none" stroke-width="1" rx="0"/>
<rect x="1511.60" y="247.90" width="4.00" height="2.60" fill="#c83434" stroke="none" stroke-width="1" rx="0"/>
<rect x="1495.50" y="242.00" width="2.60" height="4.00" fill="#c83434" stroke="none" stroke-width="1" rx="0"/>
<rect x="1495.50" y="269.00" width="2.60" height="4.00" fill="#c83434" stroke="none" stroke-width="1" rx="0"/>
<rect x="1483.60" y="253.40" width="4.00" height="2.60" fill="#c83434" stroke="none" stroke-width="1" rx="0"/>
<rect x="1511.60" y="253.40" width="4.00" height="2.60" fill="#c83434" stroke="none" stroke-width="1" rx="0"/>
<rect x="1501.00" y="242.00" width="2.60" height="4.00" fill="#c83434" stroke="none" stroke-width="1" rx="0"/>
<rect x="1501.00" y="269.00" width="2.60" height="4.00" fill="#c83434" stroke="none" stroke-width="1" rx="0"/>
<rect x="1483.60" y="258.90" width="4.00" height="2.60" fill="#c83434" stroke="none" stroke-width="1" rx="0"/>
<rect x="1511.60" y="258.90" width="4.00" height="2.60" fill="#c83434" stroke="none" stroke-width="1" rx="0"/>
<rect x="1506.50" y="242.00" width="2.60" height="4.00" fill="#c83434" stroke="none" stroke-width="1" rx="0"/>
<rect x="1506.50" y="269.00" width="2.60" height="4.00" fill="#c83434" stroke="none" stroke-width="1" rx="0"/>
<rect x="1483.60" y="264.40" width="4.00" height="2.60" fill="#c83434" stroke="none" stroke-width="1" rx="0"/>
<rect x="1511.60" y="264.40" width="4.00" height="2.60" fill="#c83434" stroke="none" stroke-width="1" rx="0"/>
<line x1="1496.80" y1="244.00" x2="1496.80" y2="270.00" stroke="#c83434" stroke-width="1.2" stroke-linecap="butt"/>
<line x1="1502.30" y1="244.00" x2="1502.30" y2="270.00" stroke="#c83434" stroke-width="1.2" stroke-linecap="butt"/>
<line x1="1486.00" y1="260.20" x2="1491.00" y2="260.20" stroke="#c83434" stroke-width="1.2" stroke-linecap="butt"/>
<line x1="1513.60" y1="254.70" x2="1513.60" y2="260.20" stroke="#c83434" stroke-width="1.4" stroke-linecap="butt"/>
<circle cx="1493.90" cy="252.60" r="1.4" fill="#ecc63a" stroke="none" stroke-width="1"/>
<circle cx="1493.90" cy="257.60" r="1.4" fill="#ecc63a" stroke="none" stroke-width="1"/>
<circle cx="1493.90" cy="263.30" r="1.4" fill="#ecc63a" stroke="none" stroke-width="1"/>
<circle cx="1499.70" cy="252.60" r="1.4" fill="#ecc63a" stroke="none" stroke-width="1"/>
<circle cx="1499.70" cy="257.60" r="1.4" fill="#ecc63a" stroke="none" stroke-width="1"/>
<circle cx="1499.70" cy="263.30" r="1.4" fill="#ecc63a" stroke="none" stroke-width="1"/>
<circle cx="1505.60" cy="252.60" r="1.4" fill="#ecc63a" stroke="none" stroke-width="1"/>
<circle cx="1505.60" cy="257.60" r="1.4" fill="#ecc63a" stroke="none" stroke-width="1"/>
<circle cx="1505.60" cy="263.30" r="1.4" fill="#ecc63a" stroke="none" stroke-width="1"/>
<text transform="translate(1499.70 252.80) rotate(0)" x="-2.97" y="2.04" font-size="5.07" textLength="5.93" lengthAdjust="spacingAndGlyphs" fill="#eebcbc" stroke="#eebcbc" stroke-width="0.0">17</text>
<text transform="translate(1499.70 262.80) rotate(0)" x="-4.91" y="2.04" font-size="5.07" textLength="9.82" lengthAdjust="spacingAndGlyphs" fill="#eebcbc" stroke="#eebcbc" stroke-width="0.0">GND</text>
<path d="M1509.80 250.40 L1509.80 264.10 L1513.50 264.10" stroke="#c4c8cc" stroke-width="1.3" fill="none" stroke-linejoin="miter"/>
<path d="M1487.60 240.40 L1482.60 240.40 L1482.60 245.40" stroke="#f2eda1" stroke-width="1.4" fill="none" stroke-linejoin="miter"/>
<path d="M1511.80 240.40 L1516.80 240.40 L1516.80 245.40" stroke="#f2eda1" stroke-width="1.4" fill="none" stroke-linejoin="miter"/>
<path d="M1487.60 274.40 L1482.60 274.40 L1482.60 269.40" stroke="#f2eda1" stroke-width="1.4" fill="none" stroke-linejoin="miter"/>
<path d="M1511.80 274.40 L1516.80 274.40 L1516.80 269.40" stroke="#f2eda1" stroke-width="1.4" fill="none" stroke-linejoin="miter"/>
<circle cx="1476.90" cy="249.00" r="1.0" fill="#f2eda1" stroke="none" stroke-width="1"/>
<rect x="1471.80" y="230.00" width="56.00" height="55.40" fill="none" stroke="#c23cc8" stroke-width="1.3" rx="0"/>
<path d="M1428.50 141.30 L1434.50 147.50" stroke="#b4b4b0" stroke-width="1.2" fill="none" stroke-linejoin="miter"/>
<text transform="translate(1450.10 135.60) rotate(0)" x="0.00" y="4.61" font-size="13.72" textLength="7.13" lengthAdjust="spacingAndGlyphs" fill="#707c8c" stroke="#707c8c" stroke-width="0.0">5</text>
<rect x="1450.30" y="123.30" width="23.60" height="24.20" fill="none" stroke="#f2eda1" stroke-width="1.5" rx="0"/>
<path d="M1450.30 123.30 L1428.20 123.30 L1428.20 147.50 L1441.20 147.50" stroke="#d8d6b4" stroke-width="1.5" fill="none" stroke-linejoin="miter"/>
<rect x="1432.40" y="127.90" width="14.80" height="14.80" fill="#c83434" stroke="none" stroke-width="1" rx="0"/>
<circle cx="1461.60" cy="135.30" r="7.7" fill="#c83434" stroke="none" stroke-width="1"/>
<circle cx="1439.80" cy="135.30" r="5.6" fill="#0c1a2c" stroke="#ecc63a" stroke-width="1.3"/>
<circle cx="1461.60" cy="135.30" r="5.6" fill="#0c1a2c" stroke="#ecc63a" stroke-width="1.3"/>
<rect x="1423.40" y="118.40" width="54.80" height="33.10" fill="none" stroke="#c23cc8" stroke-width="1.2" rx="0"/>
<path d="M1520.10 140.60 L1526.10 146.80" stroke="#b4b4b0" stroke-width="1.2" fill="none" stroke-linejoin="miter"/>
<text transform="translate(1541.90 134.90) rotate(0)" x="0.00" y="4.61" font-size="13.72" textLength="7.13" lengthAdjust="spacingAndGlyphs" fill="#707c8c" stroke="#707c8c" stroke-width="0.0">5</text>
<rect x="1542.40" y="122.60" width="23.20" height="24.20" fill="none" stroke="#f2eda1" stroke-width="1.5" rx="0"/>
<path d="M1542.40 122.60 L1519.80 122.60 L1519.80 146.80 L1532.80 146.80" stroke="#d8d6b4" stroke-width="1.5" fill="none" stroke-linejoin="miter"/>
<rect x="1524.00" y="127.20" width="14.80" height="14.80" fill="#c83434" stroke="none" stroke-width="1" rx="0"/>
<circle cx="1553.40" cy="134.60" r="7.7" fill="#c83434" stroke="none" stroke-width="1"/>
<circle cx="1531.40" cy="134.60" r="5.6" fill="#0c1a2c" stroke="#ecc63a" stroke-width="1.3"/>
<circle cx="1553.40" cy="134.60" r="5.6" fill="#0c1a2c" stroke="#ecc63a" stroke-width="1.3"/>
<rect x="1514.40" y="118.00" width="55.40" height="33.30" fill="none" stroke="#c23cc8" stroke-width="1.2" rx="0"/>
<path d="M1438.90 354.00 L1444.90 360.20" stroke="#b4b4b0" stroke-width="1.2" fill="none" stroke-linejoin="miter"/>
<text transform="translate(1460.70 348.30) rotate(0)" x="0.00" y="4.61" font-size="13.72" textLength="7.13" lengthAdjust="spacingAndGlyphs" fill="#707c8c" stroke="#707c8c" stroke-width="0.0">5</text>
<rect x="1461.40" y="336.00" width="24.40" height="24.20" fill="none" stroke="#f2eda1" stroke-width="1.5" rx="0"/>
<path d="M1461.40 336.00 L1438.60 336.00 L1438.60 360.20 L1451.60 360.20" stroke="#d8d6b4" stroke-width="1.5" fill="none" stroke-linejoin="miter"/>
<rect x="1443.10" y="340.60" width="14.80" height="14.80" fill="#c83434" stroke="none" stroke-width="1" rx="0"/>
<circle cx="1472.20" cy="348.00" r="7.7" fill="#c83434" stroke="none" stroke-width="1"/>
<circle cx="1450.50" cy="348.00" r="5.6" fill="#0c1a2c" stroke="#ecc63a" stroke-width="1.3"/>
<circle cx="1472.20" cy="348.00" r="5.6" fill="#0c1a2c" stroke="#ecc63a" stroke-width="1.3"/>
<rect x="1434.20" y="331.70" width="56.00" height="32.60" fill="none" stroke="#c23cc8" stroke-width="1.2" rx="0"/>
<text transform="translate(1615.30 144.60) rotate(0)" x="0.00" y="5.51" font-size="16.24" textLength="180.70" lengthAdjust="spacingAndGlyphs" fill="#f2eda1" stroke="#f2eda1" stroke-width="0.0">QPAS9122 Eval Board</text>
<text transform="translate(1616.30 166.50) rotate(0)" x="0.00" y="5.51" font-size="16.24" textLength="155.60" lengthAdjust="spacingAndGlyphs" fill="#f2eda1" stroke="#f2eda1" stroke-width="0.0">Rice ECE Capstone</text>
<text transform="translate(1616.30 184.90) rotate(0)" x="0.00" y="5.51" font-size="16.24" textLength="135.30" lengthAdjust="spacingAndGlyphs" fill="#f2eda1" stroke="#f2eda1" stroke-width="0.0">Team BEAMFORM</text>
<text transform="translate(1248.00 214.00) rotate(0)" x="0.00" y="5.51" font-size="16.24" textLength="33.90" lengthAdjust="spacingAndGlyphs" fill="#f2eda1" stroke="#f2eda1" stroke-width="0.0">RFIN</text>
<text transform="translate(1695.60 296.00) rotate(0)" x="0.00" y="5.51" font-size="16.24" textLength="49.80" lengthAdjust="spacingAndGlyphs" fill="#f2eda1" stroke="#f2eda1" stroke-width="0.0">RFOUT</text>
<text transform="translate(1545.40 370.00) rotate(0)" x="0.00" y="5.51" font-size="16.24" textLength="91.20" lengthAdjust="spacingAndGlyphs" fill="#f2eda1" stroke="#f2eda1" stroke-width="0.0">T-line test</text>
<text transform="translate(1413.20 155.20) rotate(0)" x="0.00" y="5.51" font-size="16.24" textLength="31.20" lengthAdjust="spacingAndGlyphs" fill="#f2eda1" stroke="#f2eda1" stroke-width="0.0">GND</text>
<text transform="translate(1450.80 155.20) rotate(0)" x="0.00" y="5.51" font-size="16.24" textLength="46.20" lengthAdjust="spacingAndGlyphs" fill="#f2eda1" stroke="#f2eda1" stroke-width="0.0">+1.8V</text>
<text transform="translate(1559.00 154.70) rotate(0)" x="0.00" y="5.51" font-size="16.24" textLength="29.50" lengthAdjust="spacingAndGlyphs" fill="#f2eda1" stroke="#f2eda1" stroke-width="0.0">+5V</text>
<text transform="translate(1420.00 370.00) rotate(0)" x="0.00" y="5.51" font-size="16.24" textLength="31.20" lengthAdjust="spacingAndGlyphs" fill="#f2eda1" stroke="#f2eda1" stroke-width="0.0">GND</text>
<text transform="translate(1463.00 370.00) rotate(0)" x="0.00" y="5.51" font-size="16.24" textLength="29.50" lengthAdjust="spacingAndGlyphs" fill="#f2eda1" stroke="#f2eda1" stroke-width="0.0">+5V</text>
<text transform="translate(1467.80 177.20) rotate(0)" x="0.00" y="5.51" font-size="16.24" textLength="30.50" lengthAdjust="spacingAndGlyphs" fill="#f2eda1" stroke="#f2eda1" stroke-width="0.0">C17</text>
<text transform="translate(1511.00 177.20) rotate(0)" x="0.00" y="5.51" font-size="16.24" textLength="30.50" lengthAdjust="spacingAndGlyphs" fill="#f2eda1" stroke="#f2eda1" stroke-width="0.0">C22</text>
<text transform="translate(1555.00 175.00) rotate(0)" x="0.00" y="5.51" font-size="16.24" textLength="19.60" lengthAdjust="spacingAndGlyphs" fill="#f2eda1" stroke="#f2eda1" stroke-width="0.0">R2</text>
<text transform="translate(1563.00 192.00) rotate(0)" x="0.00" y="5.51" font-size="16.24" textLength="31.00" lengthAdjust="spacingAndGlyphs" fill="#f2eda1" stroke="#f2eda1" stroke-width="0.0">C13</text>
<text transform="translate(1563.00 206.40) rotate(0)" x="0.00" y="5.51" font-size="16.24" textLength="31.00" lengthAdjust="spacingAndGlyphs" fill="#f2eda1" stroke="#f2eda1" stroke-width="0.0">C14</text>
<text transform="translate(1546.60 219.10) rotate(0)" x="0.00" y="5.51" font-size="16.24" textLength="26.30" lengthAdjust="spacingAndGlyphs" fill="#f2eda1" stroke="#f2eda1" stroke-width="0.0">L10</text>
<text transform="translate(1435.50 214.70) rotate(0)" x="0.00" y="5.51" font-size="16.24" textLength="20.50" lengthAdjust="spacingAndGlyphs" fill="#f2eda1" stroke="#f2eda1" stroke-width="0.0">C9</text>
<text transform="translate(1535.80 292.30) rotate(0)" x="0.00" y="5.51" font-size="16.24" textLength="29.60" lengthAdjust="spacingAndGlyphs" fill="#f2eda1" stroke="#f2eda1" stroke-width="0.0">C10</text>
<text transform="translate(1413.90 310.60) rotate(0)" x="0.00" y="5.51" font-size="16.24" textLength="29.80" lengthAdjust="spacingAndGlyphs" fill="#f2eda1" stroke="#f2eda1" stroke-width="0.0">C11</text>
<text transform="translate(1413.90 324.40) rotate(0)" x="0.00" y="5.51" font-size="16.24" textLength="29.80" lengthAdjust="spacingAndGlyphs" fill="#f2eda1" stroke="#f2eda1" stroke-width="0.0">C12</text>
<text transform="translate(1416.10 135.00) rotate(-90)" x="-8.25" y="5.51" font-size="16.24" textLength="16.50" lengthAdjust="spacingAndGlyphs" fill="#f2eda1" stroke="#f2eda1" stroke-width="0.0">J5</text>
<text transform="translate(1581.00 134.30) rotate(90)" x="-8.25" y="5.51" font-size="16.24" textLength="16.50" lengthAdjust="spacingAndGlyphs" fill="#f2eda1" stroke="#f2eda1" stroke-width="0.0">J3</text>
<text transform="translate(1427.00 348.00) rotate(-90)" x="-8.25" y="5.51" font-size="16.24" textLength="16.50" lengthAdjust="spacingAndGlyphs" fill="#f2eda1" stroke="#f2eda1" stroke-width="0.0">J4</text>
<text transform="translate(1506.60 153.30) rotate(-90)" x="-8.50" y="5.51" font-size="16.24" textLength="17.00" lengthAdjust="spacingAndGlyphs" fill="#f2eda1" stroke="#f2eda1" stroke-width="0.0">R1</text>
<text transform="translate(1472.00 216.50) rotate(-90)" x="-9.00" y="5.51" font-size="16.24" textLength="18.00" lengthAdjust="spacingAndGlyphs" fill="#f2eda1" stroke="#f2eda1" stroke-width="0.0">R6</text>
<text transform="translate(1522.60 219.30) rotate(-90)" x="-9.00" y="5.51" font-size="16.24" textLength="18.00" lengthAdjust="spacingAndGlyphs" fill="#f2eda1" stroke="#f2eda1" stroke-width="0.0">R4</text>
<text transform="translate(1452.00 286.00) rotate(-90)" x="-9.00" y="5.51" font-size="16.24" textLength="18.00" lengthAdjust="spacingAndGlyphs" fill="#f2eda1" stroke="#f2eda1" stroke-width="0.0">R9</text>
<text transform="translate(1256.00 297.10) rotate(-90)" x="-8.40" y="5.51" font-size="16.24" textLength="16.80" lengthAdjust="spacingAndGlyphs" fill="#f2eda1" stroke="#f2eda1" stroke-width="0.0">J1</text>
<text transform="translate(1254.70 437.90) rotate(-90)" x="-8.40" y="5.51" font-size="16.24" textLength="16.80" lengthAdjust="spacingAndGlyphs" fill="#f2eda1" stroke="#f2eda1" stroke-width="0.0">J7</text>
<text transform="translate(1739.70 220.50) rotate(90)" x="-8.40" y="5.51" font-size="16.24" textLength="16.80" lengthAdjust="spacingAndGlyphs" fill="#f2eda1" stroke="#f2eda1" stroke-width="0.0">J2</text>
<text transform="translate(1739.30 377.10) rotate(90)" x="-8.40" y="5.51" font-size="16.24" textLength="16.80" lengthAdjust="spacingAndGlyphs" fill="#f2eda1" stroke="#f2eda1" stroke-width="0.0">J6</text>
</g>
</svg></body></html>
